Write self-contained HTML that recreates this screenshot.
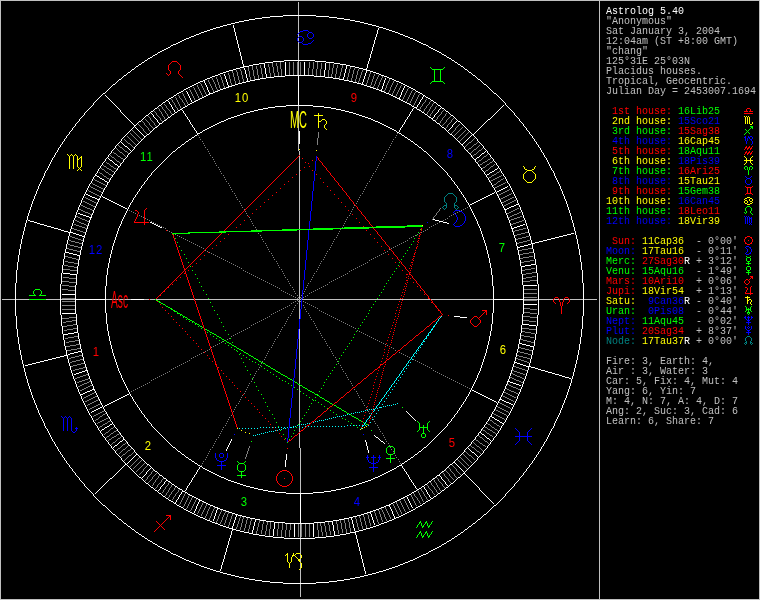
<!DOCTYPE html>
<html lang="en"><head><meta charset="utf-8"><title>Astrolog 5.40</title>
<style>
html,body{margin:0;padding:0;background:#000;}
body{width:760px;height:600px;overflow:hidden;position:relative;}
#chart{position:absolute;left:0;top:0;width:760px;height:600px;display:block;}
#chart path{fill:none;stroke-width:1;shape-rendering:crispEdges;}
#chart text{font-family:"Liberation Sans",sans-serif;}
#chart{will-change:transform;}
#side{position:absolute;left:606px;top:7px;margin:0;font-family:"Liberation Mono",monospace;font-size:10px;line-height:10px;letter-spacing:0;white-space:pre;color:#c0c0c0;}
#side div{height:10px;}
</style></head><body>
<svg id="chart" width="760" height="600" viewBox="0 0 760 600">
<path stroke="#008080" d="M448 193.5h5m-6 1h1m5 0h1m-8 1h1m7 0h1m-10 1h1m9 0h1m-12 1h1m11 0h1m-13 1h1m11 0h1m-13 1h1m11 0h1m-13 1h1m11 0h1m-13 1h1m11 0h1m-12 1h1m9 0h1m-10 1h1m7 0h1m-9 1h1m7 0h1m-11 1h3m7 0h3m-14 1h1m2 0h1m7 0h1m2 0h1m-16 1h1m3 0h1m7 0h1m3 0h1m-16 1h1m1 0h1m9 0h1m1 0h1m-14 1h1m11 0h1m290 127h3m-4 1h1m3 0h1m-6 1h1m5 0h1m-7 1h1m5 0h1m-7 1h1m5 0h1m-6 1h1m3 0h1m-6 1h2m3 0h2m-8 1h1m1 0h1m3 0h1m1 0h1m-8 1h1m5 0h1"/>
<path stroke="#c0c0c0" d="M0 0.5h760m-760 1h1m598 0h1m159 0h1m-760 1h1m297 0h1m300 0h1m159 0h1m-760 1h1m297 0h1m300 0h1m159 0h1m-760 1h1m297 0h1m300 0h1m159 0h1m-760 1h1m297 0h1m300 0h1m159 0h1m-760 1h1m297 0h1m300 0h1m159 0h1m-760 1h1m297 0h1m300 0h1m159 0h1m-760 1h1m297 0h1m300 0h1m159 0h1m-760 1h1m297 0h1m300 0h1m159 0h1m-760 1h1m297 0h1m300 0h1m159 0h1m-760 1h1m297 0h1m300 0h1m159 0h1m-760 1h1m297 0h1m300 0h1m159 0h1m-760 1h1m297 0h1m300 0h1m159 0h1m-760 1h1m297 0h1m300 0h1m159 0h1m-760 1h1m598 0h1m159 0h1m-760 1h1m297 0h1m300 0h1m159 0h1m-760 1h1m297 0h1m300 0h1m159 0h1m-760 1h1m297 0h1m300 0h1m159 0h1m-760 1h1m297 0h1m300 0h1m159 0h1m-760 1h1m297 0h1m300 0h1m159 0h1m-760 1h1m297 0h1m300 0h1m159 0h1m-760 1h1m297 0h1m300 0h1m159 0h1m-760 1h1m297 0h1m300 0h1m159 0h1m-760 1h1m297 0h1m300 0h1m159 0h1m-760 1h1m297 0h1m300 0h1m159 0h1m-760 1h1m297 0h1m300 0h1m159 0h1m-760 1h1m297 0h1m300 0h1m159 0h1m-760 1h1m297 0h1m300 0h1m159 0h1m-760 1h1m297 0h1m300 0h1m159 0h1m-760 1h1m297 0h1m300 0h1m159 0h1m-760 1h1m297 0h1m300 0h1m159 0h1m-760 1h1m297 0h1m300 0h1m159 0h1m-760 1h1m598 0h1m159 0h1m-760 1h1m297 0h1m300 0h1m159 0h1m-760 1h1m297 0h1m300 0h1m159 0h1m-760 1h1m297 0h1m300 0h1m159 0h1m-760 1h1m598 0h1m159 0h1m-760 1h1m297 0h1m300 0h1m159 0h1m-760 1h1m297 0h1m300 0h1m159 0h1m-760 1h1m297 0h1m300 0h1m159 0h1m-760 1h1m598 0h1m159 0h1m-760 1h1m297 0h1m300 0h1m159 0h1m-760 1h1m297 0h1m300 0h1m159 0h1m-760 1h1m297 0h1m300 0h1m159 0h1m-760 1h1m297 0h1m300 0h1m159 0h1m-760 1h1m297 0h1m300 0h1m159 0h1m-760 1h1m297 0h1m300 0h1m159 0h1m-760 1h1m297 0h1m300 0h1m159 0h1m-760 1h1m297 0h1m300 0h1m159 0h1m-760 1h1m297 0h1m300 0h1m159 0h1m-760 1h1m297 0h1m300 0h1m159 0h1m-760 1h1m297 0h1m300 0h1m159 0h1m-760 1h1m297 0h1m300 0h1m159 0h1m-760 1h1m297 0h1m300 0h1m159 0h1m-760 1h1m297 0h1m300 0h1m159 0h1m-760 1h1m297 0h1m300 0h1m159 0h1m-760 1h1m297 0h1m300 0h1m159 0h1m-760 1h1m297 0h1m300 0h1m159 0h1m-760 1h1m297 0h1m300 0h1m159 0h1m-760 1h1m598 0h1m159 0h1m-760 1h1m297 0h1m300 0h1m159 0h1m-760 1h1m297 0h1m300 0h1m159 0h1m-760 1h1m297 0h1m300 0h1m159 0h1m-760 1h1m297 0h1m300 0h1m159 0h1m-760 1h1m297 0h1m300 0h1m159 0h1m-760 1h1m297 0h1m300 0h1m159 0h1m-760 1h1m297 0h1m300 0h1m159 0h1m-760 1h1m297 0h1m300 0h1m159 0h1m-760 1h1m297 0h1m300 0h1m159 0h1m-760 1h1m297 0h1m300 0h1m159 0h1m-760 1h1m297 0h1m300 0h1m159 0h1m-760 1h1m297 0h1m300 0h1m159 0h1m-760 1h1m297 0h1m300 0h1m159 0h1m-760 1h1m297 0h1m300 0h1m159 0h1m-760 1h1m598 0h1m159 0h1m-760 1h1m598 0h1m159 0h1m-760 1h1m598 0h1m159 0h1m-760 1h1m598 0h1m159 0h1m-760 1h1m598 0h1m159 0h1m-760 1h1m598 0h1m159 0h1m-760 1h1m598 0h1m159 0h1m-760 1h1m598 0h1m159 0h1m-760 1h1m598 0h1m159 0h1m-760 1h1m598 0h1m159 0h1m-760 1h1m598 0h1m159 0h1m-760 1h1m598 0h1m159 0h1m-760 1h1m598 0h1m159 0h1m-760 1h1m598 0h1m159 0h1m-760 1h1m598 0h1m159 0h1m-760 1h1m598 0h1m159 0h1m-760 1h1m598 0h1m159 0h1m-760 1h1m598 0h1m159 0h1m-760 1h1m598 0h1m159 0h1m-760 1h1m598 0h1m159 0h1m-760 1h1m598 0h1m159 0h1m-760 1h1m598 0h1m159 0h1m-760 1h1m598 0h1m159 0h1m-760 1h1m598 0h1m159 0h1m-760 1h1m598 0h1m159 0h1m-760 1h1m598 0h1m159 0h1m-760 1h1m598 0h1m159 0h1m-760 1h1m598 0h1m159 0h1m-760 1h1m598 0h1m159 0h1m-760 1h1m598 0h1m159 0h1m-760 1h1m598 0h1m159 0h1m-760 1h1m297 0h1m300 0h1m159 0h1m-760 1h1m297 0h1m300 0h1m159 0h1m-760 1h1m297 0h1m300 0h1m159 0h1m-760 1h1m297 0h1m300 0h1m159 0h1m-760 1h1m297 0h1m300 0h1m159 0h1m-760 1h1m297 0h1m300 0h1m159 0h1m-760 1h1m297 0h1m300 0h1m159 0h1m-760 1h1m297 0h1m300 0h1m159 0h1m-760 1h1m297 0h1m300 0h1m159 0h1m-760 1h1m297 0h1m300 0h1m159 0h1m-760 1h1m297 0h1m300 0h1m159 0h1m-760 1h1m297 0h1m300 0h1m159 0h1m-760 1h1m297 0h1m300 0h1m159 0h1m-760 1h1m297 0h1m300 0h1m159 0h1m-760 1h1m297 0h1m300 0h1m159 0h1m-760 1h1m297 0h1m300 0h1m159 0h1m-760 1h1m297 0h1m300 0h1m159 0h1m-760 1h1m297 0h1m300 0h1m159 0h1m-760 1h1m297 0h1m300 0h1m159 0h1m-760 1h1m297 0h1m300 0h1m159 0h1m-760 1h1m297 0h1m300 0h1m159 0h1m-760 1h1m297 0h1m300 0h1m159 0h1m-760 1h1m297 0h1m300 0h1m159 0h1m-760 1h1m297 0h1m300 0h1m159 0h1m-760 1h1m297 0h1m300 0h1m159 0h1m-760 1h1m297 0h1m300 0h1m159 0h1m-760 1h1m297 0h1m300 0h1m159 0h1m-760 1h1m297 0h1m300 0h1m159 0h1m-760 1h1m297 0h1m300 0h1m159 0h1m-760 1h1m297 0h1m300 0h1m159 0h1m-760 1h1m297 0h1m300 0h1m159 0h1m-760 1h1m297 0h1m300 0h1m159 0h1m-760 1h1m297 0h1m300 0h1m159 0h1m-760 1h1m297 0h1m300 0h1m159 0h1m-760 1h1m297 0h1m300 0h1m159 0h1m-760 1h1m297 0h1m300 0h1m159 0h1m-760 1h1m297 0h1m300 0h1m159 0h1m-760 1h1m297 0h1m300 0h1m159 0h1m-760 1h1m297 0h1m300 0h1m159 0h1m-760 1h1m297 0h1m300 0h1m159 0h1m-760 1h1m297 0h1m300 0h1m159 0h1m-760 1h1m297 0h1m300 0h1m159 0h1m-760 1h1m297 0h1m300 0h1m159 0h1m-760 1h1m297 0h1m300 0h1m159 0h1m-760 1h1m297 0h1m300 0h1m159 0h1m-760 1h1m298 0h1m299 0h1m159 0h1m-760 1h1m298 0h1m299 0h1m159 0h1m-760 1h1m298 0h1m299 0h1m159 0h1m-760 1h1m298 0h1m299 0h1m159 0h1m-760 1h1m598 0h1m159 0h1m-760 1h1m298 0h1m299 0h1m159 0h1m-760 1h1m298 0h1m299 0h1m159 0h1m-760 1h1m298 0h1m299 0h1m159 0h1m-760 1h1m298 0h1m299 0h1m159 0h1m-760 1h1m298 0h1m299 0h1m159 0h1m-760 1h1m298 0h1m299 0h1m159 0h1m-760 1h1m298 0h1m299 0h1m159 0h1m-760 1h1m298 0h1m299 0h1m159 0h1m-760 1h1m298 0h1m299 0h1m159 0h1m-760 1h1m298 0h1m299 0h1m159 0h1m-760 1h1m298 0h1m299 0h1m159 0h1m-760 1h1m298 0h1m299 0h1m159 0h1m-760 1h1m298 0h1m299 0h1m159 0h1m-760 1h1m298 0h1m299 0h1m159 0h1m-760 1h1m298 0h1m299 0h1m159 0h1m-760 1h1m298 0h1m299 0h1m159 0h1m-760 1h1m298 0h1m299 0h1m159 0h1m-760 1h1m298 0h1m299 0h1m159 0h1m-760 1h1m298 0h1m299 0h1m159 0h1m-760 1h1m298 0h1m299 0h1m159 0h1m-760 1h1m298 0h1m299 0h1m159 0h1m-760 1h1m298 0h1m299 0h1m159 0h1m-760 1h1m298 0h1m299 0h1m159 0h1m-760 1h1m298 0h1m299 0h1m159 0h1m-760 1h1m298 0h1m299 0h1m159 0h1m-760 1h1m298 0h1m299 0h1m159 0h1m-760 1h1m298 0h1m299 0h1m159 0h1m-760 1h1m298 0h1m299 0h1m159 0h1m-760 1h1m298 0h1m299 0h1m159 0h1m-760 1h1m298 0h1m299 0h1m159 0h1m-760 1h1m298 0h1m299 0h1m159 0h1m-760 1h1m298 0h1m299 0h1m159 0h1m-760 1h1m298 0h1m299 0h1m159 0h1m-760 1h1m298 0h1m299 0h1m159 0h1m-760 1h1m298 0h1m299 0h1m159 0h1m-760 1h1m298 0h1m299 0h1m159 0h1m-760 1h1m298 0h1m299 0h1m159 0h1m-760 1h1m298 0h1m299 0h1m159 0h1m-760 1h1m298 0h1m299 0h1m159 0h1m-760 1h1m298 0h1m299 0h1m159 0h1m-760 1h1m298 0h1m299 0h1m159 0h1m-760 1h1m298 0h1m299 0h1m159 0h1m-760 1h1m298 0h1m299 0h1m159 0h1m-760 1h1m298 0h1m299 0h1m159 0h1m-760 1h1m298 0h1m299 0h1m159 0h1m-760 1h1m298 0h1m299 0h1m159 0h1m-760 1h1m298 0h1m299 0h1m159 0h1m-760 1h1m298 0h1m299 0h1m159 0h1m-760 1h1m298 0h1m299 0h1m159 0h1m-760 1h1m298 0h1m299 0h1m159 0h1m-760 1h1m298 0h1m299 0h1m159 0h1m-760 1h1m298 0h1m299 0h1m159 0h1m-760 1h1m298 0h1m299 0h1m159 0h1m-760 1h1m298 0h1m299 0h1m159 0h1m-760 1h1m298 0h1m299 0h1m159 0h1m-760 1h1m298 0h1m299 0h1m159 0h1m-760 1h1m298 0h1m299 0h1m159 0h1m-760 1h1m298 0h1m299 0h1m159 0h1m-760 1h1m298 0h1m299 0h1m159 0h1m-760 1h1m298 0h1m299 0h1m159 0h1m-760 1h1m298 0h1m299 0h1m159 0h1m-760 1h1m298 0h1m299 0h1m159 0h1m-760 1h1m298 0h1m299 0h1m159 0h1m-760 1h1m298 0h1m299 0h1m159 0h1m-760 1h1m298 0h1m299 0h1m159 0h1m-760 1h1m298 0h1m299 0h1m159 0h1m-760 1h1m298 0h1m299 0h1m159 0h1m-760 1h1m298 0h1m299 0h1m159 0h1m-760 1h1m298 0h1m299 0h1m159 0h1m-760 1h1m298 0h1m299 0h1m159 0h1m-760 1h1m298 0h1m299 0h1m159 0h1m-760 1h1m298 0h1m299 0h1m159 0h1m-760 1h1m298 0h1m299 0h1m159 0h1m-760 1h1m598 0h1m159 0h1m-760 1h1m298 0h1m299 0h1m159 0h1m-760 1h1m298 0h1m299 0h1m159 0h1m-760 1h1m298 0h1m299 0h1m159 0h1m-760 1h1m298 0h1m299 0h1m159 0h1m-760 1h1m298 0h1m299 0h1m159 0h1m-760 1h1m298 0h1m299 0h1m159 0h1m-760 1h1m298 0h1m299 0h1m159 0h1m-760 1h1m298 0h1m299 0h1m159 0h1m-760 1h1m298 0h1m299 0h1m159 0h1m-760 1h1m298 0h1m299 0h1m159 0h1m-760 1h1m298 0h1m299 0h1m159 0h1m-760 1h1m298 0h1m299 0h1m159 0h1m-760 1h1m298 0h1m299 0h1m159 0h1m-760 1h1m298 0h1m299 0h1m159 0h1m-760 1h1m298 0h1m299 0h1m159 0h1m-760 1h1m298 0h1m299 0h1m159 0h1m-760 1h1m298 0h1m299 0h1m159 0h1m-760 1h1m298 0h1m299 0h1m159 0h1m-760 1h1m298 0h1m299 0h1m159 0h1m-760 1h1m298 0h1m299 0h1m159 0h1m-760 1h1m298 0h1m299 0h1m159 0h1m-760 1h1m298 0h1m299 0h1m159 0h1m-760 1h1m298 0h1m299 0h1m159 0h1m-760 1h1m298 0h1m299 0h1m159 0h1m-760 1h1m298 0h1m299 0h1m159 0h1m-760 1h1m298 0h1m299 0h1m159 0h1m-760 1h1m298 0h1m299 0h1m159 0h1m-760 1h1m298 0h1m299 0h1m159 0h1m-760 1h1m298 0h1m299 0h1m159 0h1m-760 1h1m298 0h1m299 0h1m159 0h1m-760 1h1m298 0h1m299 0h1m159 0h1m-760 1h1m298 0h1m299 0h1m159 0h1m-760 1h1m298 0h1m299 0h1m159 0h1m-760 1h1m298 0h1m299 0h1m159 0h1m-760 1h1m298 0h1m299 0h1m159 0h1m-760 1h1m298 0h1m299 0h1m159 0h1m-760 1h1m298 0h1m299 0h1m159 0h1m-760 1h1m298 0h1m299 0h1m159 0h1m-760 1h1m298 0h1m299 0h1m159 0h1m-760 1h1m298 0h1m299 0h1m159 0h1m-760 1h1m298 0h1m299 0h1m159 0h1m-760 1h1m298 0h1m299 0h1m159 0h1m-760 1h1m298 0h1m299 0h1m159 0h1m-760 1h1m298 0h1m299 0h1m159 0h1m-760 1h1m298 0h1m299 0h1m159 0h1m-760 1h1m298 0h1m299 0h1m159 0h1m-760 1h1m298 0h1m299 0h1m159 0h1m-760 1h1m298 0h1m299 0h1m159 0h1m-760 1h1m298 0h1m299 0h1m159 0h1m-760 1h1m298 0h1m299 0h1m159 0h1m-760 1h1m298 0h1m299 0h1m159 0h1m-760 1h1m298 0h1m299 0h1m159 0h1m-760 1h1m298 0h1m299 0h1m159 0h1m-760 1h1m298 0h1m299 0h1m159 0h1m-760 1h1m298 0h1m299 0h1m159 0h1m-760 1h1m298 0h1m299 0h1m159 0h1m-760 1h1m298 0h1m299 0h1m159 0h1m-760 1h1m298 0h1m299 0h1m159 0h1m-760 1h1m298 0h1m299 0h1m159 0h1m-760 1h1m298 0h1m299 0h1m159 0h1m-760 1h1m298 0h1m299 0h1m159 0h1m-760 1h1m298 0h1m299 0h1m159 0h1m-760 1h1m298 0h1m299 0h1m159 0h1m-760 1h1m298 0h1m299 0h1m159 0h1m-760 1h1m298 0h1m299 0h1m159 0h1m-760 1h1m298 0h1m299 0h1m159 0h1m-760 1h1m298 0h1m299 0h1m159 0h1m-760 1h1m298 0h1m299 0h1m159 0h1m-760 1h1m298 0h1m299 0h1m159 0h1m-760 1h1m1 0h13m1 0h13m17 0h14m1 0h14m31 0h25m13 0h5m1 0h5m1 0h38m1 0h104m1 0h1m1 0h128m1 0h62m31 0h14m1 0h14m1 0h5m1 0h3m1 0h5m1 0h13m1 0h13m2 0h1m159 0h1m-760 1h1m298 0h1m299 0h1m159 0h1m-760 1h1m298 0h1m299 0h1m159 0h1m-760 1h1m298 0h1m299 0h1m159 0h1m-760 1h1m298 0h1m299 0h1m159 0h1m-760 1h1m298 0h1m299 0h1m159 0h1m-760 1h1m298 0h1m299 0h1m159 0h1m-760 1h1m298 0h1m299 0h1m159 0h1m-760 1h1m298 0h1m299 0h1m159 0h1m-760 1h1m298 0h1m299 0h1m159 0h1m-760 1h1m298 0h1m299 0h1m159 0h1m-760 1h1m298 0h1m299 0h1m159 0h1m-760 1h1m298 0h1m299 0h1m159 0h1m-760 1h1m298 0h1m299 0h1m159 0h1m-760 1h1m298 0h1m299 0h1m159 0h1m-760 1h1m298 0h1m299 0h1m159 0h1m-760 1h1m298 0h1m299 0h1m159 0h1m-760 1h1m298 0h1m299 0h1m159 0h1m-760 1h1m298 0h1m299 0h1m159 0h1m-760 1h1m298 0h1m299 0h1m159 0h1m-760 1h1m598 0h1m159 0h1m-760 1h1m598 0h1m159 0h1m-760 1h1m598 0h1m159 0h1m-760 1h1m598 0h1m159 0h1m-760 1h1m598 0h1m159 0h1m-760 1h1m598 0h1m159 0h1m-760 1h1m598 0h1m159 0h1m-760 1h1m598 0h1m159 0h1m-760 1h1m598 0h1m159 0h1m-760 1h1m598 0h1m159 0h1m-760 1h1m298 0h1m299 0h1m159 0h1m-760 1h1m298 0h1m299 0h1m159 0h1m-760 1h1m298 0h1m299 0h1m159 0h1m-760 1h1m298 0h1m299 0h1m159 0h1m-760 1h1m298 0h1m299 0h1m159 0h1m-760 1h1m298 0h1m299 0h1m159 0h1m-760 1h1m298 0h1m299 0h1m159 0h1m-760 1h1m298 0h1m299 0h1m159 0h1m-760 1h1m298 0h1m299 0h1m159 0h1m-760 1h1m298 0h1m299 0h1m159 0h1m-760 1h1m298 0h1m299 0h1m159 0h1m-760 1h1m298 0h1m299 0h1m159 0h1m-760 1h1m298 0h1m299 0h1m159 0h1m-760 1h1m298 0h1m299 0h1m159 0h1m-760 1h1m298 0h1m299 0h1m159 0h1m-760 1h1m298 0h1m299 0h1m159 0h1m-760 1h1m298 0h1m299 0h1m159 0h1m-760 1h1m298 0h1m299 0h1m159 0h1m-760 1h1m298 0h1m299 0h1m159 0h1m-760 1h1m298 0h1m299 0h1m159 0h1m-760 1h1m298 0h1m299 0h1m159 0h1m-760 1h1m298 0h1m299 0h1m159 0h1m-760 1h1m298 0h1m299 0h1m159 0h1m-760 1h1m298 0h1m299 0h1m159 0h1m-760 1h1m298 0h1m299 0h1m159 0h1m-760 1h1m298 0h1m299 0h1m159 0h1m-760 1h1m298 0h1m299 0h1m159 0h1m-760 1h1m298 0h1m299 0h1m159 0h1m-760 1h1m298 0h1m299 0h1m159 0h1m-760 1h1m298 0h1m299 0h1m159 0h1m-760 1h1m298 0h1m299 0h1m159 0h1m-760 1h1m298 0h1m299 0h1m159 0h1m-760 1h1m298 0h1m299 0h1m159 0h1m-760 1h1m298 0h1m299 0h1m159 0h1m-760 1h1m298 0h1m299 0h1m159 0h1m-760 1h1m298 0h1m299 0h1m159 0h1m-760 1h1m298 0h1m299 0h1m159 0h1m-760 1h1m298 0h1m299 0h1m159 0h1m-760 1h1m298 0h1m299 0h1m159 0h1m-760 1h1m298 0h1m299 0h1m159 0h1m-760 1h1m298 0h1m299 0h1m159 0h1m-760 1h1m298 0h1m299 0h1m159 0h1m-760 1h1m298 0h1m299 0h1m159 0h1m-760 1h1m298 0h1m299 0h1m159 0h1m-760 1h1m298 0h1m299 0h1m159 0h1m-760 1h1m298 0h1m299 0h1m159 0h1m-760 1h1m298 0h1m299 0h1m159 0h1m-760 1h1m298 0h1m299 0h1m159 0h1m-760 1h1m298 0h1m299 0h1m159 0h1m-760 1h1m298 0h1m299 0h1m159 0h1m-760 1h1m298 0h1m299 0h1m159 0h1m-760 1h1m298 0h1m299 0h1m159 0h1m-760 1h1m298 0h1m299 0h1m159 0h1m-760 1h1m298 0h1m299 0h1m159 0h1m-760 1h1m298 0h1m299 0h1m159 0h1m-760 1h1m598 0h1m159 0h1m-760 1h1m298 0h1m299 0h1m159 0h1m-760 1h1m298 0h1m299 0h1m159 0h1m-760 1h1m298 0h1m299 0h1m159 0h1m-760 1h1m298 0h1m299 0h1m159 0h1m-760 1h1m298 0h1m299 0h1m159 0h1m-760 1h1m298 0h1m299 0h1m159 0h1m-760 1h1m298 0h1m299 0h1m159 0h1m-760 1h1m298 0h1m299 0h1m159 0h1m-760 1h1m298 0h1m299 0h1m159 0h1m-760 1h1m298 0h1m299 0h1m159 0h1m-760 1h1m298 0h1m299 0h1m159 0h1m-760 1h1m298 0h1m299 0h1m159 0h1m-760 1h1m298 0h1m299 0h1m159 0h1m-760 1h1m298 0h1m299 0h1m159 0h1m-760 1h1m298 0h1m299 0h1m159 0h1m-760 1h1m298 0h1m299 0h1m159 0h1m-760 1h1m298 0h1m299 0h1m159 0h1m-760 1h1m298 0h1m299 0h1m159 0h1m-760 1h1m298 0h1m299 0h1m159 0h1m-760 1h1m298 0h1m299 0h1m159 0h1m-760 1h1m298 0h1m299 0h1m159 0h1m-760 1h1m298 0h1m299 0h1m159 0h1m-760 1h1m298 0h1m299 0h1m159 0h1m-760 1h1m298 0h1m299 0h1m159 0h1m-760 1h1m298 0h1m299 0h1m159 0h1m-760 1h1m298 0h1m299 0h1m159 0h1m-760 1h1m298 0h1m299 0h1m159 0h1m-760 1h1m298 0h1m299 0h1m159 0h1m-760 1h1m298 0h1m299 0h1m159 0h1m-760 1h1m298 0h1m299 0h1m159 0h1m-760 1h1m298 0h1m299 0h1m159 0h1m-760 1h1m298 0h1m299 0h1m159 0h1m-760 1h1m298 0h1m299 0h1m159 0h1m-760 1h1m298 0h1m299 0h1m159 0h1m-760 1h1m298 0h1m299 0h1m159 0h1m-760 1h1m298 0h1m299 0h1m159 0h1m-760 1h1m298 0h1m299 0h1m159 0h1m-760 1h1m298 0h1m299 0h1m159 0h1m-760 1h1m298 0h1m299 0h1m159 0h1m-760 1h1m298 0h1m299 0h1m159 0h1m-760 1h1m598 0h1m159 0h1m-760 1h1m298 0h1m299 0h1m159 0h1m-760 1h1m598 0h1m159 0h1m-760 1h1m298 0h1m299 0h1m159 0h1m-760 1h1m298 0h1m299 0h1m159 0h1m-760 1h1m298 0h1m299 0h1m159 0h1m-760 1h1m298 0h1m299 0h1m159 0h1m-760 1h1m598 0h1m159 0h1m-760 1h1m298 0h1m299 0h1m159 0h1m-760 1h1m298 0h1m299 0h1m159 0h1m-760 1h1m298 0h1m299 0h1m159 0h1m-760 1h1m298 0h1m299 0h1m159 0h1m-760 1h1m298 0h1m299 0h1m159 0h1m-760 1h1m298 0h1m299 0h1m159 0h1m-760 1h1m298 0h1m299 0h1m159 0h1m-760 1h1m298 0h1m299 0h1m159 0h1m-760 1h1m298 0h1m299 0h1m159 0h1m-760 1h1m298 0h1m299 0h1m159 0h1m-760 1h1m298 0h1m299 0h1m159 0h1m-760 1h1m298 0h1m299 0h1m159 0h1m-760 1h1m298 0h1m299 0h1m159 0h1m-760 1h1m298 0h1m299 0h1m159 0h1m-760 1h1m298 0h1m299 0h1m159 0h1m-760 1h1m299 0h1m298 0h1m159 0h1m-760 1h1m299 0h1m298 0h1m159 0h1m-760 1h1m299 0h1m298 0h1m159 0h1m-760 1h1m299 0h1m298 0h1m159 0h1m-760 1h1m299 0h1m298 0h1m159 0h1m-760 1h1m299 0h1m298 0h1m159 0h1m-760 1h1m299 0h1m298 0h1m159 0h1m-760 1h1m299 0h1m298 0h1m159 0h1m-760 1h1m299 0h1m298 0h1m159 0h1m-760 1h1m299 0h1m298 0h1m159 0h1m-760 1h1m299 0h1m298 0h1m159 0h1m-760 1h1m299 0h1m298 0h1m159 0h1m-760 1h1m299 0h1m298 0h1m159 0h1m-760 1h1m299 0h1m298 0h1m159 0h1m-760 1h1m299 0h1m298 0h1m159 0h1m-760 1h1m299 0h1m298 0h1m159 0h1m-760 1h1m299 0h1m298 0h1m159 0h1m-760 1h1m299 0h1m298 0h1m159 0h1m-760 1h1m299 0h1m298 0h1m159 0h1m-760 1h1m299 0h1m298 0h1m159 0h1m-760 1h1m299 0h1m298 0h1m159 0h1m-760 1h1m299 0h1m298 0h1m159 0h1m-760 1h1m299 0h1m298 0h1m159 0h1m-760 1h1m299 0h1m298 0h1m159 0h1m-760 1h1m299 0h1m298 0h1m159 0h1m-760 1h1m299 0h1m298 0h1m159 0h1m-760 1h1m299 0h1m298 0h1m159 0h1m-760 1h1m299 0h1m298 0h1m159 0h1m-760 1h1m299 0h1m298 0h1m159 0h1m-760 1h1m299 0h1m298 0h1m159 0h1m-760 1h1m299 0h1m298 0h1m159 0h1m-760 1h1m299 0h1m298 0h1m159 0h1m-760 1h1m299 0h1m298 0h1m159 0h1m-760 1h1m299 0h1m298 0h1m159 0h1m-760 1h1m299 0h1m298 0h1m159 0h1m-760 1h1m299 0h1m298 0h1m159 0h1m-760 1h1m299 0h1m298 0h1m159 0h1m-760 1h1m299 0h1m298 0h1m159 0h1m-760 1h1m299 0h1m298 0h1m159 0h1m-760 1h1m299 0h1m298 0h1m159 0h1m-760 1h1m299 0h1m298 0h1m159 0h1m-760 1h1m299 0h1m298 0h1m159 0h1m-760 1h1m299 0h1m298 0h1m159 0h1m-760 1h1m299 0h1m298 0h1m159 0h1m-760 1h1m299 0h1m298 0h1m159 0h1m-760 1h1m598 0h1m159 0h1m-760 1h1m598 0h1m159 0h1m-760 1h1m598 0h1m159 0h1m-760 1h1m598 0h1m159 0h1m-760 1h1m598 0h1m159 0h1m-760 1h1m598 0h1m159 0h1m-760 1h1m598 0h1m159 0h1m-760 1h1m598 0h1m159 0h1m-760 1h1m598 0h1m159 0h1m-760 1h1m598 0h1m159 0h1m-760 1h1m598 0h1m159 0h1m-760 1h1m598 0h1m159 0h1m-760 1h1m598 0h1m159 0h1m-760 1h1m598 0h1m159 0h1m-760 1h1m598 0h1m159 0h1m-760 1h1m598 0h1m159 0h1m-760 1h1m598 0h1m159 0h1m-760 1h1m598 0h1m159 0h1m-760 1h1m598 0h1m159 0h1m-760 1h1m598 0h1m159 0h1m-760 1h1m598 0h1m159 0h1m-760 1h1m598 0h1m159 0h1m-760 1h1m598 0h1m159 0h1m-760 1h1m598 0h1m159 0h1m-760 1h1m598 0h1m159 0h1m-760 1h1m598 0h1m159 0h1m-760 1h1m598 0h1m159 0h1m-760 1h1m598 0h1m159 0h1m-760 1h1m598 0h1m159 0h1m-760 1h1m598 0h1m159 0h1m-760 1h1m598 0h1m159 0h1m-760 1h1m299 0h1m298 0h1m159 0h1m-760 1h1m299 0h1m298 0h1m159 0h1m-760 1h1m299 0h1m298 0h1m159 0h1m-760 1h1m299 0h1m298 0h1m159 0h1m-760 1h1m299 0h1m298 0h1m159 0h1m-760 1h1m299 0h1m298 0h1m159 0h1m-760 1h1m299 0h1m298 0h1m159 0h1m-760 1h1m299 0h1m298 0h1m159 0h1m-760 1h1m299 0h1m298 0h1m159 0h1m-760 1h1m299 0h1m298 0h1m159 0h1m-760 1h1m299 0h1m298 0h1m159 0h1m-760 1h1m299 0h1m298 0h1m159 0h1m-760 1h1m299 0h1m298 0h1m159 0h1m-760 1h1m299 0h1m298 0h1m159 0h1m-760 1h1m598 0h1m159 0h1m-760 1h1m299 0h1m298 0h1m159 0h1m-760 1h1m299 0h1m298 0h1m159 0h1m-760 1h1m299 0h1m298 0h1m159 0h1m-760 1h1m299 0h1m298 0h1m159 0h1m-760 1h1m299 0h1m298 0h1m159 0h1m-760 1h1m299 0h1m298 0h1m159 0h1m-760 1h1m299 0h1m298 0h1m159 0h1m-760 1h1m299 0h1m298 0h1m159 0h1m-760 1h1m299 0h1m298 0h1m159 0h1m-760 1h1m299 0h1m298 0h1m159 0h1m-760 1h1m299 0h1m298 0h1m159 0h1m-760 1h1m299 0h1m298 0h1m159 0h1m-760 1h1m299 0h1m298 0h1m159 0h1m-760 1h1m299 0h1m298 0h1m159 0h1m-760 1h1m299 0h1m298 0h1m159 0h1m-760 1h1m598 0h1m159 0h1m-760 1h1m299 0h1m298 0h1m159 0h1m-760 1h1m299 0h1m298 0h1m159 0h1m-760 1h1m299 0h1m298 0h1m159 0h1m-760 1h1m598 0h1m159 0h1m-760 1h1m299 0h1m298 0h1m159 0h1m-760 1h1m299 0h1m298 0h1m159 0h1m-760 1h1m299 0h1m298 0h1m159 0h1m-760 1h1m598 0h1m159 0h1m-760 1h1m299 0h1m298 0h1m159 0h1m-760 1h1m299 0h1m298 0h1m159 0h1m-760 1h1m299 0h1m298 0h1m159 0h1m-760 1h1m299 0h1m298 0h1m159 0h1m-760 1h1m299 0h1m298 0h1m159 0h1m-760 1h1m598 0h1m159 0h1m-760 1h1m299 0h1m298 0h1m159 0h1m-760 1h1m299 0h1m298 0h1m159 0h1m-760 1h1m299 0h1m298 0h1m159 0h1m-760 1h1m299 0h1m298 0h1m159 0h1m-760 1h1m299 0h1m298 0h1m159 0h1m-760 1h1m299 0h1m298 0h1m159 0h1m-760 1h1m299 0h1m298 0h1m159 0h1m-760 1h1m299 0h1m298 0h1m159 0h1m-760 1h1m299 0h1m298 0h1m159 0h1m-760 1h1m299 0h1m298 0h1m159 0h1m-760 1h1m299 0h1m298 0h1m159 0h1m-760 1h1m299 0h1m298 0h1m159 0h1m-760 1h1m299 0h1m298 0h1m159 0h1m-760 1h1m299 0h1m298 0h1m159 0h1m-760 1h1m598 0h1m159 0h1m-760 1h1m299 0h1m298 0h1m159 0h1m-760 1h1m299 0h1m298 0h1m159 0h1m-760 1h1m299 0h1m298 0h1m159 0h1m-760 1h1m299 0h1m298 0h1m159 0h1m-760 1h1m299 0h1m298 0h1m159 0h1m-760 1h1m299 0h1m298 0h1m159 0h1m-760 1h1m299 0h1m298 0h1m159 0h1m-760 1h1m299 0h1m298 0h1m159 0h1m-760 1h1m299 0h1m298 0h1m159 0h1m-760 1h1m299 0h1m298 0h1m159 0h1m-760 1h1m299 0h1m298 0h1m159 0h1m-760 1h1m299 0h1m298 0h1m159 0h1m-760 1h1m299 0h1m298 0h1m159 0h1m-760 1h1m598 0h1m159 0h1m-760 1h1m598 0h1m159 0h1m-760 1h760"/>
<path stroke="#808080" d="M280 62.5h1m8 0h1m3 0h1m3 0h1m2 0h1m8 0h1m3 0h1m3 0h1m-46 1h1m3 0h1m3 0h1m8 0h1m3 0h1m3 0h1m2 0h1m8 0h1m3 0h1m3 0h1m3 0h1m7 0h1m-62 1h1m3 0h1m3 0h1m3 0h1m8 0h1m3 0h1m3 0h1m2 0h1m8 0h1m3 0h1m3 0h1m3 0h1m7 0h1m3 0h1m-74 1h1m7 0h1m3 0h1m3 0h1m3 0h1m8 0h1m3 0h1m3 0h1m2 0h1m8 0h1m3 0h1m3 0h1m3 0h1m7 0h1m3 0h1m3 0h1m4 0h1m-91 1h1m3 0h1m3 0h1m7 0h1m3 0h1m4 0h1m2 0h1m8 0h1m3 0h1m3 0h1m2 0h1m8 0h1m3 0h1m3 0h1m3 0h1m7 0h1m3 0h1m3 0h1m4 0h1m-95 1h1m3 0h1m3 0h1m3 0h1m8 0h1m3 0h1m3 0h1m2 0h1m8 0h1m3 0h1m3 0h1m2 0h1m8 0h1m3 0h1m3 0h1m3 0h1m7 0h1m3 0h1m3 0h1m4 0h1m7 0h1m-103 1h1m3 0h1m3 0h1m4 0h1m7 0h1m3 0h1m3 0h1m2 0h1m8 0h1m3 0h1m3 0h1m2 0h1m7 0h1m4 0h1m3 0h1m3 0h1m7 0h1m2 0h1m3 0h1m4 0h1m8 0h1m3 0h1m-115 1h1m7 0h1m3 0h1m4 0h1m3 0h1m7 0h1m3 0h1m3 0h1m3 0h1m7 0h1m3 0h1m3 0h1m2 0h1m7 0h1m3 0h1m3 0h1m3 0h1m8 0h1m2 0h1m3 0h1m4 0h1m7 0h1m4 0h1m3 0h1m-123 1h1m3 0h1m7 0h1m4 0h1m3 0h1m3 0h1m7 0h1m3 0h1m3 0h1m3 0h1m7 0h1m3 0h1m3 0h1m2 0h1m7 0h1m3 0h1m3 0h1m3 0h1m7 0h1m3 0h1m3 0h1m4 0h1m7 0h1m3 0h1m4 0h1m3 0h1m-131 1h1m3 0h1m4 0h1m7 0h1m3 0h1m3 0h1m3 0h1m7 0h1m3 0h1m3 0h1m3 0h1m7 0h1m3 0h1m3 0h1m2 0h1m7 0h1m3 0h1m3 0h1m3 0h1m7 0h1m3 0h1m3 0h1m4 0h1m7 0h1m3 0h1m3 0h1m4 0h1m-131 1h1m4 0h1m3 0h1m7 0h1m3 0h1m3 0h1m3 0h1m7 0h1m3 0h1m4 0h1m2 0h1m7 0h1m3 0h1m3 0h1m2 0h1m7 0h1m3 0h1m3 0h1m3 0h1m7 0h1m3 0h1m3 0h1m3 0h1m8 0h1m3 0h1m3 0h1m3 0h1m8 0h1m-143 1h1m4 0h1m3 0h1m3 0h1m7 0h1m3 0h1m3 0h1m3 0h1m8 0h1m3 0h1m3 0h1m2 0h1m7 0h1m3 0h1m3 0h1m2 0h1m7 0h1m3 0h1m3 0h1m3 0h1m7 0h1m3 0h1m3 0h1m3 0h1m7 0h1m4 0h1m3 0h1m3 0h1m8 0h1m-143 1h1m4 0h1m3 0h1m3 0h1m7 0h1m3 0h1m3 0h1m4 0h1m7 0h1m3 0h1m3 0h1m2 0h1m7 0h1m3 0h1m3 0h1m2 0h1m7 0h1m3 0h1m3 0h1m3 0h1m7 0h1m2 0h1m3 0h1m4 0h1m7 0h1m3 0h1m4 0h1m3 0h1m7 0h1m4 0h1m-155 1h1m8 0h1m3 0h1m3 0h1m4 0h1m6 0h1m3 0h1m4 0h1m3 0h1m7 0h1m3 0h1m3 0h1m2 0h1m34 0h1m3 0h1m7 0h1m2 0h1m3 0h1m4 0h1m7 0h1m3 0h1m3 0h1m3 0h1m8 0h1m4 0h1m3 0h1m-159 1h1m8 0h1m3 0h1m4 0h1m3 0h1m6 0h1m4 0h1m3 0h1m3 0h1m7 0h1m57 0h1m2 0h1m3 0h1m3 0h1m8 0h1m3 0h1m3 0h1m3 0h1m8 0h1m3 0h1m4 0h1m3 0h1m-167 1h1m4 0h1m7 0h1m4 0h1m3 0h1m3 0h1m7 0h1m3 0h1m3 0h1m3 0h1m72 0h1m3 0h1m7 0h1m4 0h1m3 0h1m3 0h1m7 0h1m4 0h1m3 0h1m4 0h1m-171 1h1m3 0h1m4 0h1m7 0h1m4 0h1m3 0h1m3 0h1m7 0h1m3 0h1m3 0h1m80 0h1m7 0h1m3 0h1m4 0h1m2 0h1m8 0h1m4 0h1m3 0h1m3 0h1m-170 1h1m4 0h1m3 0h1m8 0h1m3 0h1m3 0h1m4 0h1m6 0h1m3 0h1m92 0h1m3 0h1m3 0h1m3 0h1m8 0h1m3 0h1m3 0h1m4 0h1m7 0h1m-182 1h1m4 0h1m3 0h1m4 0h1m7 0h1m3 0h1m4 0h1m3 0h1m107 0h1m3 0h1m3 0h1m7 0h1m4 0h1m3 0h1m3 0h1m8 0h1m-182 1h1m4 0h1m3 0h1m4 0h1m7 0h1m4 0h1m3 0h1m3 0h1m111 0h1m2 0h1m8 0h1m4 0h1m2 0h1m4 0h1m7 0h1m4 0h1m-185 1h1m4 0h1m3 0h1m3 0h1m7 0h1m4 0h1m3 0h1m118 0h1m8 0h1m3 0h1m3 0h1m3 0h1m8 0h1m4 0h1m-194 1h1m8 0h1m4 0h1m3 0h1m4 0h1m7 0h1m3 0h1m130 0h1m4 0h1m3 0h1m3 0h1m7 0h1m4 0h1m4 0h1m-197 1h1m8 0h1m4 0h1m2 0h1m4 0h1m7 0h1m134 0h1m4 0h1m2 0h1m4 0h1m7 0h1m4 0h1m4 0h1m-201 1h1m3 0h1m8 0h1m4 0h1m3 0h1m3 0h1m7 0h1m138 0h1m3 0h1m3 0h1m7 0h1m4 0h1m4 0h1m4 0h1m-205 1h1m4 0h1m8 0h1m3 0h1m3 0h1m4 0h1m145 0h1m2 0h1m4 0h1m7 0h1m4 0h1m4 0h1m3 0h1m-208 1h1m4 0h1m3 0h1m8 0h1m4 0h1m2 0h1m4 0h1m148 0h1m3 0h1m8 0h1m3 0h1m4 0h1m4 0h1m-207 1h1m3 0h1m4 0h1m8 0h1m3 0h1m3 0h1m156 0h1m7 0h1m4 0h1m4 0h1m3 0h1m8 0h1m-220 1h1m4 0h1m4 0h1m3 0h1m8 0h1m4 0h1m167 0h1m4 0h1m3 0h1m4 0h1m7 0h1m-218 1h1m4 0h1m3 0h1m4 0h1m8 0h1m3 0h1m166 0h1m4 0h1m4 0h1m3 0h1m8 0h1m4 0h1m-223 1h1m4 0h1m4 0h1m3 0h1m8 0h1m170 0h1m4 0h1m3 0h1m4 0h1m7 0h1m4 0h1m-221 1h1m4 0h1m3 0h1m4 0h1m182 0h1m4 0h1m3 0h1m8 0h1m4 0h1m3 0h1m-234 1h1m8 0h1m4 0h1m4 0h1m3 0h1m186 0h1m4 0h1m7 0h1m4 0h1m3 0h1m-232 1h1m8 0h1m4 0h1m3 0h1m4 0h1m185 0h1m3 0h1m8 0h1m4 0h1m3 0h1m4 0h1m-242 1h1m4 0h1m8 0h1m4 0h1m4 0h1m193 0h1m7 0h1m4 0h1m3 0h1m4 0h1m-240 1h1m4 0h1m8 0h1m4 0h1m3 0h1m192 0h1m8 0h1m4 0h1m3 0h1m4 0h1m-244 1h1m3 0h1m4 0h1m8 0h1m4 0h1m204 0h1m4 0h1m3 0h1m4 0h1m-242 1h1m3 0h1m4 0h1m8 0h1m4 0h1m203 0h1m4 0h1m3 0h1m4 0h1m-247 1h1m4 0h1m4 0h1m3 0h1m8 0h1m207 0h1m4 0h1m3 0h1m4 0h1m9 0h1m-255 1h1m4 0h1m4 0h1m3 0h1m8 0h1m211 0h1m3 0h1m4 0h1m8 0h1m-254 1h1m4 0h1m4 0h1m3 0h1m219 0h1m3 0h1m4 0h1m9 0h1m4 0h1m-258 1h1m4 0h1m4 0h1m3 0h1m222 0h1m4 0h1m8 0h1m4 0h1m-256 1h1m3 0h1m5 0h1m2 0h1m221 0h1m4 0h1m8 0h1m5 0h1m3 0h1m-270 1h1m9 0h1m4 0h1m4 0h1m229 0h1m7 0h1m5 0h1m3 0h1m-268 1h1m9 0h1m3 0h1m5 0h1m227 0h1m8 0h1m4 0h1m4 0h1m-272 1h1m4 0h1m8 0h1m4 0h1m240 0h1m4 0h1m4 0h1m4 0h1m-275 1h1m3 0h1m9 0h1m3 0h1m239 0h1m5 0h1m3 0h1m4 0h1m-278 1h1m3 0h1m4 0h1m9 0h1m3 0h1m238 0h1m4 0h1m4 0h1m4 0h1m-277 1h1m3 0h1m4 0h1m8 0h1m241 0h1m4 0h1m4 0h1m4 0h1m-276 1h1m4 0h1m4 0h1m254 0h1m4 0h1m3 0h1m9 0h1m-290 1h1m5 0h1m4 0h1m4 0h1m252 0h1m4 0h1m3 0h1m9 0h1m-288 1h1m5 0h1m3 0h1m4 0h1m256 0h1m4 0h1m8 0h1m-286 1h1m4 0h1m4 0h1m4 0h1m255 0h1m3 0h1m9 0h1m4 0h1m-291 1h1m5 0h1m4 0h1m262 0h1m9 0h1m4 0h1m-289 1h1m4 0h1m4 0h1m262 0h1m8 0h1m5 0h1m-298 1h1m9 0h1m4 0h1m4 0h1m260 0h1m8 0h1m5 0h1m5 0h1m-302 1h1m9 0h1m4 0h1m272 0h1m5 0h1m5 0h1m-300 1h1m9 0h1m3 0h1m272 0h1m4 0h1m5 0h1m4 0h1m-309 1h1m4 0h1m9 0h1m4 0h1m270 0h1m5 0h1m4 0h1m4 0h1m-307 1h1m4 0h1m9 0h1m273 0h1m5 0h1m4 0h1m4 0h1m-310 1h1m4 0h1m4 0h1m9 0h1m277 0h1m5 0h1m4 0h1m-309 1h1m4 0h1m4 0h1m286 0h1m4 0h1m4 0h1m-307 1h1m4 0h1m4 0h1m284 0h1m4 0h1m4 0h1m-312 1h1m5 0h1m4 0h1m4 0h1m288 0h1m4 0h1m10 0h1m-321 1h1m5 0h1m4 0h1m4 0h1m286 0h1m4 0h1m10 0h1m-319 1h1m5 0h1m4 0h1m4 0h1m290 0h1m9 0h1m-317 1h1m5 0h1m4 0h1m293 0h1m9 0h1m5 0h1m-321 1h1m5 0h1m4 0h1m291 0h1m9 0h1m5 0h1m-319 1h1m4 0h1m306 0h1m4 0h1m-329 1h1m10 0h1m5 0h1m304 0h1m4 0h1m5 0h1m-333 1h1m10 0h1m5 0h1m302 0h1m4 0h1m5 0h1m-331 1h1m10 0h1m172 0h1m133 0h1m4 0h1m5 0h1m4 0h1m-339 1h1m4 0h1m10 0h1m171 0h1m78 0h1m53 0h1m4 0h1m5 0h1m4 0h1m-337 1h1m4 0h1m181 0h1m136 0h1m5 0h1m4 0h1m-335 1h1m4 0h1m60 0h1m119 0h1m77 0h1m57 0h1m5 0h1m4 0h1m-339 1h1m5 0h1m4 0h1m179 0h1m140 0h1m4 0h1m-337 1h1m5 0h1m4 0h1m59 0h1m118 0h1m76 0h1m62 0h1m4 0h1m-335 1h1m5 0h1m4 0h1m176 0h1m139 0h1m4 0h1m11 0h1m-351 1h1m5 0h1m5 0h1m4 0h1m58 0h1m116 0h1m75 0h1m67 0h1m11 0h1m-349 1h1m5 0h1m5 0h1m179 0h1m142 0h1m11 0h1m-347 1h1m5 0h1m5 0h1m63 0h1m114 0h1m74 0h1m66 0h1m11 0h1m-345 1h1m5 0h1m183 0h1m151 0h2m6 0h1m-350 1h2m4 0h1m68 0h1m113 0h1m73 0h1m76 0h1m7 0h1m-347 1h1m4 0h1m181 0h1m149 0h1m6 0h2m-358 1h1m12 0h1m72 0h1m185 0h1m75 0h1m6 0h1m5 0h1m-361 1h1m12 0h1m332 0h1m6 0h1m5 0h1m-359 1h2m11 0h1m71 0h1m183 0h1m81 0h1m5 0h1m-362 1h1m5 0h1m346 0h2m5 0h1m5 0h1m-366 1h1m5 0h1m83 0h1m180 0h1m79 0h1m5 0h2m5 0h1m-364 1h1m5 0h1m342 0h1m5 0h1m5 0h2m-362 1h1m5 0h2m81 0h1m177 0h1m85 0h1m5 0h1m-366 1h1m6 0h2m5 0h1m343 0h1m5 0h1m-364 1h2m6 0h1m5 0h1m80 0h1m175 0h1m84 0h1m5 0h1m-361 1h1m6 0h1m350 0h2m11 0h1m-378 1h1m6 0h1m6 0h1m85 0h1m173 0h1m88 0h1m12 0h1m-376 1h1m6 0h2m5 0h1m346 0h1m11 0h2m-374 1h2m6 0h1m91 0h1m170 0h1m99 0h1m-370 1h1m6 0h2m359 0h1m7 0h1m-376 1h1m7 0h1m89 0h1m168 0h1m98 0h1m6 0h2m-374 1h1m362 0h2m6 0h1m-371 1h2m95 0h1m165 0h1m97 0h1m6 0h2m5 0h1m-387 1h1m12 0h1m357 0h1m5 0h2m5 0h2m-385 1h2m11 0h1m94 0h1m163 0h1m102 0h1m6 0h1m-381 1h1m370 0h2m5 0h2m5 0h1m-392 1h1m6 0h1m105 0h1m161 0h1m100 0h1m6 0h1m6 0h1m-390 1h2m5 0h2m372 0h1m5 0h2m-387 1h1m6 0h1m104 0h1m158 0h1m105 0h2m5 0h1m-390 1h1m5 0h2m5 0h2m366 0h1m6 0h1m-388 1h2m5 0h2m5 0h1m102 0h1m156 0h1m111 0h1m-385 1h1m6 0h1m374 0h2m-383 1h1m6 0h2m106 0h1m154 0h1m109 0h1m13 0h1m-401 1h1m6 0h2m389 0h2m-399 1h2m6 0h1m112 0h1m151 0h1m122 0h1m-395 1h1m6 0h2m383 0h2m-393 1h1m7 0h1m111 0h1m148 0h1m119 0h2m7 0h1m-398 1h2m385 0h1m7 0h2m-395 1h1m117 0h1m146 0h1m117 0h2m6 0h2m-392 1h2m386 0h2m6 0h1m-410 1h1m14 0h1m115 0h1m144 0h1m122 0h2m6 0h2m-408 1h2m394 0h2m7 0h1m-404 1h2m127 0h1m142 0h1m120 0h1m7 0h2m-401 1h2m396 0h1m7 0h1m-414 1h1m8 0h2m125 0h1m138 0h1m128 0h1m6 0h2m-412 1h2m8 0h2m389 0h2m5 0h2m-408 1h2m8 0h1m123 0h1m136 0h1m126 0h1m5 0h2m-411 1h1m6 0h2m398 0h2m-408 1h2m6 0h2m129 0h1m134 0h1m129 0h2m-404 1h2m6 0h2m-8 1h2m6 0h1m127 0h1m132 0h1m144 0h1m-422 1h1m8 0h2m408 0h2m-420 1h2m8 0h2m131 0h1m130 0h1m141 0h2m-416 1h2m8 0h1m401 0h2m-412 1h2m139 0h1m127 0h1m138 0h2m8 0h1m-417 1h2m402 0h2m8 0h2m-414 1h2m136 0h1m124 0h1m137 0h1m8 0h2m-410 1h1m405 0h2m-422 1h1m150 0h1m122 0h1m143 0h2m7 0h2m-428 1h2m413 0h2m7 0h2m-424 1h2m147 0h1m120 0h1m141 0h1m7 0h2m-420 1h2m414 0h2m6 0h2m-433 1h2m7 0h2m145 0h1m117 0h1m146 0h2m6 0h2m-429 1h2m7 0h2m406 0h2m6 0h2m-425 1h2m7 0h1m143 0h1m115 0h1m151 0h2m-421 1h2m415 0h2m-427 1h2m8 0h2m148 0h1m112 0h1m149 0h2m-423 1h2m8 0h2m-10 1h2m155 0h1m110 0h1m113 0h1m-381 1h3m350 0h1m24 0h1m51 0h2m-440 1h2m9 0h2m152 0h1m107 0h1m86 0h1m23 0h1m51 0h2m-436 1h2m9 0h1m36 0h1m309 0h1m21 0h1m51 0h2m-432 1h2m46 0h1m113 0h1m105 0h1m86 0h1m20 0h1m51 0h2m-428 1h3m45 0h1m303 0h1m19 0h1m51 0h2m8 0h2m-433 1h2m45 0h1m110 0h1m103 0h1m85 0h1m18 0h1m51 0h2m8 0h2m-429 1h2m344 0h1m16 0h1m60 0h3m-378 1h1m107 0h1m101 0h1m85 0h1m15 0h1m60 0h2m-438 1h2m63 0h1m292 0h1m14 0h1m60 0h2m8 0h2m-444 1h2m63 0h1m105 0h1m97 0h1m85 0h1m74 0h2m7 0h3m-440 1h2m63 0h1m287 0h1m13 0h1m66 0h3m-435 1h3m62 0h1m102 0h1m95 0h1m85 0h1m12 0h1m65 0h3m-439 1h2m8 0h2m62 0h1m293 0h1m66 0h1m11 0h2m-447 1h2m8 0h2m62 0h1m99 0h1m93 0h1m173 0h3m-443 1h2m72 0h1m285 0h1m76 0h3m-438 1h3m71 0h1m96 0h1m91 0h1m92 0h1m75 0h3m-442 1h2m8 0h2m71 0h1m277 0h1m75 0h2m-437 1h3m7 0h2m71 0h1m93 0h1m89 0h1m89 0h1m-355 1h3m79 0h1m269 0h1m-350 1h3m78 0h1m91 0h1m86 0h1m86 0h1m-358 1h2m11 0h2m78 0h1m357 0h3m-452 1h3m179 0h1m83 0h1m86 0h1m91 0h4m-446 1h3m87 0h1m257 0h1m89 0h4m-439 1h3m86 0h1m169 0h1m83 0h1m89 0h2m-432 1h2m86 0h1m249 0h1m103 0h3m-270 1h1m79 0h1m80 0h1m101 0h4m-350 1h1m241 0h1m99 0h4m-344 1h1m82 0h1m76 0h1m77 0h1m99 0h2m-447 1h2m107 0h1m233 0h1m112 0h3m-457 1h3m106 0h1m79 0h1m74 0h1m74 0h1m110 0h4m-451 1h3m105 0h1m225 0h1m108 0h4m-444 1h3m104 0h1m76 0h1m71 0h1m181 0h2m-449 1h2m10 0h2m104 0h1m219 0h1m119 0h3m-459 1h4m114 0h1m73 0h1m69 0h1m71 0h1m117 0h4m-452 1h4m112 0h1m211 0h1m115 0h4m-444 1h3m111 0h1m71 0h1m66 0h1m68 0h1m115 0h2m-451 1h2m125 0h1m203 0h1m-330 1h4m123 0h1m68 0h1m64 0h1m65 0h1m-324 1h4m121 0h1m195 0h1m-318 1h3m120 0h1m65 0h1m62 0h1m62 0h1m-327 1h2m134 0h1m187 0h1m136 0h4m-463 1h4m195 0h1m60 0h1m59 0h1m132 0h6m-455 1h4m128 0h1m313 0h3m-445 1h3m127 0h1m61 0h1m57 0h1m59 0h1m-179 1h1m175 0h1m143 0h4m-322 1h1m59 0h1m54 0h1m56 0h1m139 0h6m-316 1h1m167 0h1m137 0h4m-308 1h1m56 0h1m52 0h1m53 0h1m-315 1h3m149 0h1m159 0h1m151 0h4m-465 1h4m147 0h1m53 0h1m50 0h1m50 0h1m147 0h6m-457 1h4m145 0h1m151 0h1m146 0h3m-447 1h3m144 0h1m50 0h1m48 0h1m47 0h1m-147 1h1m143 0h1m160 0h4m-469 1h3m159 0h1m48 0h1m44 0h1m202 0h6m-462 1h6m155 0h1m137 0h1m153 0h3m-450 1h4m153 0h1m45 0h1m42 0h1m44 0h1m-133 1h1m129 0h1m-300 1h4m167 0h1m42 0h1m40 0h1m41 0h1m-294 1h6m163 0h1m121 0h1m-286 1h3m162 0h1m39 0h1m38 0h1m38 0h1m-117 1h1m113 0h1m175 0h4m-472 1h7m211 0h1m35 0h1m35 0h1m171 0h6m-461 1h7m166 0h1m107 0h1m170 0h3m-280 1h1m36 0h1m33 0h1m32 0h1m-103 1h1m284 0h4m-287 1h1m33 0h1m30 0h1m32 0h1m178 0h6m-281 1h1m93 0h1m177 0h3m-273 1h1m30 0h1m28 0h1m29 0h1m-89 1h1m85 0h1m190 0h4m-473 1h6m188 0h1m27 0h1m26 0h1m26 0h1m186 0h6m-463 1h7m183 0h1m77 0h1m185 0h3m-265 1h1m25 0h1m23 0h1m23 0h1m-73 1h1m69 0h1m196 0h7m-475 1h7m196 0h1m22 0h1m21 0h1m20 0h1m191 0h7m-461 1h7m191 0h1m61 0h1m-61 1h1m19 0h1m18 0h1m-38 1h1m55 0h1m-266 1h7m204 0h1m16 0h1m16 0h1m17 0h1m-257 1h6m200 0h1m47 0h1m-47 1h1m14 0h1m13 0h1m14 0h1m-43 1h1m39 0h1m-258 1h6m225 0h1m11 0h1m11 0h1m206 0h13m-469 1h7m206 0h1m33 0h1m-33 1h1m10 0h1m9 0h1m8 0h1m-29 1h1m25 0h1m-25 1h1m7 0h1m7 0h1m5 0h1m214 0h13m-248 1h1m1 1h1m5 0h1m3 0h1m5 0h1m-15 1h1m11 0h1m-11 1h1m2 0h1m1 0h1m2 0h1m220 0h13m-475 1h13m222 0h1m3 0h1m-3 1h1m-3 1h1m226 0h13m-475 1h13m220 0h1m2 0h1m1 0h1m2 0h1m-11 1h1m11 0h1m-15 1h1m5 0h1m9 0h1m1 1h1m-248 1h13m214 0h1m5 0h1m7 0h1m7 0h1m-25 1h1m25 0h1m-29 1h1m8 0h1m9 0h1m10 0h1m-33 1h1m33 0h1m206 0h6m-468 1h13m206 0h1m11 0h1m11 0h1m224 0h7m-258 1h1m39 0h1m-43 1h1m14 0h1m13 0h1m14 0h1m-47 1h1m47 0h1m200 0h6m-257 1h1m17 0h1m16 0h1m16 0h1m204 0h7m-266 1h1m55 0h1m-38 1h1m18 0h1m19 0h1m-61 1h1m61 0h1m191 0h7m-461 1h7m191 0h1m20 0h1m21 0h1m22 0h1m196 0h7m-475 1h7m196 0h1m69 0h1m-73 1h1m23 0h1m23 0h1m25 0h1m-266 1h4m185 0h1m77 0h1m183 0h6m-463 1h6m187 0h1m26 0h1m26 0h1m27 0h1m187 0h7m-473 1h3m191 0h1m85 0h1m-89 1h1m29 0h1m28 0h1m30 0h1m-273 1h3m177 0h1m93 0h1m-281 1h6m178 0h1m32 0h1m30 0h1m33 0h1m-287 1h4m284 0h1m-103 1h1m32 0h1m33 0h1m36 0h1m-281 1h4m170 0h1m107 0h1m166 0h7m-462 1h6m172 0h1m35 0h1m35 0h1m211 0h7m-472 1h3m176 0h1m113 0h1m-117 1h1m38 0h1m38 0h1m39 0h1m162 0h3m-286 1h1m121 0h1m163 0h6m-294 1h1m41 0h1m40 0h1m42 0h1m167 0h4m-300 1h1m129 0h1m-133 1h1m44 0h1m42 0h1m45 0h1m153 0h3m-450 1h4m153 0h1m137 0h1m154 0h6m-462 1h6m203 0h1m44 0h1m48 0h1m158 0h4m-469 1h3m161 0h1m143 0h1m-147 1h1m47 0h1m48 0h1m50 0h1m144 0h3m-448 1h4m298 0h1m145 0h4m-458 1h6m148 0h1m50 0h1m50 0h1m53 0h1m147 0h4m-465 1h3m152 0h1m159 0h1m149 0h3m-315 1h1m53 0h1m52 0h1m56 0h1m-308 1h4m137 0h1m167 0h1m-316 1h6m139 0h1m56 0h1m54 0h1m59 0h1m-322 1h4m143 0h1m-3 1h1m59 0h1m57 0h1m61 0h1m127 0h2m-444 1h3m313 0h1m127 0h4m-454 1h6m132 0h1m59 0h1m60 0h1m194 0h4m-462 1h4m136 0h1m187 0h1m133 0h3m-327 1h1m62 0h1m62 0h1m186 0h2m-317 1h1m195 0h1m120 0h4m-323 1h1m65 0h1m64 0h1m68 0h1m122 0h4m-329 1h1m203 0h1m124 0h3m-452 1h3m115 0h1m68 0h1m66 0h1m71 0h1m111 0h2m-444 1h4m116 0h1m211 0h1m111 0h4m-452 1h4m118 0h1m71 0h1m69 0h1m73 0h1m113 0h4m-458 1h2m120 0h1m324 0h2m9 0h3m-450 1h3m181 0h1m71 0h1m76 0h1m104 0h3m-445 1h4m109 0h1m225 0h1m105 0h3m-452 1h4m111 0h1m74 0h1m74 0h1m79 0h1m106 0h3m-457 1h2m113 0h1m233 0h1m107 0h2m-448 1h3m99 0h1m77 0h1m76 0h1m82 0h1m-345 1h4m100 0h1m241 0h1m-351 1h4m102 0h1m80 0h1m79 0h1m84 0h1m-355 1h2m104 0h1m249 0h1m86 0h2m-433 1h3m89 0h1m83 0h1m81 0h1m87 0h1m86 0h3m-440 1h4m90 0h1m257 0h1m87 0h3m-447 1h4m92 0h1m86 0h1m83 0h1m179 0h3m-452 1h2m358 0h1m78 0h2m11 0h2m-358 1h1m86 0h1m86 0h1m91 0h1m78 0h3m-350 1h1m269 0h1m79 0h3m-355 1h1m89 0h1m89 0h1m93 0h1m71 0h2m7 0h3m-437 1h2m75 0h1m277 0h1m71 0h2m8 0h2m-442 1h3m75 0h1m92 0h1m91 0h1m96 0h1m71 0h2m-437 1h3m76 0h1m285 0h1m71 0h3m-443 1h3m77 0h1m95 0h1m93 0h1m99 0h1m62 0h2m8 0h2m-447 1h2m11 0h1m66 0h1m293 0h1m62 0h2m8 0h2m-439 1h3m65 0h1m98 0h1m95 0h1m102 0h1m62 0h2m-434 1h3m66 0h1m301 0h1m62 0h3m-440 1h3m7 0h2m160 0h1m98 0h1m104 0h1m63 0h2m-444 1h2m8 0h2m60 0h1m307 0h1m63 0h2m-439 1h3m60 0h1m101 0h1m101 0h1m107 0h1m-378 1h2m61 0h1m315 0h1m45 0h2m-429 1h2m8 0h2m51 0h1m104 0h1m103 0h1m110 0h1m45 0h2m-433 1h2m8 0h2m51 0h1m323 0h1m45 0h2m-427 1h2m51 0h1m107 0h1m219 0h1m45 0h3m-432 1h2m51 0h1m331 0h1m36 0h1m9 0h2m-436 1h2m51 0h1m110 0h1m107 0h1m152 0h2m9 0h2m-440 1h2m51 0h1m375 0h2m-380 1h1m113 0h1m110 0h1m154 0h3m-420 1h1m409 0h2m8 0h2m-424 1h2m150 0h1m112 0h1m148 0h2m8 0h2m-428 1h2m416 0h2m-422 1h2m152 0h1m115 0h1m143 0h1m7 0h2m-426 1h2m7 0h2m406 0h2m7 0h2m-430 1h2m7 0h2m146 0h1m117 0h1m145 0h2m7 0h2m-433 1h1m7 0h2m414 0h2m-420 1h2m7 0h1m141 0h1m120 0h1m147 0h2m-424 1h2m7 0h2m413 0h2m-428 1h2m7 0h2m143 0h1m122 0h1m150 0h1m-422 1h2m405 0h1m-410 1h2m8 0h1m137 0h1m124 0h1m136 0h2m-414 1h2m8 0h2m402 0h2m-417 1h1m8 0h2m138 0h1m127 0h1m139 0h2m-412 1h2m401 0h1m8 0h2m-416 1h2m141 0h1m130 0h1m131 0h2m8 0h2m-420 1h2m408 0h2m8 0h1m-422 1h1m144 0h1m132 0h1m127 0h1m6 0h2m-8 1h2m6 0h2m-404 1h2m129 0h1m134 0h1m129 0h2m6 0h2m-408 1h2m398 0h2m6 0h1m-411 1h2m5 0h1m263 0h1m123 0h1m8 0h2m-408 1h2m5 0h2m389 0h2m8 0h2m-412 1h2m6 0h1m128 0h1m264 0h2m8 0h1m-414 1h1m6 0h2m396 0h2m-401 1h1m8 0h1m120 0h1m142 0h1m127 0h2m-404 1h1m7 0h2m394 0h2m-408 1h2m6 0h2m122 0h1m144 0h1m115 0h1m14 0h1m-410 1h1m6 0h2m386 0h2m-392 1h2m6 0h2m117 0h1m146 0h1m117 0h1m-395 1h2m7 0h1m385 0h1m-397 1h1m7 0h2m119 0h1m148 0h1m111 0h1m6 0h2m-393 1h2m383 0h2m6 0h1m-395 1h1m122 0h1m151 0h1m112 0h1m6 0h2m-399 1h2m389 0h1m7 0h1m-401 1h1m13 0h1m109 0h1m154 0h1m106 0h2m5 0h2m-383 1h2m374 0h1m6 0h1m-385 1h1m111 0h1m156 0h1m102 0h1m5 0h2m5 0h2m-388 1h1m6 0h1m366 0h2m5 0h2m5 0h1m-390 1h1m5 0h2m105 0h1m158 0h1m104 0h1m6 0h1m-387 1h2m5 0h1m372 0h1m6 0h2m-390 1h1m5 0h2m6 0h1m100 0h1m161 0h1m104 0h2m6 0h1m-392 1h1m5 0h1m6 0h2m370 0h1m-381 1h1m6 0h1m102 0h1m163 0h1m94 0h1m11 0h2m-385 1h2m5 0h2m5 0h1m357 0h1m12 0h1m-387 1h1m5 0h2m6 0h1m97 0h1m165 0h1m95 0h2m-371 1h1m6 0h2m362 0h1m-374 1h2m6 0h1m98 0h1m168 0h1m89 0h1m7 0h1m-376 1h1m7 0h1m359 0h2m6 0h1m-370 1h1m99 0h1m170 0h1m91 0h1m6 0h2m-374 1h2m11 0h1m346 0h1m5 0h1m7 0h1m-376 1h1m12 0h1m88 0h1m173 0h1m85 0h1m5 0h2m6 0h1m-378 1h1m11 0h2m350 0h1m6 0h1m-361 1h1m5 0h1m84 0h1m175 0h1m80 0h1m5 0h1m6 0h2m-364 1h1m5 0h1m121 0h1m221 0h1m5 0h2m6 0h1m-366 1h1m5 0h1m85 0h1m36 0h1m140 0h1m81 0h2m5 0h1m-362 1h2m5 0h1m5 0h1m116 0h1m225 0h1m5 0h1m-364 1h1m5 0h2m5 0h1m79 0h1m37 0h1m142 0h1m83 0h1m5 0h1m-366 1h1m5 0h1m5 0h2m118 0h1m227 0h1m5 0h1m-362 1h1m5 0h1m81 0h1m37 0h1m145 0h1m71 0h1m11 0h2m-359 1h1m5 0h1m6 0h1m113 0h1m218 0h1m12 0h1m-361 1h1m5 0h1m6 0h1m75 0h1m38 0h1m146 0h1m72 0h1m12 0h1m-358 1h2m6 0h1m114 0h1m216 0h1m4 0h1m-347 1h1m6 0h2m76 0h1m38 0h1m148 0h1m68 0h1m4 0h2m-350 1h1m6 0h1m117 0h1m218 0h1m5 0h1m-345 1h1m11 0h1m66 0h1m38 0h1m150 0h1m63 0h1m5 0h1m5 0h1m-347 1h1m11 0h1m106 0h1m215 0h1m5 0h1m5 0h1m-349 1h1m11 0h1m67 0h1m192 0h1m58 0h1m4 0h1m5 0h1m5 0h1m-351 1h1m11 0h1m4 0h1m316 0h1m4 0h1m5 0h1m-335 1h1m4 0h1m62 0h1m195 0h1m59 0h1m4 0h1m5 0h1m-337 1h1m4 0h1m320 0h1m4 0h1m5 0h1m-339 1h1m4 0h1m5 0h1m57 0h1m197 0h1m60 0h1m4 0h1m-335 1h1m4 0h1m5 0h1m318 0h1m4 0h1m-337 1h1m4 0h1m5 0h1m4 0h1m53 0h1m250 0h1m10 0h1m4 0h1m-339 1h1m4 0h1m5 0h1m4 0h1m306 0h1m10 0h1m-331 1h1m5 0h1m4 0h1m302 0h1m5 0h1m10 0h1m-333 1h1m5 0h1m4 0h1m304 0h1m5 0h1m10 0h1m-329 1h1m4 0h1m306 0h1m5 0h1m-320 1h1m5 0h1m9 0h1m291 0h1m4 0h1m5 0h1m-321 1h1m5 0h1m9 0h1m293 0h1m4 0h1m5 0h1m-317 1h1m9 0h1m290 0h1m4 0h1m4 0h1m5 0h1m-319 1h1m10 0h1m4 0h1m286 0h1m4 0h1m4 0h1m5 0h1m-321 1h1m10 0h1m4 0h1m288 0h1m4 0h1m4 0h1m5 0h1m-312 1h1m4 0h1m4 0h1m284 0h1m4 0h1m4 0h1m-307 1h1m4 0h1m4 0h1m286 0h1m4 0h1m4 0h1m-309 1h1m4 0h1m5 0h1m277 0h1m9 0h1m4 0h1m4 0h1m-310 1h1m4 0h1m4 0h1m5 0h1m273 0h1m9 0h1m4 0h1m-307 1h1m4 0h1m4 0h1m5 0h1m270 0h1m4 0h1m9 0h1m4 0h1m-309 1h1m4 0h1m4 0h1m5 0h1m272 0h1m3 0h1m9 0h1m-300 1h1m5 0h1m5 0h1m272 0h1m4 0h1m9 0h1m-302 1h1m5 0h1m5 0h1m8 0h1m260 0h1m4 0h1m4 0h1m9 0h1m-298 1h1m5 0h1m8 0h1m262 0h1m4 0h1m4 0h1m-289 1h1m4 0h1m9 0h1m262 0h1m4 0h1m5 0h1m-291 1h1m4 0h1m9 0h1m3 0h1m255 0h1m4 0h1m4 0h1m4 0h1m-286 1h1m8 0h1m4 0h1m256 0h1m4 0h1m3 0h1m5 0h1m-288 1h1m8 0h1m4 0h1m4 0h1m252 0h1m5 0h1m3 0h1m5 0h1m-290 1h1m9 0h1m3 0h1m4 0h1m254 0h1m4 0h1m4 0h1m-276 1h1m4 0h1m4 0h1m4 0h1m241 0h1m8 0h1m4 0h1m3 0h1m-277 1h1m4 0h1m4 0h1m4 0h1m238 0h1m3 0h1m9 0h1m4 0h1m3 0h1m-278 1h1m4 0h1m3 0h1m5 0h1m239 0h1m3 0h1m9 0h1m3 0h1m-275 1h1m4 0h1m3 0h1m5 0h1m240 0h1m4 0h1m8 0h1m4 0h1m-272 1h1m4 0h1m4 0h1m8 0h1m227 0h1m5 0h1m3 0h1m9 0h1m-268 1h1m3 0h1m4 0h1m8 0h1m229 0h1m4 0h1m4 0h1m9 0h1m-270 1h1m3 0h1m5 0h1m8 0h1m4 0h1m221 0h1m2 0h1m5 0h1m3 0h1m-256 1h1m4 0h1m8 0h1m4 0h1m222 0h1m3 0h1m4 0h1m4 0h1m-258 1h1m4 0h1m9 0h1m4 0h1m3 0h1m219 0h1m3 0h1m4 0h1m4 0h1m-254 1h1m8 0h1m4 0h1m3 0h1m211 0h1m8 0h1m4 0h1m3 0h1m4 0h1m-255 1h1m9 0h1m4 0h1m3 0h1m4 0h1m207 0h1m8 0h1m3 0h1m4 0h1m4 0h1m-247 1h1m4 0h1m3 0h1m4 0h1m203 0h1m4 0h1m8 0h1m4 0h1m3 0h1m-242 1h1m4 0h1m3 0h1m4 0h1m204 0h1m4 0h1m8 0h1m4 0h1m3 0h1m-244 1h1m4 0h1m3 0h1m4 0h1m8 0h1m192 0h1m3 0h1m4 0h1m8 0h1m4 0h1m-240 1h1m4 0h1m3 0h1m4 0h1m7 0h1m193 0h1m4 0h1m4 0h1m8 0h1m4 0h1m-242 1h1m4 0h1m3 0h1m4 0h1m8 0h1m3 0h1m186 0h1m3 0h1m3 0h1m4 0h1m8 0h1m-232 1h1m3 0h1m4 0h1m7 0h1m4 0h1m186 0h1m3 0h1m4 0h1m4 0h1m8 0h1m-234 1h1m3 0h1m4 0h1m8 0h1m3 0h1m4 0h1m183 0h1m3 0h1m3 0h1m4 0h1m-221 1h1m4 0h1m7 0h1m4 0h1m3 0h1m4 0h1m170 0h1m8 0h1m3 0h1m4 0h1m4 0h1m-223 1h1m4 0h1m8 0h1m3 0h1m4 0h1m4 0h1m166 0h1m3 0h1m9 0h1m3 0h1m3 0h1m4 0h1m-218 1h1m7 0h1m4 0h1m3 0h1m4 0h1m167 0h1m4 0h1m8 0h1m3 0h1m4 0h1m4 0h1m-220 1h1m8 0h1m3 0h1m4 0h1m4 0h1m7 0h1m156 0h1m3 0h1m3 0h1m9 0h1m3 0h1m3 0h1m-207 1h1m4 0h1m3 0h1m4 0h1m8 0h1m3 0h1m148 0h1m4 0h1m2 0h1m4 0h1m8 0h1m3 0h1m4 0h1m-208 1h1m3 0h1m4 0h1m4 0h1m7 0h1m4 0h1m2 0h1m145 0h1m4 0h1m3 0h1m3 0h1m9 0h1m3 0h1m-205 1h1m4 0h1m4 0h1m3 0h1m8 0h1m3 0h1m3 0h1m138 0h1m7 0h1m3 0h1m3 0h1m4 0h1m8 0h1m3 0h1m-201 1h1m4 0h1m4 0h1m7 0h1m4 0h1m2 0h1m4 0h1m134 0h1m7 0h1m4 0h1m3 0h1m3 0h1m9 0h1m-198 1h1m4 0h1m4 0h1m7 0h1m3 0h1m3 0h1m4 0h1m130 0h1m4 0h1m6 0h1m4 0h1m3 0h1m4 0h1m8 0h1m-194 1h1m4 0h1m7 0h1m4 0h1m3 0h1m3 0h1m8 0h1m118 0h1m3 0h1m4 0h1m7 0h1m3 0h1m3 0h1m4 0h1m-185 1h1m4 0h1m7 0h1m3 0h1m3 0h1m4 0h1m8 0h1m2 0h1m111 0h1m3 0h1m4 0h1m3 0h1m7 0h1m4 0h1m3 0h1m4 0h1m-182 1h1m8 0h1m3 0h1m3 0h1m4 0h1m7 0h1m3 0h1m3 0h1m107 0h1m4 0h1m3 0h1m3 0h1m7 0h1m4 0h1m3 0h1m4 0h1m-182 1h1m7 0h1m4 0h1m3 0h1m3 0h1m8 0h1m2 0h1m4 0h1m3 0h1m92 0h1m3 0h1m7 0h1m3 0h1m3 0h1m4 0h1m7 0h1m3 0h1m4 0h1m-170 1h1m3 0h1m3 0h1m4 0h1m8 0h1m2 0h1m3 0h1m4 0h1m7 0h1m80 0h1m3 0h1m3 0h1m7 0h1m3 0h1m3 0h1m4 0h1m7 0h1m4 0h1m3 0h1m-171 1h1m4 0h1m3 0h1m4 0h1m7 0h1m3 0h1m3 0h1m3 0h1m8 0h1m3 0h1m72 0h1m3 0h1m3 0h1m3 0h1m7 0h1m3 0h1m4 0h1m3 0h1m7 0h1m4 0h1m-167 1h1m3 0h1m4 0h1m3 0h1m8 0h1m3 0h1m3 0h1m3 0h1m8 0h1m3 0h1m3 0h1m2 0h1m57 0h1m7 0h1m3 0h1m3 0h1m4 0h1m6 0h1m4 0h1m3 0h1m3 0h1m8 0h1m-159 1h1m3 0h1m4 0h1m8 0h1m2 0h1m4 0h1m3 0h1m7 0h1m4 0h1m3 0h1m2 0h1m7 0h1m3 0h1m34 0h1m2 0h1m3 0h1m3 0h1m7 0h1m4 0h1m3 0h1m3 0h1m7 0h1m3 0h1m3 0h1m4 0h1m7 0h1m-155 1h1m4 0h1m7 0h1m3 0h1m3 0h1m4 0h1m7 0h1m3 0h1m4 0h1m2 0h1m7 0h1m3 0h1m3 0h1m3 0h1m7 0h1m2 0h1m3 0h1m3 0h1m7 0h1m2 0h1m3 0h1m3 0h1m8 0h1m3 0h1m3 0h1m3 0h1m7 0h1m3 0h1m3 0h1m4 0h1m-143 1h1m8 0h1m3 0h1m3 0h1m3 0h1m8 0h1m3 0h1m3 0h1m3 0h1m7 0h1m3 0h1m3 0h1m3 0h1m7 0h1m2 0h1m3 0h1m3 0h1m7 0h1m2 0h1m3 0h1m4 0h1m7 0h1m3 0h1m3 0h1m3 0h1m7 0h1m3 0h1m4 0h1m3 0h1m-143 1h1m8 0h1m3 0h1m3 0h1m3 0h1m8 0h1m3 0h1m3 0h1m3 0h1m7 0h1m3 0h1m3 0h1m3 0h1m7 0h1m2 0h1m3 0h1m3 0h1m7 0h1m3 0h1m3 0h1m3 0h1m7 0h1m3 0h1m3 0h1m3 0h1m7 0h1m4 0h1m3 0h1m-131 1h1m3 0h1m4 0h1m3 0h1m7 0h1m4 0h1m3 0h1m3 0h1m7 0h1m3 0h1m3 0h1m3 0h1m7 0h1m2 0h1m3 0h1m3 0h1m7 0h1m3 0h1m3 0h1m3 0h1m7 0h1m3 0h1m3 0h1m3 0h1m8 0h1m3 0h1m3 0h1m-131 1h1m3 0h1m3 0h1m4 0h1m7 0h1m4 0h1m3 0h1m3 0h1m7 0h1m3 0h1m3 0h1m3 0h1m7 0h1m2 0h1m3 0h1m3 0h1m7 0h1m3 0h1m3 0h1m3 0h1m7 0h1m3 0h1m3 0h1m4 0h1m7 0h1m3 0h1m-123 1h1m3 0h1m3 0h1m8 0h1m4 0h1m3 0h1m2 0h1m7 0h1m4 0h1m3 0h1m3 0h1m7 0h1m2 0h1m3 0h1m3 0h1m7 0h1m3 0h1m3 0h1m3 0h1m7 0h1m4 0h1m3 0h1m3 0h1m7 0h1m-115 1h1m3 0h1m8 0h1m3 0h1m4 0h1m2 0h1m7 0h1m3 0h1m3 0h1m3 0h1m8 0h1m2 0h1m3 0h1m3 0h1m8 0h1m2 0h1m3 0h1m3 0h1m8 0h1m3 0h1m3 0h1m3 0h1m-103 1h1m7 0h1m4 0h1m3 0h1m3 0h1m7 0h1m3 0h1m3 0h1m3 0h1m8 0h1m2 0h1m3 0h1m3 0h1m8 0h1m2 0h1m3 0h1m4 0h1m7 0h1m3 0h1m3 0h1m3 0h1m-95 1h1m4 0h1m3 0h1m3 0h1m7 0h1m3 0h1m3 0h1m3 0h1m8 0h1m2 0h1m3 0h1m3 0h1m8 0h1m3 0h1m3 0h1m3 0h1m7 0h1m3 0h1m3 0h1m-91 1h1m4 0h1m3 0h1m3 0h1m7 0h1m3 0h1m3 0h1m3 0h1m8 0h1m2 0h1m3 0h1m3 0h1m8 0h1m3 0h1m3 0h1m3 0h1m7 0h1m-74 1h1m3 0h1m7 0h1m3 0h1m3 0h1m3 0h1m8 0h1m2 0h1m3 0h1m3 0h1m8 0h1m3 0h1m3 0h1m3 0h1m-62 1h1m7 0h1m3 0h1m3 0h1m3 0h1m8 0h1m2 0h1m3 0h1m3 0h1m8 0h1m3 0h1m3 0h1m-46 1h1m3 0h1m3 0h1m8 0h1m2 0h1m3 0h1m3 0h1m8 0h1"/>
<path stroke="#ff0000" d="M172 61.5h5m-6 1h1m5 0h1m-8 1h1m7 0h1m-10 1h1m9 0h1m-12 1h1m11 0h1m-13 1h1m11 0h1m-13 1h1m11 0h1m-13 1h1m11 0h1m-13 1h1m11 0h1m-12 1h1m9 0h1m-10 1h1m7 0h1m-9 1h1m7 0h1m-13 1h1m3 0h1m7 0h1m-12 1h1m1 0h1m9 0h1m-12 1h1m11 0h1m0 1h1m0 1h1m564 31h3m-4 1h1m3 0h1m-5 1h1m3 0h1m-7 1h4m1 0h4m-9 2h9m-7 33h1m2 0h1m2 0h1m-8 1h2m1 0h2m1 0h1m-7 1h1m1 0h2m1 0h2m-8 1h1m2 0h1m2 0h1m-5 2h1m2 0h1m2 0h1m-8 1h2m1 0h2m1 0h1m-7 1h1m1 0h2m1 0h2m-8 1h1m2 0h1m2 0h1m-452 1h1m-2 1h1m-2 1h1m19 0h1m-22 1h1m5 0h1m15 0h1m-24 1h1m22 0h1m-25 1h1m17 0h1m6 0h1m-27 1h1m26 0h1m-29 1h1m12 0h1m15 0h1m-31 1h1m16 0h1m13 0h1m-33 1h1m31 0h1m-34 1h1m33 0h1m-36 1h1m20 0h1m14 0h1m-38 1h1m16 0h1m20 0h1m-40 1h1m39 0h1m-42 1h1m40 0h1m-43 1h1m15 0h1m11 0h1m14 0h1m-45 1h1m44 0h1m-47 1h1m46 0h1m-49 1h1m48 0h1m-51 1h1m15 0h1m19 0h1m13 0h1m-52 1h1m51 0h1m-54 1h1m53 0h1m-56 1h1m14 0h1m40 0h1m-58 1h1m43 0h1m13 0h1m-60 1h1m58 0h1m-61 1h1m60 0h1m-63 1h1m14 0h1m47 0h1m-65 1h1m50 0h1m13 0h1m-67 1h1m66 0h1m-69 1h1m13 0h1m53 0h1m-70 1h1m69 0h1m-72 1h1m58 0h1m12 0h1m404 0h1m6 0h1m-486 1h1m73 0h1m404 0h6m-486 1h1m13 0h1m61 0h1m404 0h1m2 0h1m-486 1h1m76 0h1m404 0h1m2 0h1m-487 1h1m65 0h1m12 0h1m403 0h1m2 0h1m-488 1h1m80 0h1m402 0h1m2 0h1m-489 1h1m13 0h1m68 0h1m401 0h1m2 0h1m-490 1h1m84 0h1m399 0h6m-492 1h1m73 0h1m11 0h1m398 0h1m6 0h1m-494 1h1m12 0h1m74 0h1m-90 1h1m89 0h1m-92 1h1m91 0h1m-94 1h1m81 0h1m10 0h1m-95 1h1m12 0h1m81 0h1m-97 1h1m96 0h1m-99 1h1m98 0h1m-101 1h1m11 0h1m76 0h1m11 0h1m-103 1h1m101 0h1m-104 1h1m103 0h1m-106 1h1m105 0h1m-108 1h1m11 0h1m84 0h1m10 0h1m-110 1h1m109 0h1m-212 1h1m99 0h1m110 0h1m-213 1h1m99 0h1m10 0h1m101 0h1m-224 1h2m7 0h1m99 0h1m103 0h1m10 0h1m-223 1h1m6 0h1m98 0h1m116 0h1m-223 1h1m5 0h1m97 0h1m118 0h1m-224 1h1m5 0h1m96 0h1m10 0h1m108 0h1m-225 1h1m6 0h1m95 0h1m111 0h1m9 0h1m-226 1h1m6 0h1m94 0h1m123 0h1m-227 1h1m6 0h1m93 0h1m9 0h1m115 0h1m-229 1h1m7 0h1m92 0h1m127 0h1m-230 1h1m7 0h1m91 0h1m119 0h1m8 0h1m-231 1h1m8 0h1m90 0h1m130 0h1m-232 1h1m8 0h1m89 0h1m9 0h1m122 0h1m-234 1h1m9 0h1m88 0h1m134 0h1m-235 1h15m83 0h1m126 0h1m9 0h1m-226 1h1m86 0h1m137 0h1m-226 1h1m85 0h1m9 0h1m129 0h1m-142 1h1m141 0h1m-144 1h1m134 0h1m8 0h1m-146 1h1m8 0h1m-11 1h1m146 0h1m47 0h1m-197 1h1m148 0h1m46 0h1m-256 1h1m57 0h1m141 0h1m8 0h1m45 0h1m-46 1h1m0 1h1m42 0h1m-200 1h1m155 0h1m-206 1h1m47 0h1m7 0h1m141 0h1m7 0h1m41 0h1m-248 1h1m45 0h1m159 0h1m39 0h1m-247 1h1m44 0h1m161 0h1m38 0h1m327 0h3m-577 1h1m43 0h1m163 0h1m363 0h2m3 0h2m-578 1h1m41 0h1m7 0h1m149 0h1m6 0h1m36 0h2m325 0h1m5 0h1m-578 1h1m40 0h1m166 0h1m361 0h1m7 0h1m-579 1h1m39 0h1m168 0h1m34 0h1m325 0h1m3 0h1m3 0h1m-578 1h1m37 0h1m6 0h1m163 0h1m32 0h1m326 0h1m7 0h1m-578 1h1m36 0h1m164 0h1m7 0h1m32 0h1m326 0h1m5 0h1m-577 1h1m35 0h1m173 0h1m359 0h2m3 0h2m-576 1h1m33 0h1m175 0h1m30 0h1m329 0h3m-574 1h1m32 0h1m6 0h1m170 0h1m-212 1h1m31 0h1m172 0h1m6 0h1m28 0h1m-241 1h1m29 0h1m181 0h1m26 0h1m-240 1h1m28 0h1m5 0h1m176 0h1m26 0h1m-240 1h1m27 0h1m184 0h1m-213 1h1m25 0h1m179 0h1m6 0h1m23 0h1m-238 1h1m24 0h1m188 0h1m-215 1h1m23 0h1m5 0h1m184 0h1m21 0h1m-237 1h1m21 0h1m191 0h1m20 0h1m-236 1h1m20 0h1m187 0h1m5 0h1m19 0h1m-236 1h1m19 0h1m4 0h1m190 0h1m-216 1h1m17 0h1m197 0h1m16 0h2m-235 1h1m16 0h1m199 0h1m-218 1h1m15 0h1m195 0h1m4 0h1m15 0h1m-233 1h1m13 0h1m4 0h1m197 0h1m13 0h1m-232 1h1m12 0h1m204 0h1m13 0h1m-233 1h1m11 0h1m206 0h1m-219 1h1m9 0h1m202 0h1m5 0h1m9 0h2m-231 1h1m8 0h1m4 0h1m204 0h1m-220 1h1m7 0h1m211 0h1m9 0h1m-230 1h1m5 0h1m213 0h1m6 0h1m-228 1h1m4 0h1m3 0h1m206 0h1m4 0h1m6 0h1m-229 1h1m3 0h1m217 0h1m-222 1h1m1 0h1m218 0h1m3 0h1m1 0h1m-228 1h2m220 0h1m-223 1h1m3 0h1m213 0h1m4 0h1m2 0h1m-228 1h1m1 0h1m222 0h1m-227 1h1m2 0h1m223 0h2m-230 1h1m2 0h2m223 0h1m-230 1h1m5 0h1m219 0h2m1 0h2m-232 1h1m6 0h1m224 0h1m-234 1h1m7 0h1m221 0h1m3 0h1m337 0h3m-576 1h1m2 0h1m6 0h1m218 0h1m5 0h1m338 0h2m-577 1h1m10 0h1m220 0h1m1 0h1m2 0h1m336 0h1m1 0h1m-578 1h1m11 0h1m226 0h1m331 0h2m1 0h1m-576 1h1m1 0h1m11 0h1m217 0h2m7 0h1m329 0h1m2 0h1m-576 1h1m14 0h1m227 0h1m327 0h1m4 0h1m-578 1h1m15 0h1m218 0h1m5 0h1m2 0h1m327 0h1m4 0h1m-579 1h1m17 0h1m215 0h1m11 0h1m327 0h1m2 0h1m-579 1h1m1 0h1m16 0h1m216 0h1m11 0h1m327 0h2m-579 1h1m19 0h1m229 0h1m-252 1h1m21 0h1m213 0h1m1 0h1m10 0h1m2 0h1m330 0h1m-585 1h2m21 0h1m229 0h1m324 0h2m3 0h1m-585 1h1m23 0h1m214 0h1m15 0h1m325 0h1m2 0h1m-586 1h1m25 0h1m211 0h1m18 0h1m324 0h1m2 0h1m-587 1h1m26 0h1m213 0h1m14 0h1m2 0h1m322 0h1m3 0h1m-588 1h2m26 0h1m232 0h1m321 0h1m3 0h1m-589 1h1m29 0h1m209 0h1m1 0h1m19 0h1m320 0h1m4 0h1m-590 1h1m30 0h1m232 0h1m319 0h8m-593 1h1m31 0h1m211 0h1m19 0h1m1 0h1m323 0h1m-592 1h2m32 0h1m207 0h1m25 0h1m-270 1h1m34 0h1m209 0h1m24 0h1m-272 1h1m35 0h1m234 0h1m126 0h3m7 0h3m-412 1h1m37 0h1m205 0h1m1 0h1m25 0h2m124 0h1m3 0h1m5 0h1m3 0h1m-420 1h1m44 0h1m235 0h1m122 0h1m5 0h1m3 0h1m5 0h1m-376 1h1m207 0h1m28 0h1m121 0h1m5 0h1m3 0h1m5 0h1m-413 1h1m37 0h1m203 0h1m32 0h1m120 0h1m5 0h1m3 0h1m5 0h1m-375 1h1m205 0h1m29 0h2m121 0h1m5 0h1m1 0h1m5 0h1m-374 1h1m237 0h1m121 0h1m4 0h1m1 0h1m4 0h1m-408 1h1m35 0h1m201 0h1m2 0h1m32 0h1m125 0h1m1 0h1m-367 1h1m238 0h1m124 0h1m1 0h1m-367 1h1m203 0h1m34 0h2m124 0h1m-400 1h1m34 0h1m199 0h1m38 0h1m124 0h1m-365 1h1m202 0h1m36 0h1m123 0h1m-365 1h1m240 0h1m122 0h1m-397 1h1m32 0h1m197 0h1m2 0h1m38 0h2m42 0h5m74 0h1m-364 1h1m241 0h1m44 0h2m74 0h1m-364 1h1m200 0h1m40 0h1m43 0h1m1 0h1m74 0h1m-394 1h1m30 0h1m195 0h1m45 0h1m41 0h1m2 0h1m74 0h1m-363 1h1m198 0h1m43 0h1m39 0h1m3 0h1m-288 1h1m241 0h1m6 0h1m32 0h1m-311 1h1m28 0h1m194 0h1m2 0h1m40 0h2m33 0h3m3 0h1m-281 1h1m237 0h1m34 0h1m3 0h1m1 0h1m-280 1h1m196 0h1m39 0h1m34 0h1m5 0h1m-306 1h1m27 0h1m192 0h1m41 0h1m34 0h1m7 0h1m-279 1h1m194 0h1m38 0h1m34 0h1m9 0h1m-280 1h1m231 0h2m35 0h1m9 0h1m-305 1h1m25 0h1m190 0h1m2 0h1m35 0h1m37 0h1m9 0h1m-279 1h1m228 0h1m39 0h1m7 0h1m-278 1h1m192 0h1m34 0h1m41 0h1m5 0h1m-300 1h1m23 0h1m188 0h1m36 0h1m43 0h1m3 0h1m-275 1h1m191 0h1m31 0h2m45 0h3m-274 1h1m222 0h1m-245 1h1m21 0h1m186 0h1m2 0h1m30 0h1m-222 1h1m219 0h1m-221 1h1m189 0h1m28 0h1m-239 1h1m19 0h1m184 0h1m30 0h2m-218 1h1m187 0h1m26 0h1m-216 1h1m213 0h1m-233 1h1m18 0h1m182 0h1m3 0h1m24 0h1m-213 1h1m209 0h2m-212 1h1m185 0h1m22 0h1m-226 1h1m16 0h1m180 0h1m25 0h1m-208 1h1m184 0h1m20 0h1m-207 1h1m204 0h1m-220 1h1m14 0h1m178 0h1m3 0h1m18 0h2m-204 1h1m200 0h1m-202 1h1m182 0h1m16 0h1m-213 1h1m12 0h1m176 0h1m20 0h1m-199 1h1m180 0h1m15 0h1m-198 1h1m194 0h2m-208 1h1m11 0h1m174 0h1m3 0h1m13 0h1m-194 1h1m191 0h1m-193 1h1m178 0h1m11 0h1m-201 1h1m9 0h1m172 0h1m15 0h1m-190 1h1m176 0h1m9 0h2m-189 1h1m185 0h1m-194 1h1m7 0h1m171 0h1m3 0h1m7 0h1m-185 1h1m182 0h1m-184 1h1m174 0h1m5 0h2m-188 1h1m5 0h1m169 0h1m8 0h1m-180 1h1m173 0h1m3 0h1m-179 1h1m176 0h1m-182 1h1m4 0h1m167 0h1m3 0h1m2 0h1m-176 1h1m172 0h2m-175 1h1m171 0h1m-175 1h1m2 0h1m165 0h1m3 0h1m-171 1h1m168 0h2m-171 1h1m167 0h1m-169 1h2m163 0h3m2 0h1m-170 1h1m163 0h1m-165 1h1m162 0h1m4 0h1m-168 1h2m159 0h2m-163 1h1m159 0h1m5 0h1m-167 1h1m157 0h2m-159 1h1m2 0h1m152 0h1m3 0h1m4 0h1m-166 1h1m154 0h1m-156 1h1m153 0h1m9 0h1m-164 1h1m3 0h1m146 0h2m5 0h1m-159 1h1m149 0h1m12 0h1m-164 1h1m148 0h1m-149 1h1m5 0h1m140 0h1m8 0h1m4 0h1m-162 1h1m145 0h1m-147 1h1m143 0h2m15 0h1m-161 1h1m7 0h1m133 0h1m11 0h1m-155 1h1m140 0h1m17 0h1m-160 1h1m139 0h1m-140 1h1m9 0h1m127 0h1m13 0h1m5 0h1m-159 1h1m135 0h2m-138 1h1m134 0h1m21 0h1m-157 1h1m10 0h1m121 0h1m16 0h1m-151 1h1m131 0h1m23 0h1m-157 1h1m129 0h2m-131 1h1m12 0h1m114 0h1m20 0h1m4 0h1m-155 1h1m126 0h1m-128 1h1m125 0h1m26 0h1m-153 1h1m14 0h1m108 0h1m22 0h1m-148 1h1m121 0h2m28 0h1m-153 1h1m120 0h1m-121 1h1m16 0h1m101 0h1m25 0h1m4 0h1m-151 1h1m117 0h1m-119 1h1m116 0h1m32 0h1m-150 1h1m17 0h1m95 0h2m27 0h1m-144 1h1m112 0h1m34 0h1m-149 1h1m111 0h1m-112 1h1m19 0h1m89 0h1m30 0h1m5 0h1m-148 1h1m108 0h1m-110 1h1m106 0h2m37 0h1m-146 1h1m21 0h1m82 0h1m33 0h1m-140 1h1m103 0h1m40 0h1m-146 1h1m102 0h1m-103 1h1m23 0h1m75 0h2m35 0h1m5 0h1m-144 1h1m98 0h1m-100 1h1m97 0h1m44 0h1m-143 1h1m25 0h1m69 0h1m38 0h1m-136 1h1m94 0h1m45 0h1m-142 1h1m92 0h2m-94 1h1m26 0h1m63 0h1m41 0h1m6 0h1m-141 1h1m89 0h1m-91 1h1m88 0h1m49 0h1m-139 1h1m28 0h1m57 0h1m43 0h1m-132 1h1m84 0h2m50 0h1m-138 1h1m83 0h1m-84 1h1m30 0h1m50 0h1m46 0h1m6 0h1m-137 1h1m80 0h1m-82 1h1m79 0h1m54 0h1m-135 1h1m32 0h1m43 0h2m48 0h1m-128 1h1m75 0h1m57 0h1m-135 1h1m74 0h1m-75 1h1m33 0h1m38 0h1m52 0h1m5 0h1m-133 1h1m70 0h2m-73 1h1m69 0h1m-70 1h1m35 0h1m31 0h1m55 0h1m-58 1h1m-2 1h1m-28 1h1m24 0h2m-3 1h1m-2 1h1m-21 1h1m18 0h1m-2 1h1m-3 1h2m-16 1h1m12 0h1m-2 1h1m-2 1h1m-9 1h1m6 0h1m-3 1h2m-3 1h1m-2 7h1m-6 22h5m-7 1h2m5 0h2m-10 1h1m9 0h1m-12 1h1m11 0h1m-14 1h1m13 0h1m-15 1h1m13 0h1m-16 1h1m15 0h1m-17 1h1m15 0h1m-17 1h1m7 0h1m7 0h1m-17 1h1m15 0h1m-17 1h1m15 0h1m-16 1h1m13 0h1m-15 1h1m13 0h1m-14 1h1m11 0h1m-12 1h1m9 0h1m-10 1h2m5 0h2m-7 1h5m-121 29h5m-2 1h2m-3 1h1m1 0h1m-4 1h1m2 0h1m-5 1h1m3 0h1m-6 1h1m-10 1h1m7 0h1m-8 1h1m5 0h1m-6 1h1m3 0h1m-4 1h1m1 0h1m-2 1h1m-2 1h1m1 0h1m-4 1h1m3 0h1m-6 1h1m5 0h1m-8 1h1m7 0h1m-10 1h1m-2 1h1"/>
<path stroke="#00ff00" d="M430 67.5h1m13 0h1m-14 1h1m11 0h1m-12 1h11m-9 1h1m5 0h1m-7 1h1m5 0h1m-7 1h1m5 0h1m-7 1h1m5 0h1m-7 1h1m5 0h1m-7 1h1m5 0h1m-7 1h1m5 0h1m-7 1h1m5 0h1m-7 1h1m5 0h1m-7 1h1m5 0h1m-7 1h1m5 0h1m-9 1h11m-12 1h1m11 0h1m-14 1h1m13 0h1m305 43h3m-2 1h2m-3 1h1m1 0h1m-8 1h1m3 0h1m-4 1h1m1 0h1m-2 1h1m-2 1h1m1 0h1m-4 1h1m3 0h1m-6 1h1m0 32h2m3 0h2m-8 1h1m2 0h1m1 0h1m2 0h1m-9 1h1m2 0h1m1 0h1m2 0h1m-8 1h1m1 0h1m1 0h1m1 0h1m-4 1h1m-1 1h1m-1 1h1m-1 1h1m-1 1h1m-2 32h3m-4 1h1m3 0h1m-6 1h1m5 0h1m-7 1h1m5 0h1m-7 1h1m5 0h1m-6 1h1m3 0h1m-7 1h1m1 0h1m3 0h1m-6 1h1m5 0h1m0 1h1m-346 11h15m-46 1h47m-79 1h61m-92 1h56m-87 1h51m87 0h1m-170 1h46m-78 1h43m-74 1h38m192 0h1m-247 1h18m-17 1h1m242 1h1m-242 3h1m238 0h1m-2 3h1m-237 1h1m233 2h1m-233 2h1m229 1h1m-229 3h1m225 0h1m-3 3h1m-222 1h1m218 2h1m342 0h1m3 0h1m-4 1h3m-564 1h1m559 0h1m3 0h1m-350 1h1m344 0h1m3 0h1m-5 1h1m3 0h1m-4 1h3m-562 1h1m210 0h1m348 0h1m-3 1h5m-3 1h1m-351 1h1m-209 1h1m556 0h3m-4 1h1m3 0h1m-355 1h1m349 0h1m3 0h1m-5 1h1m3 0h1m-559 1h1m554 0h3m-356 1h1m353 0h1m-3 1h5m-3 1h1m-554 1h1m196 0h1m355 0h1m-359 3h1m-194 1h1m190 2h1m-190 2h1m186 1h1m-186 3h1m182 0h1m-350 3h5m343 0h1m-350 1h1m5 0h1m162 0h1m-171 1h1m7 0h1m-9 1h1m7 0h1m339 0h1m-349 1h1m7 0h1m-8 1h1m5 0h1m165 0h1m-178 1h7m3 0h7m333 0h1m-172 3h1m168 0h1m-349 1h17m109 0h1m0 1h2m0 1h2m215 0h1m-217 1h2m49 0h1m-50 1h2m0 1h2m208 0h1m-209 1h1m0 1h2m44 0h1m532 0h1m5 0h1m-584 1h2m201 0h1m374 0h1m3 0h1m-581 1h2m574 0h1m1 0h1m1 0h1m-580 1h2m573 0h5m-578 1h2m39 0h1m154 0h1m376 0h1m1 0h1m1 0h1m-577 1h3m568 0h1m2 0h1m2 0h1m-575 1h1m569 0h3m-573 1h3m188 0h1m378 0h1m1 0h1m-570 1h2m35 0h1m530 0h1m-569 1h1m1 0h1m0 1h2m181 0h1m-184 1h1m1 0h2m0 1h1m31 0h1m-34 1h1m1 0h2m174 0h1m-175 1h2m-3 1h1m2 0h2m-2 1h1m1 0h1m26 0h1m140 0h1m-168 1h2m-2 1h1m1 0h2m0 1h1m160 0h1m-163 1h1m1 0h2m21 0h1m-22 1h1m-2 1h1m156 0h1m-154 1h2m0 1h2m16 0h1m-17 1h1m146 0h1m-150 1h1m2 0h2m0 1h2m-4 1h1m3 0h2m12 0h1m125 0h1m-139 1h1m-4 1h1m3 0h2m0 1h2m132 0h1m-138 1h1m4 0h1m8 0h1m-9 1h2m-5 1h1m4 0h2m125 0h1m-130 1h1m3 0h1m0 1h2m3 0h1m-8 1h1m3 0h2m118 0h1m-119 1h1m-4 1h1m3 0h2m0 1h2m111 0h1m-117 1h1m4 0h1m0 1h2m-5 1h1m4 0h2m104 0h1m-110 1h1m4 0h2m-6 1h1m5 0h1m0 1h2m97 0h1m-104 1h1m5 0h2m-9 1h1m8 0h1m-6 1h1m5 0h2m90 0h1m-91 1h2m-7 1h1m6 0h1m-13 1h1m12 0h2m83 0h1m-91 1h1m6 0h2m0 1h1m-7 1h1m6 0h2m77 0h1m-96 1h1m11 0h1m5 0h2m0 1h2m-7 1h1m6 0h1m70 0h1m-71 1h2m-23 1h1m15 0h1m6 0h2m0 1h1m63 0h1m-71 1h1m6 0h2m0 1h2m-28 1h1m19 0h1m7 0h1m56 0h1m-57 1h2m-8 1h1m7 0h2m0 1h1m49 0h1m-81 1h1m22 0h1m7 0h2m0 1h2m-9 1h1m8 0h2m41 0h1m-42 1h1m-36 1h1m26 0h1m8 0h2m0 1h2m34 0h1m-45 1h1m9 0h1m-8 1h1m8 0h1m-41 1h1m40 0h2m27 0h1m-37 1h1m8 0h1m0 1h2m-9 1h1m8 0h2m21 0h1m-68 1h1m45 0h1m-9 1h1m8 0h2m0 1h2m14 0h1m-25 1h1m9 0h1m-50 1h1m49 0h2m-10 1h1m9 0h2m7 0h1m-8 1h2m-11 1h1m10 0h1m-54 1h1m53 0h3m-12 1h1m10 0h2m0 1h1m-11 1h1m5 0h1m4 0h2m-59 1h1m58 0h2m-12 1h1m11 0h1m-12 1h1m1 0h1m9 0h2m0 1h2m-64 1h1m52 0h1m10 0h1m-19 1h1m18 0h2m-11 1h1m10 0h1m1 1h2m-69 1h1m41 0h1m14 0h1m11 0h1m0 1h2m63 0h1m-76 1h1m11 0h2m-33 1h1m32 0h1m-73 1h1m60 0h1m11 0h2m0 1h2m-40 1h1m26 0h1m12 0h1m0 1h2m-77 1h1m63 0h1m13 0h1m-47 1h1m46 0h1m0 1h2m0 1h2m-82 1h1m27 0h1m39 0h1m13 0h2m-13 1h1m12 0h1m0 1h2m-61 1h1m47 0h1m12 0h1m55 0h1m11 0h1m-154 1h1m86 0h1m54 0h1m9 0h1m-78 1h1m13 0h1m53 0h1m7 0h1m-130 1h1m67 0h2m51 0h1m7 0h1m-74 1h1m64 0h1m3 0h1m3 0h1m-150 1h1m140 0h1m3 0h1m3 0h1m-132 1h1m60 0h1m61 0h9m-9 1h1m3 0h1m3 0h1m-9 1h1m3 0h1m3 0h1m-148 1h1m13 0h1m76 0h1m46 0h1m4 0h1m4 0h1m-12 1h1m5 0h1m5 0h1m-7 1h1m-131 1h1m128 0h3m-142 1h1m137 0h1m3 0h1m-5 1h1m3 0h1m-135 1h1m129 0h1m3 0h1m-4 1h3m-140 1h1m3 1h1m-39 2h1m35 1h1m100 4h5m-6 1h1m5 0h1m-8 1h1m7 0h1m-9 1h1m7 0h1m-9 1h1m7 0h1m-9 1h1m7 0h1m-9 1h1m7 0h1m-8 1h1m5 0h1m-6 1h5m-3 1h1m-1 1h1m-1 1h1m-5 1h9m-5 1h1m-1 1h1m-154 1h1m7 0h1m144 0h1m-153 1h1m5 0h1m145 0h1m-152 1h5m-6 1h1m5 0h1m-8 1h1m7 0h1m-9 1h1m7 0h1m-9 1h1m7 0h1m-9 1h1m7 0h1m-9 1h1m7 0h1m-8 1h1m5 0h1m-6 1h5m-3 1h1m-1 1h1m-1 1h1m-5 1h9m-5 1h1m-1 1h1m178 44h1m5 0h1m5 0h1m-14 1h2m4 0h2m4 0h1m-13 1h1m1 0h1m3 0h1m1 0h1m3 0h1m-14 1h1m2 0h1m2 0h1m2 0h1m2 0h1m-14 1h1m3 0h1m1 0h1m3 0h1m1 0h1m-13 1h1m4 0h2m4 0h2m-14 1h1m5 0h1m5 0h1m-9 4h1m5 0h1m5 0h1m-14 1h2m4 0h2m4 0h1m-13 1h1m1 0h1m3 0h1m1 0h1m3 0h1m-14 1h1m2 0h1m2 0h1m2 0h1m2 0h1m-14 1h1m3 0h1m1 0h1m3 0h1m1 0h1m-13 1h1m4 0h2m4 0h2m-14 1h1m5 0h1m5 0h1"/>
<path stroke="#ffff00" d="M318 113.5h1m-1 1h1m-5 1h9m-5 1h1m425 0h1m1 0h1m1 0h1m-431 1h1m426 0h1m1 0h1m1 0h1m-432 1h1m426 0h1m1 0h1m1 0h1m-432 1h1m3 0h3m420 0h1m1 0h1m1 0h1m-432 1h1m2 0h1m3 0h1m419 0h1m1 0h1m1 0h1m-432 1h3m5 0h1m418 0h1m1 0h1m1 0h1m-432 1h1m7 0h1m418 0h1m1 0h1m1 0h1m2 0h1m-435 1h1m7 0h1m418 0h1m1 0h1m1 0h1m2 0h1m-435 1h1m6 0h1m424 0h2m-434 1h1m5 0h1m-7 1h1m5 0h1m-7 1h1m5 0h1m0 1h1m0 1h1m-28 20h1m16 1h1m-250 4h1m3 0h1m3 0h1m-8 1h1m1 0h1m1 0h1m1 0h1m1 0h1m-8 1h1m3 0h1m3 0h1m3 0h1m662 0h1m7 0h1m-684 1h1m3 0h1m3 0h1m2 0h2m663 0h1m5 0h1m-683 1h1m3 0h1m3 0h1m1 0h1m1 0h1m664 0h1m3 0h1m-682 1h1m3 0h1m3 0h2m2 0h1m664 0h1m3 0h1m-682 1h1m3 0h1m3 0h1m3 0h1m662 0h9m-684 1h1m3 0h1m3 0h1m3 0h1m664 0h1m3 0h1m-682 1h1m3 0h1m3 0h1m3 0h1m664 0h1m3 0h1m-682 1h1m3 0h1m3 0h1m3 0h1m663 0h1m5 0h1m-683 1h1m3 0h1m3 0h1m3 0h1m662 0h1m7 0h1m-684 1h1m3 0h1m3 0h1m3 0h1m-13 1h1m3 0h1m3 0h1m3 0h1m441 0h1m11 0h1m-467 1h1m3 0h1m4 0h1m1 0h1m443 0h1m9 0h1m-466 1h1m3 0h1m5 0h1m444 0h1m9 0h1m-457 1h1m1 0h1m444 0h2m5 0h2m-457 1h1m3 0h1m445 0h5m-6 1h1m5 0h1m-8 1h1m7 0h1m-10 1h1m9 0h1m-12 1h1m11 0h1m-13 1h1m11 0h1m-13 1h1m11 0h1m-13 1h1m11 0h1m-13 1h1m11 0h1m-12 1h1m9 0h1m-10 1h1m7 0h1m-8 1h1m5 0h1m-6 1h5m215 15h3m-5 1h2m3 0h2m-8 1h1m4 0h1m2 0h1m-8 1h2m2 0h1m2 0h1m-9 1h1m2 0h1m2 0h2m-8 1h1m2 0h1m4 0h1m-8 1h2m3 0h2m-5 1h3m-328 21h1m324 71h1m-3 1h5m-3 1h1m-1 1h1m1 0h2m-4 1h2m2 0h1m-5 1h1m3 0h1m-5 1h1m2 0h1m-4 1h1m2 0h1m0 1h1m-386 122h1m-3 1h1m-128 1h1m124 0h1m-3 1h1m-120 1h1m3 2h1m3 1h1m37 120h1m5 0h1m2 0h4m-14 1h2m5 0h1m1 0h1m4 0h1m-16 1h1m1 0h1m4 0h3m6 0h1m-15 1h1m4 0h1m2 0h1m5 0h1m-15 1h1m3 0h1m4 0h1m4 0h1m-15 1h1m3 0h1m5 0h1m2 0h1m-14 1h1m3 0h1m6 0h2m-13 1h1m3 0h1m6 0h2m-13 1h1m3 0h1m7 0h1m-12 1h1m1 0h1m9 0h1m-12 1h1m11 0h1m-13 1h1m11 0h1m-13 1h1m11 0h1m-13 1h1m11 0h1m-13 1h1m11 0h1m-2 1h1m-2 1h1"/>
<path stroke="#0000ff" d="M303 30.5h5m-8 1h3m5 0h1m-10 1h1m9 0h3m-14 1h1m9 0h1m3 0h1m-16 1h1m9 0h1m5 0h1m-7 1h1m5 0h1m-15 1h3m5 0h1m5 0h1m-16 1h1m3 0h1m5 0h1m3 0h1m-16 1h1m5 0h1m5 0h3m-15 1h1m5 0h1m-7 1h1m5 0h1m9 0h1m-16 1h1m3 0h1m9 0h1m-14 1h3m9 0h1m-10 1h1m5 0h3m-8 1h5m437 92h1m2 0h1m1 0h2m-8 1h2m2 0h2m2 0h1m-8 1h1m1 0h1m1 0h1m2 0h1m-8 1h1m1 0h1m2 0h2m-7 1h1m1 0h1m3 0h1m-6 1h1m5 0h1m-7 1h1m5 0h1m-7 1h1m5 0h1m-2 1h1m-436 12h1m-1 1h1m-1 1h1m-1 1h1m-1 1h1m-2 1h1m-1 1h1m-1 1h1m-1 1h1m-1 1h1m-1 1h1m-1 1h1m-1 1h1m-1 1h1m-1 1h1m-2 1h1m-1 1h1m-1 1h1m-1 1h1m-1 1h1m-1 1h1m430 0h1m5 0h1m-438 1h1m431 0h1m3 0h1m-437 1h1m432 0h3m-436 1h1m431 0h1m3 0h1m-437 1h1m430 0h1m5 0h1m-439 1h1m431 0h1m5 0h1m-439 1h1m431 0h1m5 0h1m-439 1h1m432 0h1m3 0h1m-438 1h1m433 0h3m-437 1h1m-1 1h1m-1 1h1m-1 1h1m-1 1h1m-1 1h1m-2 1h1m-1 1h1m-1 1h1m-1 1h1m-1 1h1m-1 1h1m-1 1h1m-1 1h1m-1 1h1m-1 1h1m-2 1h1m-1 1h1m-1 1h1m-1 1h1m-1 1h1m-1 1h1m-1 1h1m-1 1h1m-1 1h1m-1 1h1m143 0h5m-150 1h1m143 0h1m5 0h2m-152 1h1m142 0h1m8 0h1m-153 1h1m143 0h1m8 0h1m-154 1h1m144 0h1m8 0h1m-155 1h1m145 0h1m7 0h1m-155 1h1m145 0h1m8 0h1m278 0h1m1 0h1m1 0h1m-439 1h1m146 0h1m7 0h1m279 0h1m1 0h1m1 0h1m1 0h1m-442 1h1m146 0h1m7 0h1m279 0h1m1 0h1m1 0h3m-442 1h1m146 0h1m7 0h1m279 0h1m1 0h1m1 0h1m1 0h1m-442 1h1m145 0h1m8 0h1m279 0h1m1 0h1m1 0h1m1 0h1m-443 1h1m146 0h1m7 0h1m280 0h1m1 0h1m1 0h1m1 0h1m-443 1h1m117 0h1m27 0h1m8 0h1m280 0h1m1 0h1m1 0h1m1 0h1m-443 1h1m144 0h1m8 0h1m281 0h1m1 0h1m2 0h1m-442 1h1m143 0h1m8 0h1m286 0h1m1 0h1m-443 1h1m144 0h1m5 0h2m-153 1h1m145 0h5m-151 1h1m-1 1h1m-2 2h1m-1 1h1m-1 1h1m-1 1h1m-1 1h1m-1 1h1m-1 1h1m-1 1h1m-1 1h1m-1 1h1m-2 1h1m-1 1h1m-1 1h1m-1 1h1m-1 1h1m-1 1h1m-1 1h1m438 0h3m-442 1h1m437 0h1m3 0h2m-444 1h1m438 0h1m3 0h1m-444 1h1m439 0h1m3 0h1m-446 1h1m440 0h1m3 0h1m-446 1h1m440 0h1m3 0h1m-446 1h1m439 0h1m3 0h1m-445 1h1m438 0h1m3 0h2m-445 1h1m439 0h3m-443 1h1m-1 1h1m-1 1h1m-1 1h1m-1 1h1m-2 1h1m-1 1h1m-1 1h1m-1 1h1m-1 1h1m-1 1h1m-1 1h1m-1 1h1m-1 1h1m-1 1h1m-2 1h1m-1 1h1m-1 1h1m-1 1h1m-1 1h1m-1 1h1m-1 1h1m-1 1h1m-1 1h1m-1 1h1m-2 1h1m-1 1h1m-1 1h1m-1 1h1m-1 1h1m-1 1h1m-1 1h1m-1 1h1m-1 1h1m-1 1h1m-2 1h1m-1 1h1m-1 1h1m-1 1h1m-1 1h1m-1 1h1m-1 1h1m-1 1h1m-1 1h1m-2 1h1m-1 1h1m-1 1h1m-1 1h1m-1 1h1m-1 1h1m-1 1h1m-1 1h1m-1 1h1m-1 1h1m-2 1h1m-1 1h1m-1 1h1m-1 1h1m-1 1h1m-1 1h1m-1 1h1m-1 1h1m444 0h1m2 0h1m2 0h1m-452 1h1m443 0h2m1 0h3m1 0h2m-453 1h1m444 0h1m2 0h1m2 0h1m-453 1h1m446 0h1m1 0h1m1 0h1m-452 1h1m447 0h3m-451 1h1m448 0h1m-450 1h1m446 0h5m-452 1h1m448 0h1m-450 1h1m448 0h1m-450 1h1m-1 1h1m445 0h1m2 0h1m2 0h1m-453 1h1m445 0h1m1 0h1m1 0h1m1 0h1m-453 1h1m445 0h1m2 0h1m2 0h1m-454 1h1m447 0h1m3 0h1m-453 1h1m448 0h3m-452 1h1m449 0h1m-451 1h1m447 0h5m-453 1h1m449 0h1m-451 1h1m449 0h1m-451 1h1m-1 1h1m-1 1h1m-1 1h1m-2 1h1m-1 1h1m-1 1h1m-1 1h1m-1 1h1m-1 1h1m-1 1h1m-1 1h1m-1 1h1m-1 1h1m-2 1h1m-1 1h1m-1 1h1m-1 1h1m-1 1h1m-1 1h1m-1 1h1m-1 1h1m-1 1h1m-1 1h1m-2 1h1m-1 1h1m-1 1h1m-1 1h1m-1 1h1m-1 1h1m-1 1h1m-1 1h1m-1 1h1m-1 1h1m-2 1h1m-1 1h1m-1 1h1m-1 1h1m-1 1h1m-1 1h1m-1 1h1m-1 1h1m-1 1h1m-2 1h1m-1 1h1m-1 1h1m-1 1h1m-1 1h1m-1 1h1m-1 1h1m-1 1h1m-1 1h1m-1 1h1m-2 1h1m-1 1h1m-1 1h1m-1 1h1m-1 1h1m-1 1h1m-1 1h1m-1 1h1m-1 1h1m-1 1h1m-2 1h1m-1 1h1m-1 1h1m-1 1h1m-1 1h1m-1 1h1m-1 1h1m-1 1h1m-1 1h1m-1 1h1m-2 1h1m-1 1h1m-1 1h1m-1 1h1m-1 1h1m-1 1h1m-1 1h1m-1 1h1m-230 1h1m3 0h1m3 0h1m220 0h1m-229 1h1m1 0h1m1 0h1m1 0h1m1 0h1m219 0h1m-228 1h1m3 0h1m3 0h1m217 0h1m-227 1h1m3 0h1m3 0h1m217 0h1m-227 1h1m3 0h1m3 0h1m217 0h1m-227 1h1m3 0h1m3 0h1m217 0h1m-227 1h1m3 0h1m3 0h1m217 0h1m-227 1h1m3 0h1m3 0h1m217 0h1m-227 1h1m3 0h1m3 0h1m217 0h1m-227 1h1m3 0h1m3 0h1m217 0h1m-227 1h1m3 0h1m3 0h1m217 0h1m-227 1h1m3 0h1m3 0h1m4 0h1m212 0h1m-227 1h1m3 0h1m3 0h1m3 0h3m210 0h1m226 0h1m15 0h1m-469 1h1m3 0h1m3 0h1m4 0h1m211 0h1m227 0h1m13 0h1m-468 1h1m3 0h1m3 0h1m4 0h1m211 0h1m228 0h1m11 0h1m-458 1h1m2 0h1m212 0h1m229 0h1m9 0h1m-456 1h2m213 0h1m230 0h1m7 0h1m-240 1h1m230 0h1m7 0h1m-294 1h1m53 0h1m74 0h1m155 0h1m7 0h1m-240 1h1m230 0h1m7 0h1m-240 1h1m226 0h17m-244 1h1m230 0h1m7 0h1m-241 1h1m231 0h1m7 0h1m-241 1h1m231 0h1m7 0h1m-241 1h1m231 0h1m7 0h1m-241 1h1m230 0h1m9 0h1m-12 1h1m11 0h1m-14 1h1m13 0h1m-16 1h1m15 0h1m-317 9h1m4 0h3m4 0h1m-13 1h1m3 0h1m3 0h1m3 0h1m-13 1h1m3 0h1m3 0h1m3 0h1m139 0h1m5 0h1m5 0h1m-165 1h1m3 0h1m3 0h1m3 0h1m139 0h1m5 0h1m5 0h1m-165 1h1m4 0h3m4 0h1m138 0h3m2 0h5m2 0h3m-165 1h1m9 0h1m140 0h1m5 0h1m5 0h1m-164 1h1m9 0h1m140 0h1m5 0h1m5 0h1m-163 1h2m5 0h2m142 0h1m4 0h1m4 0h1m-160 1h5m144 0h1m4 0h1m4 0h1m-158 1h1m147 0h2m2 0h1m2 0h2m-157 1h1m149 0h5m-155 1h1m151 0h1m-157 1h9m147 0h1m-153 1h1m151 0h1m-153 1h1m147 0h9m-157 1h1m151 0h1m-153 1h1m151 0h1m-1 1h1m-1 1h1"/>
<path stroke="#00ffff" d="M441 316.5h1m-2 1h1m-2 1h1m-2 1h1m-1 1h1m-2 1h1m-2 1h1m-1 1h1m-2 1h1m-2 1h1m-2 1h2m-2 1h1m-2 1h1m-2 1h2m-2 1h1m-2 1h1m-2 1h2m-3 1h1m-1 1h1m-2 1h2m-3 1h1m-1 1h1m-2 1h2m-3 1h1m-2 1h1m-1 1h2m-3 1h1m-2 1h1m-1 1h2m-3 1h1m-2 1h1m-2 1h1m1 0h1m-3 1h1m-2 1h1m-2 1h1m1 0h1m-3 1h1m-2 1h1m-2 1h1m1 0h1m-4 1h1m-1 1h1m-2 1h1m1 0h1m-4 1h1m-1 1h1m-2 1h1m1 0h1m-4 1h1m-2 1h1m-1 1h1m1 0h1m-4 1h1m-2 1h1m-1 1h1m1 0h1m-4 1h1m-2 1h1m-2 1h1m2 0h1m-4 1h1m-2 1h1m-2 1h1m2 0h1m-4 1h1m-2 1h1m-2 1h1m2 0h1m-4 1h1m-2 1h1m-2 1h1m2 0h1m-5 1h1m-1 1h1m-2 1h1m2 0h1m-5 1h1m-1 1h1m-2 1h1m2 0h1m-5 1h1m-2 1h1m-1 1h1m2 0h1m-5 1h1m-2 1h1m-1 1h1m2 0h1m-5 1h1m-2 1h1m-2 1h1m3 0h1m-5 1h1m-2 1h1m-2 1h1m3 0h1m-5 1h1m-2 1h1m-2 1h1m3 0h1m-6 1h1m-1 1h1m-2 1h1m3 0h1m-6 1h1m-1 1h1m17 0h1m-20 1h1m3 0h1m10 0h1m1 0h1m-19 1h1m9 0h1m1 0h1m1 0h1m-16 1h1m6 0h1m1 0h1m-10 1h1m2 0h3m-7 1h1m1 0h1m-9 1h1m1 0h1m1 0h2m-10 1h1m1 0h1m6 0h1m3 0h1m-18 1h1m1 0h1m9 0h1m-19 1h1m1 0h1m1 0h1m-9 1h1m1 0h1m17 0h1m4 0h1m-30 1h1m1 0h1m-7 1h1m1 0h1m24 0h1m-34 1h1m1 0h1m1 0h1m27 0h1m4 0h1m-42 1h1m1 0h1m33 0h1m-41 1h1m1 0h1m36 0h1m-44 1h1m1 0h1m39 0h1m4 0h1m-54 1h1m1 0h1m1 0h1m42 0h1m-52 1h1m1 0h1m48 0h1m-54 1h1m51 0h1m4 0h1m-64 1h1m1 0h1m54 0h1m-64 1h1m1 0h1m1 0h1m58 0h1m-68 1h1m1 0h1m47 0h1m2 0h1m2 0h1m2 0h1m2 0h1m2 0h2m1 0h1m2 0h1m-76 1h1m1 0h1m9 0h1m2 0h1m2 0h1m2 0h1m2 0h1m2 0h1m2 0h1m2 0h1m2 0h1m2 0h1m2 0h1m2 0h1m2 0h1m2 0h1m17 0h1m-103 1h1m2 0h1m2 0h1m2 0h1m2 0h1m2 0h1m2 0h1m2 0h1m2 0h1m2 0h1m2 0h2m1 0h1m5 0h1m2 0h1m-64 1h1m2 0h1m2 0h1m2 0h1m2 0h1m2 0h1m2 0h1m25 0h1m1 0h1m75 0h1m-83 1h1m1 0h1m-7 1h1m1 0h1m-9 1h1m1 0h1m1 0h1m-9 1h1m1 0h1m-7 1h1m1 0h1m-7 1h1m1 0h1m-7 1h1m1 0h1"/>
<path stroke="#ffffff" d="M283 15.5h33m-46 1h13m33 0h13m-67 1h8m59 0h8m-82 1h7m75 0h7m-95 1h6m89 0h6m-106 1h5m101 0h5m-116 1h5m111 0h5m-125 1h4m121 0h4m-133 1h4m129 0h4m-141 1h4m137 0h4m-149 1h4m6 0h1m138 0h4m-156 1h3m10 0h1m142 0h3m-163 1h4m13 0h1m145 0h4m-170 1h3m18 0h1m143 0h1m4 0h3m-176 1h3m21 0h1m143 0h1m7 0h3m-182 1h3m24 0h1m142 0h1m11 0h3m-188 1h3m27 0h1m142 0h1m14 0h3m-194 1h3m31 0h1m141 0h1m17 0h3m-199 1h2m34 0h1m141 0h1m20 0h2m-204 1h3m36 0h1m140 0h1m23 0h3m-209 1h2m39 0h1m140 0h1m26 0h2m-214 1h3m42 0h1m139 0h1m28 0h3m-219 1h2m45 0h1m138 0h1m32 0h2m-224 1h3m47 0h1m138 0h1m34 0h3m-229 1h2m50 0h1m138 0h1m37 0h2m-233 1h2m53 0h1m136 0h1m40 0h2m-237 1h2m55 0h1m136 0h1m42 0h2m-241 1h2m57 0h1m136 0h1m44 0h2m-245 1h2m59 0h1m136 0h1m46 0h2m-250 1h3m62 0h1m134 0h1m49 0h3m-255 1h2m65 0h1m134 0h1m52 0h2m-258 1h1m67 0h1m134 0h1m54 0h1m-261 1h2m68 0h1m133 0h1m56 0h2m-265 1h2m71 0h1m132 0h1m58 0h2m-269 1h2m73 0h1m132 0h1m60 0h2m-273 1h2m75 0h1m132 0h1m62 0h2m-277 1h2m77 0h1m131 0h1m65 0h2m-281 1h2m80 0h1m130 0h1m67 0h2m-284 1h1m82 0h1m130 0h1m69 0h1m-287 1h2m83 0h1m129 0h1m71 0h2m-291 1h2m85 0h1m129 0h1m73 0h2m-294 1h1m88 0h1m128 0h1m75 0h1m-297 1h2m89 0h1m128 0h1m76 0h2m-301 1h2m91 0h1m127 0h1m79 0h2m-304 1h1m93 0h1m127 0h1m81 0h1m-307 1h2m95 0h1m41 0h31m54 0h1m82 0h2m-310 1h1m97 0h1m30 0h11m31 0h11m42 0h1m85 0h1m-313 1h2m98 0h1m22 0h8m12 0h1m18 0h1m21 0h8m34 0h1m86 0h2m-316 1h1m100 0h1m16 0h6m20 0h1m18 0h1m20 0h1m8 0h6m28 0h1m88 0h1m-319 1h2m102 0h1m9 0h6m5 0h1m20 0h1m18 0h1m20 0h1m14 0h6m21 0h1m90 0h2m-322 1h1m104 0h1m5 0h4m11 0h1m20 0h1m18 0h1m20 0h1m20 0h4m17 0h1m92 0h1m-325 1h2m105 0h6m15 0h1m20 0h1m18 0h1m20 0h1m20 0h1m3 0h5m12 0h1m93 0h2m-328 1h1m104 0h4m20 0h1m20 0h1m18 0h1m20 0h1m20 0h1m8 0h4m8 0h1m95 0h1m-330 1h1m101 0h4m4 0h1m20 0h1m19 0h1m18 0h1m20 0h1m20 0h1m12 0h4m3 0h1m97 0h1m-333 1h2m99 0h3m8 0h1m20 0h1m19 0h1m18 0h1m20 0h1m19 0h1m17 0h4m98 0h2m-336 1h1m97 0h4m12 0h1m19 0h1m19 0h1m18 0h1m19 0h1m20 0h1m20 0h4m97 0h1m-338 1h1m95 0h3m16 0h1m19 0h1m19 0h1m18 0h1m19 0h1m20 0h1m20 0h1m3 0h3m95 0h1m-341 1h2m93 0h3m19 0h1m19 0h1m19 0h1m18 0h1m19 0h1m20 0h1m20 0h1m6 0h3m93 0h2m-344 1h1m92 0h3m22 0h1m19 0h1m19 0h1m18 0h1m19 0h1m19 0h1m20 0h1m10 0h3m92 0h1m-346 1h1m91 0h2m4 0h1m21 0h1m19 0h1m18 0h1m18 0h1m19 0h1m19 0h1m20 0h1m13 0h2m91 0h1m-349 1h2m89 0h3m6 0h1m21 0h1m19 0h1m18 0h29m10 0h1m19 0h1m20 0h1m15 0h3m89 0h2m-352 1h1m88 0h3m10 0h1m20 0h1m19 0h1m7 0h11m13 0h1m15 0h11m19 0h1m19 0h1m19 0h3m88 0h1m-354 1h1m87 0h2m13 0h1m20 0h1m19 0h8m24 0h1m26 0h8m10 0h1m20 0h1m22 0h2m87 0h1m-356 1h1m85 0h3m15 0h1m21 0h1m12 0h6m32 0h1m34 0h6m4 0h1m20 0h1m20 0h1m3 0h3m85 0h1m-359 1h2m84 0h2m19 0h1m20 0h1m7 0h5m38 0h1m40 0h5m19 0h1m21 0h1m6 0h2m84 0h2m-362 1h1m84 0h2m21 0h1m20 0h1m2 0h5m43 0h1m45 0h5m14 0h1m20 0h1m9 0h2m84 0h1m-364 1h1m82 0h3m1 0h1m21 0h1m19 0h4m48 0h1m50 0h4m10 0h1m20 0h1m11 0h3m82 0h1m-366 1h1m81 0h2m4 0h1m22 0h1m14 0h4m52 0h1m54 0h4m5 0h1m21 0h1m14 0h2m81 0h1m-368 1h1m80 0h2m7 0h1m21 0h1m10 0h4m56 0h1m58 0h4m1 0h1m20 0h1m17 0h2m80 0h1m-371 1h2m79 0h2m9 0h1m21 0h1m7 0h3m60 0h1m62 0h3m19 0h1m19 0h2m79 0h2m-374 1h1m79 0h2m12 0h1m21 0h1m3 0h3m63 0h1m65 0h3m16 0h1m21 0h2m79 0h1m-376 1h1m78 0h2m14 0h1m21 0h4m66 0h1m68 0h3m12 0h1m21 0h1m2 0h2m78 0h1m-378 1h1m77 0h2m17 0h1m18 0h3m69 0h1m71 0h3m9 0h1m21 0h1m4 0h2m77 0h1m-380 1h1m76 0h2m19 0h1m15 0h3m72 0h1m74 0h3m6 0h1m20 0h1m7 0h2m76 0h1m-382 1h1m75 0h2m21 0h1m12 0h3m75 0h1m77 0h3m2 0h1m21 0h1m9 0h2m75 0h1m-384 1h1m75 0h1m24 0h1m9 0h2m78 0h1m80 0h3m20 0h1m12 0h1m75 0h1m-386 1h1m74 0h2m3 0h1m21 0h1m6 0h3m80 0h1m82 0h3m18 0h1m13 0h2m74 0h1m-388 1h1m73 0h2m6 0h1m21 0h1m3 0h2m83 0h1m85 0h2m15 0h1m16 0h2m73 0h1m-391 1h2m72 0h2m8 0h1m21 0h4m85 0h1m87 0h3m12 0h1m18 0h2m72 0h2m-394 1h1m73 0h1m11 0h1m19 0h2m88 0h1m90 0h2m10 0h1m20 0h1m73 0h1m-396 1h1m3 0h1m68 0h2m12 0h1m17 0h2m90 0h1m92 0h2m7 0h1m22 0h2m72 0h1m-398 1h1m5 0h1m66 0h1m15 0h1m14 0h2m92 0h1m94 0h2m5 0h1m22 0h1m1 0h1m72 0h1m-400 1h1m7 0h1m63 0h2m16 0h1m12 0h2m94 0h1m96 0h2m2 0h1m22 0h1m3 0h2m71 0h1m-402 1h1m9 0h1m60 0h2m19 0h1m9 0h2m96 0h1m98 0h3m22 0h1m5 0h2m70 0h1m-404 1h1m11 0h1m58 0h1m21 0h1m7 0h2m98 0h1m100 0h2m20 0h1m8 0h1m70 0h1m-406 1h1m13 0h1m55 0h2m23 0h1m4 0h2m100 0h1m102 0h2m17 0h1m10 0h2m69 0h1m-408 1h1m15 0h1m53 0h1m2 0h1m22 0h1m2 0h2m102 0h1m104 0h2m15 0h1m12 0h1m69 0h1m-410 1h1m17 0h1m50 0h2m4 0h1m22 0h2m104 0h1m106 0h2m12 0h1m14 0h2m68 0h1m-412 1h1m19 0h1m48 0h1m6 0h1m20 0h2m106 0h1m108 0h2m10 0h1m16 0h1m68 0h1m-413 1h1m20 0h1m46 0h1m8 0h1m17 0h2m108 0h1m110 0h2m7 0h1m18 0h1m67 0h1m-414 1h1m22 0h1m43 0h2m10 0h1m15 0h1m98 0h27m98 0h1m5 0h1m20 0h2m63 0h1m2 0h1m-416 1h1m24 0h1m41 0h1m12 0h1m13 0h2m88 0h11m27 0h11m88 0h2m3 0h1m22 0h1m61 0h1m4 0h1m-418 1h1m26 0h1m39 0h1m14 0h1m10 0h2m83 0h7m49 0h7m83 0h3m24 0h1m59 0h1m6 0h1m-420 1h1m28 0h1m36 0h2m15 0h1m9 0h1m80 0h5m63 0h5m77 0h1m2 0h1m23 0h1m1 0h2m56 0h1m8 0h1m-422 1h1m30 0h1m34 0h1m18 0h1m6 0h2m76 0h5m73 0h5m71 0h1m4 0h2m20 0h1m4 0h1m54 0h1m10 0h1m-424 1h1m32 0h1m32 0h1m20 0h1m3 0h2m2 0h1m71 0h4m83 0h4m67 0h1m6 0h2m17 0h1m6 0h1m52 0h1m12 0h1m-426 1h1m33 0h1m30 0h2m21 0h1m2 0h1m5 0h1m66 0h4m91 0h4m62 0h1m9 0h1m16 0h1m7 0h2m49 0h1m14 0h1m-428 1h1m35 0h1m28 0h1m24 0h2m6 0h1m62 0h4m99 0h4m57 0h1m11 0h2m13 0h1m10 0h1m47 0h1m16 0h1m-430 1h1m37 0h1m26 0h1m1 0h1m22 0h1m9 0h1m58 0h3m107 0h3m54 0h1m13 0h1m11 0h1m12 0h1m45 0h1m18 0h1m-431 1h1m38 0h1m24 0h1m3 0h1m19 0h2m11 0h1m54 0h3m113 0h3m50 0h1m15 0h2m8 0h1m14 0h1m43 0h1m19 0h1m-432 1h1m40 0h1m21 0h2m5 0h1m17 0h1m13 0h1m51 0h3m119 0h3m47 0h1m17 0h1m6 0h1m16 0h2m40 0h1m21 0h1m-434 1h1m42 0h1m19 0h1m7 0h1m16 0h1m15 0h1m47 0h3m125 0h3m43 0h1m19 0h1m5 0h1m18 0h1m38 0h1m23 0h1m-436 1h1m44 0h1m17 0h1m9 0h1m13 0h2m17 0h1m43 0h3m131 0h3m39 0h1m21 0h2m2 0h1m20 0h1m36 0h1m25 0h1m-438 1h1m46 0h1m15 0h1m11 0h1m11 0h1m19 0h1m40 0h3m137 0h3m36 0h1m23 0h2m22 0h1m34 0h1m27 0h1m-440 1h1m48 0h1m13 0h1m13 0h1m9 0h1m21 0h1m37 0h2m143 0h2m33 0h1m25 0h1m23 0h1m31 0h2m29 0h1m-441 1h1m49 0h1m11 0h1m15 0h1m6 0h2m23 0h1m34 0h2m147 0h2m30 0h1m27 0h2m22 0h1m29 0h1m31 0h1m-442 1h1m51 0h1m8 0h2m16 0h1m5 0h1m25 0h1m31 0h3m151 0h3m27 0h1m29 0h1m20 0h1m1 0h2m26 0h1m33 0h1m-444 1h1m53 0h1m6 0h1m19 0h1m3 0h1m27 0h1m28 0h2m157 0h2m24 0h1m31 0h1m18 0h1m4 0h1m24 0h1m35 0h1m-446 1h1m55 0h1m4 0h1m21 0h3m28 0h1m26 0h2m161 0h2m22 0h1m32 0h2m15 0h1m6 0h1m22 0h1m37 0h1m-448 1h1m57 0h1m2 0h1m22 0h1m31 0h1m23 0h2m165 0h2m19 0h1m35 0h1m13 0h1m8 0h1m20 0h1m39 0h1m-449 1h1m58 0h2m22 0h1m33 0h1m20 0h2m169 0h2m16 0h1m37 0h1m11 0h1m10 0h1m18 0h1m40 0h1m-450 1h1m59 0h1m22 0h1m34 0h1m18 0h2m173 0h2m14 0h1m38 0h1m10 0h1m11 0h1m16 0h1m42 0h1m-452 1h1m59 0h1m1 0h1m19 0h2m36 0h1m15 0h2m177 0h2m11 0h1m40 0h2m7 0h1m13 0h1m14 0h1m44 0h1m-454 1h1m59 0h1m3 0h1m17 0h1m39 0h1m12 0h2m181 0h2m8 0h1m43 0h1m5 0h1m15 0h1m12 0h1m46 0h1m-455 1h1m58 0h1m5 0h1m15 0h1m40 0h1m10 0h2m185 0h2m6 0h1m44 0h1m3 0h1m17 0h1m10 0h1m47 0h1m-456 1h1m58 0h1m7 0h1m13 0h1m42 0h1m7 0h2m189 0h2m3 0h1m46 0h1m1 0h1m19 0h1m8 0h1m49 0h1m-458 1h1m58 0h1m9 0h1m11 0h1m44 0h1m5 0h1m96 0h1m96 0h1m2 0h1m47 0h1m21 0h1m6 0h1m51 0h1m-460 1h1m58 0h1m11 0h1m9 0h1m45 0h1m3 0h2m97 0h1m97 0h2m49 0h1m21 0h1m4 0h1m53 0h1m-461 1h1m57 0h1m13 0h1m7 0h1m47 0h3m99 0h1m99 0h2m48 0h1m21 0h1m2 0h1m54 0h1m-462 1h1m57 0h1m15 0h1m4 0h2m48 0h1m101 0h1m101 0h1m48 0h2m20 0h2m56 0h1m-464 1h1m57 0h1m17 0h1m2 0h1m48 0h2m102 0h1m102 0h2m48 0h1m18 0h1m1 0h1m57 0h1m-466 1h1m57 0h1m19 0h2m48 0h1m104 0h1m104 0h1m48 0h1m16 0h1m3 0h1m57 0h1m-467 1h1m56 0h1m20 0h1m47 0h2m105 0h1m105 0h2m47 0h1m14 0h1m5 0h1m56 0h1m-468 1h1m56 0h1m20 0h1m47 0h1m107 0h1m107 0h1m47 0h1m12 0h1m7 0h1m56 0h1m-470 1h1m56 0h1m20 0h1m46 0h2m108 0h1m108 0h2m46 0h1m10 0h1m9 0h1m56 0h1m-471 1h1m56 0h1m19 0h1m46 0h1m110 0h1m110 0h1m46 0h1m8 0h1m10 0h1m56 0h1m-472 1h1m56 0h1m19 0h1m45 0h2m111 0h1m111 0h2m45 0h1m6 0h1m12 0h1m56 0h1m-474 1h1m56 0h1m1 0h1m17 0h1m45 0h1m113 0h1m113 0h1m45 0h1m4 0h1m14 0h1m56 0h1m-475 1h1m55 0h1m3 0h1m15 0h1m45 0h1m114 0h1m114 0h1m45 0h1m2 0h1m16 0h1m55 0h1m-476 1h1m55 0h1m5 0h1m13 0h1m44 0h2m231 0h2m44 0h2m18 0h1m55 0h1m-478 1h1m55 0h1m7 0h1m11 0h1m44 0h1m235 0h1m44 0h1m19 0h1m55 0h1m-479 1h1m54 0h1m9 0h2m8 0h1m44 0h1m237 0h1m44 0h1m19 0h1m54 0h1m-480 1h1m55 0h1m11 0h1m6 0h1m43 0h2m239 0h2m43 0h1m18 0h1m55 0h1m-482 1h1m55 0h1m13 0h1m5 0h1m42 0h1m243 0h1m42 0h1m19 0h1m55 0h1m-483 1h1m54 0h1m15 0h1m3 0h1m42 0h1m245 0h1m42 0h1m19 0h1m54 0h1m-484 1h1m54 0h1m17 0h1m1 0h1m42 0h1m247 0h1m42 0h1m19 0h1m54 0h1m-485 1h1m53 0h1m19 0h1m41 0h2m249 0h2m41 0h1m17 0h1m1 0h1m53 0h1m-486 1h1m54 0h1m18 0h1m41 0h1m253 0h1m41 0h1m15 0h1m2 0h1m54 0h1m-488 1h1m54 0h1m18 0h1m41 0h1m255 0h1m41 0h1m12 0h2m4 0h1m54 0h1m-489 1h1m53 0h1m18 0h1m41 0h1m257 0h1m41 0h1m10 0h1m7 0h1m53 0h1m-490 1h1m53 0h1m18 0h1m41 0h1m259 0h1m41 0h1m8 0h1m9 0h1m53 0h1m-491 1h1m53 0h1m18 0h1m40 0h1m261 0h1m40 0h1m7 0h1m10 0h1m53 0h1m-492 1h1m53 0h1m18 0h1m40 0h1m263 0h1m40 0h1m4 0h2m12 0h1m53 0h1m-494 1h1m53 0h1m1 0h1m16 0h1m40 0h1m265 0h1m40 0h1m2 0h1m15 0h1m53 0h1m-495 1h1m52 0h1m3 0h1m14 0h1m40 0h1m267 0h1m40 0h2m17 0h1m52 0h1m-496 1h1m53 0h1m4 0h2m11 0h1m40 0h1m269 0h1m40 0h1m17 0h1m53 0h1m-497 1h1m52 0h1m7 0h1m10 0h1m39 0h1m271 0h1m39 0h1m18 0h1m52 0h1m-498 1h1m52 0h1m9 0h1m8 0h1m39 0h1m273 0h1m39 0h1m18 0h1m52 0h1m-499 1h1m51 0h1m11 0h1m6 0h1m39 0h1m275 0h1m39 0h1m18 0h1m51 0h1m-500 1h1m52 0h1m12 0h2m3 0h1m39 0h1m277 0h1m39 0h1m17 0h1m52 0h1m-501 1h1m51 0h1m15 0h1m2 0h1m38 0h1m279 0h1m38 0h1m18 0h1m51 0h1m-502 1h1m51 0h1m17 0h2m38 0h1m281 0h1m38 0h1m18 0h1m51 0h1m-503 1h1m51 0h1m17 0h1m38 0h1m283 0h1m38 0h1m17 0h1m51 0h1m-504 1h1m51 0h1m17 0h1m38 0h1m285 0h1m38 0h1m15 0h1m1 0h1m51 0h1m-505 1h1m50 0h1m18 0h1m37 0h1m287 0h1m37 0h1m13 0h2m3 0h1m50 0h1m-506 1h1m51 0h1m17 0h1m37 0h1m289 0h1m37 0h1m11 0h1m5 0h1m51 0h1m-508 1h1m51 0h1m17 0h1m37 0h1m291 0h1m37 0h1m8 0h2m7 0h1m51 0h1m-509 1h1m51 0h1m16 0h1m37 0h1m293 0h1m37 0h1m5 0h2m9 0h1m51 0h1m-510 1h1m51 0h1m17 0h1m36 0h1m295 0h1m36 0h1m4 0h1m12 0h1m51 0h1m-511 1h1m50 0h1m17 0h1m37 0h1m295 0h1m37 0h1m1 0h2m14 0h1m50 0h1m-511 1h1m50 0h2m15 0h1m37 0h1m297 0h1m37 0h1m16 0h1m50 0h1m-512 1h1m50 0h1m2 0h2m13 0h1m36 0h1m299 0h1m36 0h1m17 0h1m50 0h1m-513 1h1m49 0h1m5 0h1m11 0h1m36 0h1m301 0h1m36 0h1m17 0h1m49 0h1m-514 1h1m50 0h1m6 0h2m8 0h1m36 0h1m303 0h1m36 0h1m16 0h1m50 0h1m-515 1h1m49 0h1m9 0h2m6 0h1m36 0h1m303 0h1m36 0h1m17 0h1m49 0h1m-516 1h1m50 0h1m11 0h1m4 0h1m36 0h1m305 0h1m36 0h1m16 0h1m50 0h1m-517 1h1m49 0h1m13 0h2m2 0h1m35 0h1m307 0h1m35 0h1m17 0h1m49 0h1m-518 1h1m50 0h1m15 0h2m35 0h1m309 0h1m35 0h1m16 0h1m50 0h1m-519 1h1m49 0h1m16 0h1m36 0h1m309 0h1m36 0h1m16 0h1m49 0h1m-520 1h1m49 0h1m17 0h1m35 0h1m311 0h1m35 0h1m17 0h1m49 0h1m-521 1h1m49 0h1m16 0h1m35 0h1m313 0h1m35 0h1m16 0h1m49 0h1m-522 1h1m49 0h1m17 0h1m34 0h1m315 0h1m34 0h1m14 0h1m2 0h1m49 0h1m-523 1h1m49 0h1m16 0h1m35 0h1m315 0h1m35 0h1m11 0h2m3 0h1m49 0h1m-523 1h1m48 0h1m16 0h1m35 0h1m317 0h1m35 0h1m8 0h2m6 0h1m48 0h1m-524 1h1m49 0h1m16 0h1m34 0h1m319 0h1m34 0h1m6 0h2m8 0h1m49 0h1m-525 1h1m48 0h1m16 0h1m35 0h1m319 0h1m35 0h1m3 0h2m11 0h1m48 0h1m-526 1h1m49 0h1m16 0h1m34 0h1m321 0h1m34 0h1m1 0h2m13 0h1m49 0h1m-527 1h1m48 0h1m16 0h1m34 0h1m323 0h1m32 0h1m1 0h1m16 0h1m48 0h1m-527 1h1m48 0h1m16 0h1m34 0h1m323 0h1m30 0h2m2 0h1m16 0h1m48 0h1m-528 1h1m48 0h1m1 0h2m13 0h1m34 0h1m325 0h1m27 0h2m5 0h1m16 0h1m48 0h1m-529 1h1m48 0h1m3 0h2m11 0h1m33 0h1m327 0h1m24 0h2m7 0h1m16 0h1m48 0h1m-530 1h1m48 0h1m6 0h2m8 0h1m1 0h1m32 0h1m327 0h1m22 0h2m10 0h1m16 0h1m48 0h1m-531 1h1m48 0h1m8 0h3m5 0h1m2 0h2m29 0h1m329 0h1m19 0h2m12 0h1m16 0h1m48 0h1m-531 1h1m47 0h1m12 0h2m2 0h1m5 0h2m26 0h1m331 0h1m16 0h2m15 0h1m16 0h1m47 0h1m-532 1h1m48 0h1m14 0h3m7 0h2m24 0h1m331 0h1m14 0h2m17 0h1m16 0h1m48 0h1m-533 1h1m47 0h1m16 0h1m10 0h2m21 0h1m333 0h1m11 0h2m20 0h1m16 0h1m47 0h1m-534 1h1m48 0h1m16 0h1m12 0h2m19 0h1m333 0h1m9 0h2m22 0h1m16 0h1m48 0h1m-535 1h1m48 0h1m15 0h1m15 0h2m16 0h1m335 0h1m6 0h2m25 0h1m15 0h1m48 0h1m-535 1h1m47 0h1m16 0h1m17 0h2m13 0h1m337 0h1m3 0h2m27 0h1m16 0h1m47 0h1m-536 1h1m48 0h1m15 0h1m20 0h2m11 0h1m337 0h1m1 0h2m30 0h1m13 0h3m48 0h1m-537 1h1m47 0h1m16 0h1m22 0h2m8 0h1m339 0h1m32 0h1m11 0h2m3 0h1m47 0h1m-537 1h1m47 0h1m15 0h1m25 0h2m6 0h1m339 0h1m33 0h1m7 0h3m5 0h1m47 0h1m-538 1h1m47 0h1m16 0h1m27 0h2m3 0h1m341 0h1m32 0h1m5 0h2m9 0h1m47 0h1m-539 1h1m47 0h1m15 0h1m30 0h2m1 0h1m341 0h1m33 0h1m2 0h2m11 0h1m47 0h1m-539 1h1m47 0h1m15 0h1m32 0h1m343 0h1m32 0h3m13 0h1m47 0h1m-540 1h1m47 0h1m15 0h1m33 0h1m343 0h1m33 0h1m15 0h1m47 0h1m-541 1h1m47 0h1m15 0h1m32 0h1m345 0h1m32 0h1m15 0h1m47 0h1m-541 1h1m46 0h1m16 0h1m32 0h1m345 0h1m32 0h1m16 0h1m46 0h1m-542 1h1m47 0h1m1 0h2m12 0h1m32 0h1m347 0h1m32 0h1m15 0h1m47 0h1m-543 1h1m47 0h1m3 0h3m9 0h1m32 0h1m347 0h1m32 0h1m15 0h1m47 0h1m-543 1h1m46 0h1m7 0h3m5 0h1m32 0h1m349 0h1m32 0h1m15 0h1m46 0h1m-544 1h1m47 0h1m10 0h3m2 0h1m32 0h1m349 0h1m32 0h1m15 0h1m47 0h1m-545 1h1m47 0h1m13 0h3m31 0h1m351 0h1m31 0h1m15 0h1m47 0h1m-545 1h1m46 0h1m15 0h1m32 0h1m351 0h1m32 0h1m15 0h1m46 0h1m-545 1h1m46 0h1m15 0h1m31 0h1m310 0h2m41 0h1m31 0h1m15 0h1m46 0h1m-546 1h1m1 0h2m43 0h1m15 0h1m32 0h1m312 0h4m37 0h1m32 0h1m15 0h1m46 0h1m-547 1h1m3 0h4m39 0h1m15 0h1m31 0h1m317 0h4m34 0h1m31 0h1m15 0h1m46 0h1m-547 1h1m7 0h3m36 0h1m15 0h1m31 0h1m28 0h2m291 0h4m30 0h1m31 0h1m15 0h1m46 0h1m-548 1h1m11 0h3m32 0h1m15 0h1m32 0h1m30 0h2m293 0h2m28 0h1m32 0h1m15 0h1m46 0h1m-549 1h1m14 0h4m28 0h1m15 0h1m31 0h1m33 0h2m322 0h1m31 0h1m12 0h2m1 0h1m46 0h1m-549 1h1m18 0h3m25 0h1m15 0h1m31 0h1m35 0h2m320 0h1m31 0h1m9 0h3m3 0h1m46 0h1m-549 1h1m21 0h4m20 0h1m15 0h1m31 0h1m38 0h2m319 0h1m31 0h1m5 0h3m7 0h1m45 0h1m-550 1h1m26 0h3m17 0h1m15 0h1m31 0h1m40 0h2m317 0h1m31 0h1m2 0h3m10 0h1m46 0h1m-551 1h1m29 0h4m13 0h1m15 0h1m30 0h1m361 0h1m30 0h3m13 0h1m46 0h1m-551 1h1m33 0h3m9 0h1m15 0h1m31 0h1m361 0h1m31 0h1m15 0h1m45 0h1m-551 1h1m36 0h3m6 0h1m15 0h1m31 0h1m361 0h1m31 0h1m15 0h1m45 0h1m-552 1h1m40 0h4m2 0h1m15 0h1m30 0h1m363 0h1m30 0h1m15 0h1m46 0h1m-553 1h1m44 0h5m12 0h1m31 0h1m363 0h1m31 0h1m14 0h1m46 0h1m-553 1h1m45 0h1m3 0h3m9 0h1m31 0h1m363 0h1m31 0h1m15 0h1m41 0h3m1 0h1m-553 1h1m45 0h1m6 0h3m6 0h1m30 0h1m365 0h1m30 0h1m15 0h1m37 0h4m4 0h1m-554 1h1m46 0h1m9 0h3m2 0h1m31 0h1m365 0h1m31 0h1m14 0h1m33 0h4m9 0h1m-555 1h1m45 0h1m13 0h3m31 0h1m365 0h1m31 0h1m15 0h1m28 0h4m13 0h1m-555 1h1m45 0h1m15 0h1m30 0h1m367 0h1m30 0h1m15 0h1m24 0h4m17 0h1m-555 1h1m45 0h1m14 0h1m31 0h1m367 0h1m31 0h1m14 0h1m20 0h4m21 0h1m-556 1h1m46 0h1m14 0h1m31 0h1m367 0h1m31 0h1m14 0h1m16 0h4m26 0h1m-557 1h1m45 0h1m15 0h1m30 0h1m369 0h1m30 0h1m15 0h1m11 0h4m30 0h1m-557 1h1m45 0h1m15 0h1m30 0h1m369 0h1m30 0h1m15 0h1m7 0h4m34 0h1m-557 1h1m45 0h1m14 0h1m31 0h1m369 0h1m31 0h1m14 0h1m3 0h4m38 0h1m-557 1h1m45 0h1m14 0h1m30 0h1m371 0h1m30 0h1m14 0h4m42 0h1m-558 1h1m45 0h1m15 0h1m30 0h1m371 0h1m30 0h1m11 0h3m1 0h1m45 0h1m-559 1h1m45 0h1m15 0h1m30 0h1m371 0h1m30 0h1m7 0h4m4 0h1m45 0h1m-559 1h1m45 0h1m14 0h1m30 0h1m373 0h1m30 0h1m2 0h4m8 0h1m45 0h1m-559 1h1m45 0h1m14 0h1m30 0h1m373 0h1m30 0h3m12 0h1m45 0h1m-559 1h1m45 0h1m14 0h1m30 0h1m373 0h1m30 0h1m14 0h1m45 0h1m-560 1h1m45 0h1m15 0h1m30 0h1m373 0h1m30 0h1m15 0h1m45 0h1m-561 1h1m45 0h1m14 0h1m30 0h1m375 0h1m30 0h1m14 0h1m45 0h1m-561 1h1m45 0h1m14 0h1m30 0h1m375 0h1m30 0h1m14 0h1m45 0h1m-561 1h1m45 0h4m11 0h1m30 0h1m375 0h1m30 0h1m14 0h1m45 0h1m-561 1h1m44 0h1m4 0h4m7 0h1m30 0h1m375 0h1m30 0h1m15 0h1m44 0h1m-561 1h1m44 0h1m8 0h4m3 0h1m29 0h1m377 0h1m29 0h1m15 0h1m44 0h1m-562 1h1m45 0h1m12 0h3m30 0h1m377 0h1m30 0h1m14 0h1m45 0h1m-563 1h1m45 0h1m14 0h1m30 0h1m377 0h1m30 0h1m14 0h1m45 0h1m-563 1h1m45 0h1m14 0h1m30 0h1m377 0h1m30 0h1m14 0h1m45 0h1m-563 1h1m45 0h1m14 0h1m29 0h1m379 0h1m29 0h1m14 0h1m45 0h1m-563 1h1m44 0h1m15 0h1m29 0h1m379 0h1m29 0h1m15 0h1m44 0h1m-563 1h1m44 0h1m14 0h1m30 0h1m379 0h1m30 0h1m14 0h1m44 0h1m-563 1h1m44 0h1m14 0h1m30 0h1m379 0h1m30 0h1m14 0h1m44 0h1m-564 1h1m45 0h1m14 0h1m30 0h1m379 0h1m30 0h1m14 0h1m45 0h1m-565 1h1m45 0h1m14 0h1m29 0h1m381 0h1m29 0h1m14 0h1m45 0h1m-565 1h1m45 0h1m14 0h1m29 0h1m381 0h1m29 0h1m10 0h5m45 0h1m-565 1h1m44 0h1m15 0h1m29 0h1m381 0h1m29 0h1m4 0h6m5 0h1m44 0h1m-565 1h1m44 0h1m14 0h1m30 0h1m381 0h1m30 0h4m11 0h1m44 0h1m-565 1h1m44 0h1m14 0h1m30 0h1m381 0h1m30 0h1m14 0h1m44 0h1m-565 1h1m44 0h1m14 0h1m29 0h1m383 0h1m29 0h1m14 0h1m44 0h1m-565 1h1m44 0h1m14 0h1m29 0h1m383 0h1m29 0h1m14 0h1m44 0h1m-566 1h1m45 0h1m14 0h1m29 0h1m383 0h1m29 0h1m14 0h1m45 0h1m-567 1h1m45 0h1m14 0h1m29 0h1m383 0h1m29 0h1m14 0h1m45 0h1m-567 1h1m45 0h1m14 0h1m29 0h1m383 0h1m29 0h1m14 0h1m45 0h1m-567 1h1m44 0h1m1 0h7m7 0h1m29 0h1m383 0h1m29 0h1m15 0h1m44 0h1m-567 1h1m44 0h1m8 0h7m30 0h1m383 0h1m30 0h1m14 0h1m44 0h1m-567 1h1m44 0h1m14 0h1m29 0h1m385 0h1m29 0h1m14 0h1m44 0h1m-567 1h1m44 0h1m14 0h1m29 0h1m385 0h1m29 0h1m14 0h1m44 0h1m-567 1h1m44 0h1m14 0h1m29 0h1m385 0h1m29 0h1m14 0h1m44 0h1m-567 1h1m44 0h1m14 0h1m29 0h1m385 0h1m29 0h1m14 0h1m44 0h1m-567 1h1m44 0h1m14 0h1m29 0h1m385 0h1m29 0h1m14 0h1m44 0h1m-567 1h1m44 0h1m14 0h1m29 0h1m385 0h1m29 0h1m14 0h1m44 0h1m-567 1h1m44 0h1m14 0h1m29 0h1m385 0h1m29 0h1m14 0h1m44 0h1m-567 1h1m44 0h1m14 0h1m29 0h1m385 0h1m29 0h1m14 0h1m44 0h1m-568 1h1m45 0h1m14 0h1m29 0h1m385 0h1m29 0h1m14 0h1m45 0h1m-569 1h1m44 0h1m15 0h1m29 0h1m385 0h1m29 0h1m15 0h1m44 0h1m-569 1h1m44 0h1m14 0h1m30 0h1m385 0h1m30 0h14m1 0h1m44 0h1m-569 1h1m44 0h1m14 0h1m29 0h1m387 0h1m29 0h1m14 0h1m44 0h1m-569 1h1m44 0h1m14 0h1m29 0h1m387 0h1m29 0h1m14 0h1m44 0h1m-569 1h1m44 0h1m14 0h1m29 0h1m387 0h1m29 0h1m14 0h1m44 0h1m-569 1h1m44 0h1m14 0h1m29 0h1m387 0h1m29 0h1m14 0h1m44 0h1m-569 1h1m44 0h1m14 0h1m29 0h1m387 0h1m29 0h1m14 0h1m44 0h1m-569 1h1m44 0h1m14 0h1m29 0h1m387 0h1m29 0h1m14 0h1m44 0h1m-569 1h1m44 0h1m14 0h1m29 0h1m387 0h1m29 0h1m14 0h1m44 0h1m-569 1h1m44 0h1m14 0h1m29 0h1m387 0h1m29 0h1m14 0h1m44 0h1m-569 1h1m44 0h1m1 0h14m29 0h1m387 0h1m29 0h1m14 0h1m44 0h1m-569 1h1m44 0h1m14 0h1m29 0h1m387 0h1m29 0h1m14 0h1m44 0h1m-569 1h1m44 0h1m14 0h1m29 0h1m387 0h1m29 0h1m14 0h1m44 0h1m-569 1h1m44 0h1m14 0h1m29 0h1m387 0h1m29 0h1m14 0h1m44 0h1m-569 1h1m44 0h1m14 0h1m29 0h1m387 0h1m29 0h1m14 0h1m44 0h1m-569 1h1m44 0h1m14 0h31m25 0h13m349 0h31m14 0h1m44 0h1m-569 1h1m44 0h1m14 0h1m29 0h1m387 0h1m29 0h1m14 0h1m44 0h1m-569 1h1m44 0h1m14 0h1m29 0h1m387 0h1m29 0h1m14 0h1m44 0h1m-569 1h1m44 0h1m14 0h1m29 0h1m387 0h1m29 0h1m14 0h1m44 0h1m-569 1h1m44 0h1m14 0h1m29 0h1m387 0h1m29 0h1m14 0h1m44 0h1m-569 1h1m44 0h1m14 0h1m29 0h1m387 0h1m29 0h14m1 0h1m44 0h1m-569 1h1m44 0h1m14 0h1m29 0h1m387 0h1m29 0h1m14 0h1m44 0h1m-569 1h1m44 0h1m14 0h1m29 0h1m387 0h1m29 0h1m14 0h1m44 0h1m-569 1h1m44 0h1m14 0h1m29 0h1m387 0h1m29 0h1m14 0h1m44 0h1m-569 1h1m44 0h1m14 0h1m29 0h1m387 0h1m29 0h1m14 0h1m44 0h1m-569 1h1m44 0h1m14 0h1m29 0h1m387 0h1m29 0h1m14 0h1m44 0h1m-569 1h1m44 0h1m14 0h1m29 0h1m387 0h1m29 0h1m14 0h1m44 0h1m-569 1h1m44 0h1m14 0h1m29 0h1m387 0h1m29 0h1m14 0h1m44 0h1m-569 1h1m44 0h1m14 0h1m29 0h1m387 0h1m29 0h1m14 0h1m44 0h1m-569 1h1m44 0h1m1 0h14m30 0h1m385 0h1m30 0h1m14 0h1m44 0h1m-569 1h1m44 0h1m15 0h1m29 0h1m385 0h1m29 0h1m15 0h1m44 0h1m-569 1h1m45 0h1m14 0h1m29 0h1m385 0h1m29 0h1m14 0h1m45 0h1m-568 1h1m44 0h1m14 0h1m29 0h1m347 0h6m32 0h1m29 0h1m14 0h1m44 0h1m-567 1h1m44 0h1m14 0h1m29 0h1m353 0h7m25 0h1m29 0h1m14 0h1m44 0h1m-567 1h1m44 0h1m14 0h1m29 0h1m385 0h1m29 0h1m14 0h1m44 0h1m-567 1h1m44 0h1m14 0h1m29 0h1m385 0h1m29 0h1m14 0h1m44 0h1m-567 1h1m44 0h1m14 0h1m29 0h1m385 0h1m29 0h1m14 0h1m44 0h1m-567 1h1m44 0h1m14 0h1m29 0h1m385 0h1m29 0h1m14 0h1m44 0h1m-567 1h1m44 0h1m14 0h1m29 0h1m385 0h1m29 0h1m14 0h1m44 0h1m-567 1h1m44 0h1m14 0h1m29 0h1m385 0h1m29 0h1m14 0h1m44 0h1m-567 1h1m44 0h1m14 0h1m30 0h1m383 0h1m30 0h7m8 0h1m44 0h1m-567 1h1m44 0h1m15 0h1m29 0h1m383 0h1m29 0h1m7 0h7m1 0h1m44 0h1m-567 1h1m45 0h1m14 0h1m29 0h1m383 0h1m29 0h1m14 0h1m45 0h1m-567 1h1m45 0h1m14 0h1m29 0h1m383 0h1m29 0h1m14 0h1m45 0h1m-567 1h1m45 0h1m14 0h1m29 0h1m383 0h1m29 0h1m14 0h1m45 0h1m-566 1h1m44 0h1m14 0h1m29 0h1m383 0h1m29 0h1m14 0h1m44 0h1m-565 1h1m44 0h1m14 0h1m29 0h1m383 0h1m29 0h1m14 0h1m44 0h1m-565 1h1m44 0h1m14 0h1m30 0h1m381 0h1m30 0h1m14 0h1m44 0h1m-565 1h1m44 0h1m11 0h4m30 0h1m381 0h1m30 0h1m14 0h1m44 0h1m-565 1h1m44 0h1m5 0h6m4 0h1m29 0h1m381 0h1m29 0h1m15 0h1m44 0h1m-565 1h1m45 0h5m10 0h1m29 0h1m381 0h1m29 0h1m14 0h1m45 0h1m-565 1h1m45 0h1m14 0h1m29 0h1m381 0h1m29 0h1m14 0h1m45 0h1m-565 1h1m45 0h1m14 0h1m30 0h1m379 0h1m30 0h1m14 0h1m45 0h1m-564 1h1m44 0h1m14 0h1m30 0h1m379 0h1m30 0h1m14 0h1m44 0h1m-563 1h1m44 0h1m14 0h1m30 0h1m379 0h1m30 0h1m14 0h1m44 0h1m-563 1h1m44 0h1m15 0h1m29 0h1m379 0h1m29 0h1m15 0h1m44 0h1m-563 1h1m45 0h1m14 0h1m29 0h1m379 0h1m29 0h1m14 0h1m45 0h1m-563 1h1m45 0h1m14 0h1m30 0h1m377 0h1m30 0h1m14 0h1m45 0h1m-563 1h1m45 0h1m14 0h1m30 0h1m377 0h1m30 0h1m14 0h1m45 0h1m-563 1h1m45 0h1m14 0h1m30 0h1m377 0h1m30 0h3m12 0h1m45 0h1m-562 1h1m44 0h1m15 0h1m29 0h1m377 0h1m29 0h1m3 0h4m8 0h1m44 0h1m-561 1h1m44 0h1m15 0h1m30 0h1m375 0h1m30 0h1m7 0h4m4 0h1m44 0h1m-561 1h1m45 0h1m14 0h1m30 0h1m375 0h1m30 0h1m11 0h4m45 0h1m-561 1h1m45 0h1m14 0h1m30 0h1m375 0h1m30 0h1m14 0h1m45 0h1m-561 1h1m45 0h1m14 0h1m30 0h1m375 0h1m30 0h1m14 0h1m45 0h1m-561 1h1m45 0h1m15 0h1m30 0h1m373 0h1m30 0h1m15 0h1m45 0h1m-560 1h1m45 0h1m14 0h1m30 0h1m373 0h1m30 0h1m14 0h1m45 0h1m-559 1h1m45 0h1m11 0h4m30 0h1m373 0h1m30 0h1m14 0h1m45 0h1m-559 1h1m45 0h1m7 0h4m3 0h1m30 0h1m373 0h1m30 0h1m14 0h1m45 0h1m-559 1h1m45 0h1m3 0h4m8 0h1m30 0h1m371 0h1m30 0h1m15 0h1m45 0h1m-559 1h1m45 0h1m1 0h2m12 0h1m30 0h1m371 0h1m30 0h1m15 0h1m45 0h1m-558 1h1m42 0h4m14 0h1m30 0h1m371 0h1m30 0h1m14 0h1m45 0h1m-557 1h1m38 0h4m3 0h1m14 0h1m31 0h1m369 0h1m31 0h1m14 0h1m45 0h1m-557 1h1m34 0h4m7 0h1m15 0h1m30 0h1m369 0h1m30 0h1m15 0h1m45 0h1m-557 1h1m30 0h4m11 0h1m15 0h1m30 0h1m369 0h1m30 0h1m15 0h1m45 0h1m-557 1h1m26 0h4m16 0h1m14 0h1m31 0h1m367 0h1m31 0h1m14 0h1m46 0h1m-556 1h1m21 0h4m20 0h1m14 0h1m31 0h1m367 0h1m31 0h1m14 0h1m45 0h1m-555 1h1m17 0h4m24 0h1m15 0h1m30 0h1m367 0h1m30 0h1m15 0h1m45 0h1m-555 1h1m13 0h4m28 0h1m15 0h1m31 0h1m365 0h1m31 0h3m13 0h1m45 0h1m-555 1h1m9 0h4m33 0h1m14 0h1m31 0h1m365 0h1m31 0h1m2 0h3m9 0h1m46 0h1m-554 1h1m4 0h4m37 0h1m15 0h1m30 0h1m365 0h1m30 0h1m6 0h3m6 0h1m45 0h1m-553 1h1m1 0h3m41 0h1m15 0h1m31 0h1m363 0h1m31 0h1m9 0h3m3 0h1m45 0h1m-553 1h1m46 0h1m14 0h1m31 0h1m363 0h1m31 0h1m12 0h5m44 0h1m-553 1h1m46 0h1m15 0h1m30 0h1m363 0h1m30 0h1m15 0h1m2 0h4m40 0h1m-552 1h1m45 0h1m15 0h1m31 0h1m361 0h1m31 0h1m15 0h1m6 0h3m36 0h1m-551 1h1m45 0h1m15 0h1m31 0h1m361 0h1m31 0h1m15 0h1m9 0h3m33 0h1m-551 1h1m46 0h1m13 0h3m30 0h1m361 0h1m30 0h1m15 0h1m13 0h4m29 0h1m-551 1h1m46 0h1m10 0h3m2 0h1m31 0h1m359 0h1m31 0h1m15 0h1m17 0h3m26 0h1m-550 1h1m45 0h1m7 0h3m5 0h1m31 0h1m359 0h1m31 0h1m15 0h1m20 0h4m21 0h1m-549 1h1m46 0h1m3 0h3m9 0h1m31 0h1m357 0h1m31 0h1m15 0h1m25 0h3m18 0h1m-549 1h1m46 0h1m1 0h2m12 0h1m31 0h1m357 0h1m31 0h1m15 0h1m28 0h4m14 0h1m-549 1h1m46 0h1m15 0h1m32 0h1m355 0h1m32 0h1m15 0h1m32 0h3m11 0h1m-548 1h1m46 0h1m15 0h1m31 0h1m355 0h1m31 0h1m15 0h1m36 0h3m7 0h1m-547 1h1m46 0h1m15 0h1m31 0h1m355 0h1m31 0h1m15 0h1m39 0h4m3 0h1m-547 1h1m46 0h1m15 0h1m32 0h1m353 0h1m32 0h1m15 0h1m43 0h2m1 0h1m-546 1h1m46 0h1m15 0h1m31 0h1m353 0h1m31 0h1m15 0h1m46 0h1m-545 1h1m46 0h1m15 0h1m32 0h1m351 0h1m32 0h1m15 0h1m46 0h1m-545 1h1m47 0h1m15 0h1m31 0h1m351 0h1m31 0h3m13 0h1m47 0h1m-545 1h1m47 0h1m15 0h1m32 0h1m349 0h1m32 0h1m2 0h3m10 0h1m47 0h1m-544 1h1m46 0h1m15 0h1m32 0h1m349 0h1m32 0h1m5 0h3m7 0h1m46 0h1m-543 1h1m47 0h1m15 0h1m32 0h1m347 0h1m32 0h1m9 0h3m3 0h1m47 0h1m-543 1h1m47 0h1m15 0h1m32 0h1m347 0h1m32 0h1m12 0h2m1 0h1m47 0h1m-542 1h1m46 0h1m16 0h1m32 0h1m345 0h1m32 0h1m16 0h1m46 0h1m-541 1h1m47 0h1m15 0h1m32 0h1m345 0h1m32 0h1m15 0h1m47 0h1m-541 1h1m47 0h1m15 0h1m33 0h1m343 0h1m33 0h1m15 0h1m47 0h1m-540 1h1m47 0h1m13 0h3m32 0h1m343 0h1m32 0h1m15 0h1m47 0h1m-539 1h1m47 0h1m11 0h2m2 0h1m33 0h1m341 0h1m1 0h2m30 0h1m15 0h1m47 0h1m-539 1h1m47 0h1m8 0h3m5 0h1m32 0h1m341 0h1m3 0h2m27 0h1m16 0h1m47 0h1m-538 1h1m47 0h1m5 0h2m8 0h1m33 0h1m339 0h1m6 0h2m25 0h1m15 0h1m47 0h1m-537 1h1m47 0h1m3 0h2m11 0h1m32 0h1m339 0h1m8 0h2m22 0h1m16 0h1m47 0h1m-537 1h1m48 0h3m13 0h1m30 0h2m1 0h1m337 0h1m11 0h2m20 0h1m15 0h1m48 0h1m-536 1h1m47 0h1m16 0h1m27 0h2m3 0h1m337 0h1m13 0h2m17 0h1m16 0h1m47 0h1m-535 1h1m48 0h1m15 0h1m25 0h2m6 0h1m335 0h1m16 0h2m15 0h1m15 0h1m48 0h1m-535 1h1m48 0h1m16 0h1m22 0h2m9 0h1m333 0h1m19 0h2m12 0h1m16 0h1m48 0h1m-534 1h1m47 0h1m16 0h1m20 0h2m11 0h1m333 0h1m21 0h2m10 0h1m16 0h1m47 0h1m-533 1h1m48 0h1m16 0h1m17 0h2m14 0h1m331 0h1m24 0h2m7 0h3m14 0h1m48 0h1m-532 1h1m47 0h1m16 0h1m15 0h2m16 0h1m331 0h1m26 0h2m5 0h1m2 0h2m12 0h1m47 0h1m-531 1h1m48 0h1m16 0h1m12 0h2m19 0h1m329 0h1m29 0h2m2 0h1m5 0h2m9 0h1m48 0h1m-531 1h1m48 0h1m16 0h1m10 0h2m22 0h1m327 0h1m32 0h1m1 0h1m7 0h3m6 0h1m48 0h1m-530 1h1m48 0h1m16 0h1m7 0h2m24 0h1m327 0h1m33 0h1m11 0h2m3 0h1m48 0h1m-529 1h1m48 0h1m16 0h1m5 0h2m27 0h1m325 0h1m34 0h1m13 0h2m1 0h1m48 0h1m-528 1h1m48 0h1m16 0h1m2 0h2m30 0h1m323 0h1m34 0h1m16 0h1m48 0h1m-527 1h1m48 0h1m16 0h1m1 0h1m32 0h1m323 0h1m34 0h1m16 0h1m48 0h1m-527 1h1m49 0h1m13 0h2m1 0h1m34 0h1m321 0h1m34 0h1m16 0h1m49 0h1m-526 1h1m48 0h1m11 0h2m3 0h1m35 0h1m319 0h1m35 0h1m16 0h1m48 0h1m-525 1h1m49 0h1m8 0h2m6 0h1m34 0h1m319 0h1m34 0h1m16 0h1m49 0h1m-524 1h1m48 0h1m6 0h2m8 0h1m35 0h1m317 0h1m35 0h1m16 0h1m48 0h1m-523 1h1m49 0h1m3 0h2m11 0h1m35 0h1m264 0h1m50 0h1m35 0h1m16 0h1m49 0h1m-523 1h1m49 0h1m2 0h1m14 0h1m34 0h1m265 0h1m49 0h1m34 0h1m17 0h1m49 0h1m-522 1h1m49 0h1m16 0h1m35 0h1m265 0h1m47 0h1m35 0h1m16 0h1m49 0h1m-521 1h1m49 0h1m17 0h1m35 0h1m265 0h1m45 0h1m35 0h1m17 0h1m49 0h1m-520 1h1m49 0h1m16 0h1m36 0h1m265 0h1m43 0h1m36 0h1m16 0h1m49 0h1m-519 1h1m50 0h1m16 0h1m35 0h1m266 0h1m42 0h1m35 0h2m15 0h1m50 0h1m-518 1h1m49 0h1m17 0h1m35 0h1m266 0h1m40 0h1m35 0h1m2 0h2m13 0h1m49 0h1m-517 1h1m50 0h1m16 0h1m36 0h1m266 0h1m38 0h1m36 0h1m4 0h1m11 0h1m50 0h1m-516 1h1m49 0h1m17 0h1m36 0h1m266 0h1m36 0h1m36 0h1m6 0h2m9 0h1m49 0h1m-515 1h1m50 0h1m16 0h1m36 0h1m267 0h1m35 0h1m36 0h1m8 0h2m6 0h1m50 0h1m-514 1h1m49 0h1m17 0h1m36 0h1m301 0h1m36 0h1m11 0h1m5 0h1m49 0h1m-513 1h1m50 0h1m17 0h1m36 0h1m299 0h1m36 0h1m13 0h2m2 0h1m50 0h1m-512 1h1m50 0h1m16 0h1m37 0h1m297 0h1m37 0h1m15 0h2m50 0h1m-511 1h1m50 0h1m14 0h2m1 0h1m37 0h1m295 0h1m37 0h1m17 0h1m50 0h1m-511 1h1m51 0h1m12 0h1m4 0h1m36 0h1m295 0h1m36 0h1m17 0h1m51 0h1m-510 1h1m51 0h1m9 0h2m5 0h1m37 0h1m293 0h1m37 0h1m16 0h1m51 0h1m-509 1h1m51 0h1m7 0h2m8 0h1m37 0h1m291 0h1m37 0h1m17 0h1m51 0h1m-508 1h1m51 0h1m5 0h1m11 0h1m37 0h1m289 0h1m37 0h1m17 0h1m51 0h1m-506 1h1m50 0h1m3 0h2m13 0h1m37 0h1m287 0h1m37 0h1m18 0h1m50 0h1m-505 1h1m51 0h1m1 0h1m15 0h1m38 0h1m285 0h1m38 0h1m17 0h1m51 0h1m-504 1h1m51 0h1m17 0h1m38 0h1m283 0h1m38 0h1m17 0h1m51 0h1m-503 1h1m51 0h1m18 0h1m38 0h1m281 0h1m38 0h2m17 0h1m51 0h1m-502 1h1m51 0h1m18 0h1m38 0h1m279 0h1m38 0h1m2 0h1m15 0h1m51 0h1m-501 1h1m52 0h1m17 0h1m39 0h1m277 0h1m39 0h1m3 0h2m12 0h1m52 0h1m-500 1h1m51 0h1m18 0h1m39 0h1m212 0h1m62 0h1m39 0h1m6 0h1m11 0h1m51 0h1m-499 1h1m52 0h1m18 0h1m39 0h1m212 0h1m60 0h1m39 0h1m8 0h1m9 0h1m52 0h1m-498 1h1m52 0h1m18 0h1m39 0h1m212 0h2m57 0h1m39 0h1m10 0h1m7 0h1m52 0h1m-497 1h1m53 0h1m17 0h1m40 0h1m213 0h1m55 0h1m40 0h1m11 0h2m4 0h1m53 0h1m-496 1h1m52 0h1m17 0h2m40 0h1m65 0h1m147 0h1m53 0h1m40 0h1m14 0h1m3 0h1m52 0h1m-495 1h1m53 0h1m15 0h1m2 0h1m40 0h1m64 0h1m133 0h1m14 0h1m51 0h1m40 0h1m16 0h1m1 0h1m53 0h1m-494 1h1m53 0h1m12 0h2m4 0h1m40 0h1m62 0h1m134 0h1m15 0h2m48 0h1m40 0h1m18 0h1m53 0h1m-492 1h1m53 0h1m10 0h1m7 0h1m40 0h1m61 0h1m135 0h1m16 0h1m46 0h1m40 0h1m18 0h1m53 0h1m-491 1h1m53 0h1m9 0h1m8 0h1m41 0h1m59 0h1m136 0h1m17 0h1m44 0h1m41 0h1m18 0h1m53 0h1m-490 1h1m53 0h1m7 0h1m10 0h1m41 0h1m58 0h1m136 0h1m61 0h1m41 0h1m18 0h1m53 0h1m-489 1h1m54 0h1m4 0h2m12 0h1m41 0h1m56 0h1m137 0h1m60 0h1m41 0h1m18 0h1m54 0h1m-488 1h1m54 0h1m2 0h1m15 0h1m41 0h1m55 0h1m138 0h1m58 0h1m41 0h1m18 0h1m54 0h1m-486 1h1m53 0h1m1 0h1m17 0h1m41 0h2m52 0h1m139 0h1m56 0h2m41 0h1m19 0h1m53 0h1m-485 1h1m54 0h1m19 0h1m42 0h1m51 0h1m139 0h1m55 0h1m42 0h1m1 0h1m17 0h1m54 0h1m-484 1h1m54 0h1m19 0h1m42 0h1m49 0h1m140 0h1m54 0h1m42 0h1m3 0h1m15 0h1m54 0h1m-483 1h1m55 0h1m19 0h1m42 0h1m48 0h1m141 0h1m52 0h1m42 0h1m5 0h1m13 0h1m55 0h1m-482 1h1m55 0h1m18 0h1m43 0h2m188 0h1m50 0h2m43 0h1m6 0h1m11 0h1m55 0h1m-480 1h1m54 0h1m19 0h1m44 0h1m187 0h1m49 0h1m44 0h1m8 0h2m9 0h1m54 0h1m-479 1h1m55 0h1m19 0h1m44 0h1m235 0h1m44 0h1m11 0h1m7 0h1m55 0h1m-478 1h1m55 0h1m18 0h2m44 0h2m102 0h1m128 0h2m44 0h1m13 0h1m5 0h1m55 0h1m-476 1h1m55 0h1m16 0h1m2 0h1m45 0h1m101 0h1m127 0h1m45 0h1m15 0h1m3 0h1m55 0h1m-475 1h1m56 0h1m14 0h1m4 0h1m45 0h1m100 0h1m126 0h1m45 0h1m17 0h1m1 0h1m56 0h1m-474 1h1m56 0h1m12 0h1m6 0h1m45 0h2m98 0h1m124 0h2m45 0h1m19 0h1m56 0h1m-472 1h1m56 0h1m10 0h1m8 0h1m46 0h1m97 0h1m123 0h1m46 0h1m19 0h1m56 0h1m-471 1h1m56 0h1m9 0h1m10 0h1m46 0h2m95 0h1m121 0h2m46 0h1m20 0h1m56 0h1m-470 1h1m56 0h1m7 0h1m12 0h1m47 0h1m93 0h1m121 0h1m47 0h1m20 0h1m56 0h1m-468 1h1m56 0h1m5 0h1m14 0h1m47 0h2m91 0h1m119 0h2m47 0h1m20 0h1m56 0h1m-467 1h1m57 0h1m3 0h1m16 0h1m48 0h1m90 0h1m118 0h1m48 0h2m19 0h1m57 0h1m-466 1h1m57 0h1m1 0h1m18 0h1m48 0h2m88 0h1m116 0h2m48 0h1m2 0h1m17 0h1m57 0h1m-464 1h1m56 0h2m20 0h2m48 0h1m87 0h1m115 0h1m48 0h2m4 0h1m15 0h1m57 0h1m-462 1h1m54 0h1m2 0h1m21 0h1m48 0h2m85 0h1m113 0h3m47 0h1m7 0h1m13 0h1m57 0h1m-461 1h1m53 0h1m4 0h1m21 0h1m49 0h2m83 0h1m111 0h2m3 0h1m45 0h1m9 0h1m11 0h1m58 0h1m-460 1h1m51 0h1m6 0h1m21 0h1m47 0h1m2 0h1m193 0h1m5 0h1m44 0h1m11 0h1m9 0h1m58 0h1m-458 1h1m49 0h1m8 0h1m19 0h1m1 0h1m46 0h1m3 0h2m189 0h2m7 0h1m42 0h1m13 0h1m7 0h1m58 0h1m-456 1h1m47 0h1m10 0h1m17 0h1m3 0h1m44 0h1m6 0h2m185 0h2m10 0h1m40 0h1m15 0h1m5 0h1m58 0h1m-455 1h1m46 0h1m12 0h1m15 0h1m5 0h1m42 0h1m9 0h2m181 0h2m12 0h1m39 0h1m17 0h1m3 0h1m59 0h1m-454 1h1m44 0h1m14 0h1m13 0h1m7 0h2m40 0h1m11 0h2m177 0h2m15 0h1m36 0h2m19 0h1m1 0h1m59 0h1m-452 1h1m42 0h1m16 0h1m11 0h1m10 0h1m38 0h1m14 0h2m173 0h2m18 0h1m34 0h1m22 0h1m59 0h1m-450 1h1m40 0h1m18 0h1m10 0h1m11 0h1m37 0h1m16 0h2m169 0h2m20 0h1m33 0h1m22 0h2m58 0h1m-449 1h1m39 0h1m20 0h1m8 0h1m13 0h1m35 0h1m19 0h2m165 0h2m23 0h1m31 0h1m22 0h1m2 0h1m57 0h1m-448 1h1m37 0h1m22 0h1m6 0h1m15 0h2m32 0h1m22 0h2m161 0h2m26 0h1m28 0h3m21 0h1m4 0h1m55 0h1m-446 1h1m35 0h1m24 0h1m4 0h1m18 0h1m31 0h1m24 0h2m157 0h2m28 0h1m27 0h1m3 0h1m19 0h1m6 0h1m53 0h1m-444 1h1m33 0h1m26 0h2m1 0h1m20 0h1m29 0h1m27 0h3m151 0h3m31 0h1m25 0h1m5 0h1m16 0h2m8 0h1m51 0h1m-442 1h1m30 0h2m29 0h1m22 0h2m26 0h1m31 0h2m147 0h2m34 0h1m23 0h2m6 0h1m15 0h1m11 0h1m49 0h1m-441 1h1m29 0h1m32 0h1m23 0h1m25 0h1m33 0h2m143 0h2m37 0h1m21 0h1m9 0h1m13 0h1m13 0h1m48 0h1m-440 1h1m27 0h1m34 0h1m22 0h2m23 0h1m36 0h3m137 0h3m40 0h1m19 0h1m11 0h1m11 0h1m15 0h1m46 0h1m-438 1h1m25 0h1m36 0h1m20 0h1m2 0h2m21 0h1m39 0h3m131 0h3m43 0h1m17 0h2m13 0h1m9 0h1m17 0h1m44 0h1m-436 1h1m23 0h1m38 0h1m18 0h1m5 0h1m19 0h1m43 0h3m125 0h3m47 0h1m15 0h1m16 0h1m7 0h1m19 0h1m42 0h1m-434 1h1m21 0h1m40 0h2m16 0h1m6 0h1m17 0h1m47 0h3m119 0h3m51 0h1m13 0h1m17 0h1m5 0h2m21 0h1m40 0h1m-432 1h1m19 0h1m43 0h1m14 0h1m8 0h2m15 0h1m50 0h3m113 0h3m54 0h1m11 0h2m19 0h1m3 0h1m24 0h1m38 0h1m-431 1h1m18 0h1m45 0h1m12 0h1m11 0h1m13 0h1m54 0h3m107 0h3m58 0h1m9 0h1m22 0h1m1 0h1m26 0h1m37 0h1m-430 1h1m16 0h1m47 0h1m10 0h1m13 0h2m10 0h1m58 0h4m99 0h4m62 0h1m6 0h2m24 0h1m28 0h1m35 0h1m-428 1h1m14 0h1m49 0h2m7 0h1m16 0h1m9 0h1m62 0h4m91 0h4m66 0h1m5 0h1m2 0h1m21 0h2m30 0h1m33 0h1m-426 1h1m12 0h1m52 0h1m6 0h1m17 0h2m6 0h1m67 0h4m83 0h4m71 0h1m2 0h2m3 0h1m20 0h1m33 0h1m31 0h1m-424 1h1m10 0h1m54 0h1m4 0h1m20 0h2m4 0h1m71 0h5m73 0h5m76 0h2m6 0h1m18 0h1m34 0h1m30 0h1m-422 1h1m8 0h1m56 0h2m1 0h1m23 0h1m2 0h1m77 0h5m63 0h5m80 0h1m9 0h1m15 0h2m36 0h1m28 0h1m-420 1h1m6 0h1m59 0h1m24 0h3m83 0h7m49 0h7m83 0h2m10 0h1m14 0h1m39 0h1m26 0h1m-418 1h1m4 0h1m61 0h1m22 0h1m3 0h2m88 0h11m27 0h11m88 0h2m13 0h1m12 0h1m41 0h1m24 0h1m-416 1h1m2 0h1m63 0h2m20 0h1m5 0h1m98 0h27m98 0h1m15 0h1m10 0h2m43 0h1m22 0h1m-414 1h1m67 0h1m18 0h1m7 0h2m110 0h1m108 0h2m17 0h1m8 0h1m46 0h1m20 0h1m-413 1h1m68 0h1m16 0h1m10 0h2m108 0h1m106 0h2m20 0h1m6 0h1m48 0h1m19 0h1m-412 1h1m68 0h2m14 0h1m12 0h2m106 0h1m104 0h2m22 0h1m4 0h2m50 0h1m17 0h1m-410 1h1m69 0h1m12 0h1m15 0h2m104 0h1m102 0h2m2 0h1m22 0h1m2 0h1m53 0h1m15 0h1m-408 1h1m69 0h2m10 0h1m17 0h2m102 0h1m100 0h2m4 0h1m23 0h2m55 0h1m13 0h1m-406 1h1m70 0h1m8 0h1m20 0h2m100 0h1m98 0h2m7 0h1m21 0h1m58 0h1m11 0h1m-404 1h1m70 0h2m5 0h1m22 0h3m98 0h1m96 0h2m9 0h1m19 0h2m60 0h1m9 0h1m-402 1h1m71 0h2m3 0h1m22 0h1m2 0h2m96 0h1m94 0h2m12 0h1m16 0h2m63 0h1m7 0h1m-400 1h1m72 0h1m1 0h1m22 0h1m5 0h2m94 0h1m92 0h2m14 0h1m15 0h1m66 0h1m5 0h1m-398 1h1m72 0h2m22 0h1m7 0h2m92 0h1m90 0h2m17 0h1m12 0h2m68 0h1m3 0h1m-396 1h1m73 0h1m20 0h1m10 0h2m90 0h1m88 0h2m19 0h1m11 0h1m73 0h1m-394 1h2m72 0h2m18 0h1m12 0h3m87 0h1m85 0h4m21 0h1m8 0h2m72 0h2m-391 1h1m73 0h2m15 0h1m16 0h2m85 0h1m83 0h2m3 0h1m21 0h1m6 0h2m73 0h1m-388 1h1m74 0h2m13 0h1m18 0h3m82 0h1m80 0h3m6 0h1m21 0h1m3 0h2m74 0h1m-386 1h1m75 0h1m12 0h1m20 0h3m80 0h1m78 0h2m9 0h1m24 0h1m75 0h1m-384 1h1m75 0h2m9 0h1m21 0h1m2 0h3m77 0h1m75 0h3m12 0h1m21 0h2m75 0h1m-382 1h1m76 0h2m7 0h1m20 0h1m6 0h3m74 0h1m72 0h3m15 0h1m19 0h2m76 0h1m-380 1h1m77 0h2m4 0h1m21 0h1m9 0h3m71 0h1m69 0h3m19 0h1m16 0h2m77 0h1m-378 1h1m78 0h2m2 0h1m21 0h1m12 0h3m68 0h1m66 0h4m21 0h1m14 0h2m78 0h1m-376 1h1m79 0h2m21 0h1m16 0h3m65 0h1m63 0h3m3 0h1m21 0h1m12 0h2m79 0h1m-374 1h2m79 0h2m19 0h1m19 0h3m62 0h1m60 0h3m7 0h1m21 0h1m9 0h2m79 0h2m-371 1h1m80 0h2m17 0h1m20 0h1m1 0h4m58 0h1m56 0h4m10 0h1m21 0h1m7 0h2m80 0h1m-368 1h1m81 0h2m14 0h1m21 0h1m5 0h4m54 0h1m52 0h4m14 0h1m22 0h1m4 0h2m81 0h1m-366 1h1m82 0h3m11 0h1m20 0h1m10 0h4m50 0h1m48 0h4m19 0h1m21 0h1m1 0h3m82 0h1m-364 1h1m84 0h2m9 0h1m20 0h1m14 0h5m45 0h1m43 0h5m2 0h1m20 0h1m21 0h2m84 0h1m-362 1h2m84 0h2m6 0h1m21 0h1m19 0h5m40 0h1m38 0h5m7 0h1m20 0h1m19 0h2m84 0h2m-359 1h1m85 0h3m3 0h1m20 0h1m20 0h1m4 0h6m34 0h1m32 0h6m13 0h1m20 0h1m15 0h3m85 0h1m-356 1h1m87 0h2m22 0h1m20 0h1m10 0h8m26 0h1m24 0h8m19 0h1m20 0h1m13 0h2m87 0h1m-354 1h1m88 0h3m19 0h1m19 0h1m19 0h11m15 0h1m13 0h11m7 0h1m19 0h1m20 0h1m10 0h3m88 0h1m-352 1h2m89 0h3m15 0h1m20 0h1m19 0h1m10 0h29m18 0h1m19 0h1m21 0h1m6 0h3m89 0h2m-349 1h1m91 0h2m13 0h1m20 0h1m19 0h1m19 0h1m18 0h1m18 0h1m20 0h1m20 0h1m4 0h2m91 0h1m-346 1h1m92 0h3m10 0h1m20 0h1m19 0h1m19 0h1m18 0h1m19 0h1m19 0h1m22 0h3m92 0h1m-344 1h2m93 0h3m6 0h1m20 0h1m20 0h1m19 0h1m18 0h1m19 0h1m19 0h1m19 0h3m93 0h2m-341 1h1m95 0h3m3 0h1m20 0h1m20 0h1m19 0h1m18 0h1m19 0h1m19 0h1m16 0h3m95 0h1m-338 1h1m97 0h4m20 0h1m20 0h1m19 0h1m18 0h1m19 0h1m20 0h1m11 0h4m97 0h1m-336 1h2m98 0h4m17 0h1m19 0h1m20 0h1m18 0h1m19 0h1m20 0h1m8 0h3m99 0h2m-333 1h1m97 0h1m3 0h4m12 0h1m20 0h1m20 0h1m18 0h1m19 0h1m20 0h1m4 0h4m101 0h1m-330 1h1m95 0h1m8 0h4m8 0h1m20 0h1m20 0h1m18 0h1m20 0h1m20 0h4m104 0h1m-328 1h2m93 0h1m12 0h5m3 0h1m20 0h1m20 0h1m18 0h1m20 0h1m15 0h6m105 0h2m-325 1h1m92 0h1m17 0h4m20 0h1m20 0h1m18 0h1m20 0h1m11 0h4m5 0h1m104 0h1m-322 1h2m90 0h1m21 0h6m14 0h1m20 0h1m18 0h1m20 0h1m5 0h6m9 0h1m102 0h2m-319 1h1m88 0h1m28 0h6m8 0h1m20 0h1m18 0h1m20 0h6m16 0h1m100 0h1m-316 1h2m86 0h1m34 0h8m21 0h1m18 0h1m12 0h8m22 0h1m98 0h2m-313 1h1m85 0h1m42 0h11m31 0h11m30 0h1m97 0h1m-310 1h2m82 0h1m54 0h31m41 0h1m95 0h2m-307 1h1m81 0h1m127 0h1m93 0h1m-304 1h2m79 0h1m127 0h1m91 0h2m-301 1h2m76 0h1m128 0h1m89 0h2m-297 1h1m75 0h1m128 0h1m88 0h1m-294 1h2m73 0h1m129 0h1m85 0h2m-291 1h2m71 0h1m129 0h1m83 0h2m-287 1h1m69 0h1m130 0h1m82 0h1m-284 1h2m67 0h1m130 0h1m80 0h2m-281 1h2m65 0h1m131 0h1m77 0h2m-277 1h2m62 0h1m132 0h1m75 0h2m-273 1h2m60 0h1m132 0h1m73 0h2m-269 1h2m58 0h1m132 0h1m71 0h2m-265 1h2m56 0h1m133 0h1m68 0h2m-261 1h1m54 0h1m134 0h1m67 0h1m-258 1h2m52 0h1m134 0h1m65 0h2m-255 1h3m49 0h1m134 0h1m62 0h3m-250 1h2m46 0h1m136 0h1m59 0h2m-245 1h2m44 0h1m136 0h1m57 0h2m-241 1h2m42 0h1m136 0h1m55 0h2m-237 1h2m40 0h1m136 0h1m53 0h2m-233 1h2m37 0h1m138 0h1m50 0h2m-229 1h3m34 0h1m138 0h1m47 0h3m-224 1h2m32 0h1m138 0h1m45 0h2m-219 1h3m28 0h1m139 0h1m42 0h3m-214 1h2m26 0h1m140 0h1m39 0h2m-209 1h3m23 0h1m140 0h1m36 0h3m-204 1h2m20 0h1m141 0h1m34 0h2m-199 1h3m17 0h1m141 0h1m31 0h3m-194 1h3m14 0h1m142 0h1m27 0h3m-188 1h3m11 0h1m142 0h1m24 0h3m-182 1h3m7 0h1m143 0h1m21 0h3m-176 1h3m4 0h1m143 0h1m18 0h3m-170 1h4m145 0h1m13 0h4m-163 1h3m142 0h1m10 0h3m-156 1h4m138 0h1m6 0h4m-149 1h4m137 0h4m-141 1h4m129 0h4m-133 1h4m121 0h4m-125 1h5m111 0h5m-116 1h5m101 0h5m-106 1h6m89 0h6m-95 1h7m75 0h7m-82 1h8m59 0h8m-67 1h13m33 0h13m-46 1h33"/>
<text transform="translate(96.5 356) scale(0.87 1)" fill="#ff0000" font-size="13" text-anchor="middle" letter-spacing="1.2" font-family="Liberation Mono,monospace">1</text>
<text transform="translate(148.5 450) scale(0.87 1)" fill="#ffff00" font-size="13" text-anchor="middle" letter-spacing="1.2" font-family="Liberation Mono,monospace">2</text>
<text transform="translate(244.5 506) scale(0.87 1)" fill="#00ff00" font-size="13" text-anchor="middle" letter-spacing="1.2" font-family="Liberation Mono,monospace">3</text>
<text transform="translate(357.5 506) scale(0.87 1)" fill="#0000ff" font-size="13" text-anchor="middle" letter-spacing="1.2" font-family="Liberation Mono,monospace">4</text>
<text transform="translate(452.5 447) scale(0.87 1)" fill="#ff0000" font-size="13" text-anchor="middle" letter-spacing="1.2" font-family="Liberation Mono,monospace">5</text>
<text transform="translate(503.5 354) scale(0.87 1)" fill="#ffff00" font-size="13" text-anchor="middle" letter-spacing="1.2" font-family="Liberation Mono,monospace">6</text>
<text transform="translate(502.5 252) scale(0.87 1)" fill="#00ff00" font-size="13" text-anchor="middle" letter-spacing="1.2" font-family="Liberation Mono,monospace">7</text>
<text transform="translate(450.5 158) scale(0.87 1)" fill="#0000ff" font-size="13" text-anchor="middle" letter-spacing="1.2" font-family="Liberation Mono,monospace">8</text>
<text transform="translate(354.5 102) scale(0.87 1)" fill="#ff0000" font-size="13" text-anchor="middle" letter-spacing="1.2" font-family="Liberation Mono,monospace">9</text>
<text transform="translate(242.0 102) scale(0.87 1)" fill="#ffff00" font-size="13" text-anchor="middle" letter-spacing="1.2" font-family="Liberation Mono,monospace">10</text>
<text transform="translate(147.0 161) scale(0.87 1)" fill="#00ff00" font-size="13" text-anchor="middle" letter-spacing="1.2" font-family="Liberation Mono,monospace">11</text>
<text transform="translate(96.0 254) scale(0.87 1)" fill="#0000ff" font-size="13" text-anchor="middle" letter-spacing="1.2" font-family="Liberation Mono,monospace">12</text>
<text x="111" y="308" fill="#ff0000" font-size="24" textLength="17" lengthAdjust="spacingAndGlyphs">Asc</text>
<text x="290" y="128" fill="#ffff00" font-size="24" textLength="17" lengthAdjust="spacingAndGlyphs">MC</text>
</svg>
<div id="side"><div><span style="color:#ffffff">Astrolog 5.40</span></div><div><span style="color:#c0c0c0">&quot;Anonymous&quot;</span></div><div><span style="color:#c0c0c0">Sat January 3, 2004</span></div><div><span style="color:#c0c0c0">12:04am (ST +8:00 GMT)</span></div><div><span style="color:#c0c0c0">&quot;chang&quot;</span></div><div><span style="color:#c0c0c0">125°31E 25°03N</span></div><div><span style="color:#c0c0c0">Placidus houses.</span></div><div><span style="color:#c0c0c0">Tropical, Geocentric.</span></div><div><span style="color:#c0c0c0">Julian Day = 2453007.1694</span></div><div></div><div><span style="color:#ff0000"> 1st house: </span><span style="color:#00ff00">16Lib25</span></div><div><span style="color:#ffff00"> 2nd house: </span><span style="color:#0000ff">15Sco21</span></div><div><span style="color:#00ff00"> 3rd house: </span><span style="color:#ff0000">15Sag38</span></div><div><span style="color:#0000ff"> 4th house: </span><span style="color:#ffff00">16Cap45</span></div><div><span style="color:#ff0000"> 5th house: </span><span style="color:#00ff00">18Aqu11</span></div><div><span style="color:#ffff00"> 6th house: </span><span style="color:#0000ff">18Pis39</span></div><div><span style="color:#00ff00"> 7th house: </span><span style="color:#ff0000">16Ari25</span></div><div><span style="color:#0000ff"> 8th house: </span><span style="color:#ffff00">15Tau21</span></div><div><span style="color:#ff0000"> 9th house: </span><span style="color:#00ff00">15Gem38</span></div><div><span style="color:#ffff00">10th house: </span><span style="color:#0000ff">16Can45</span></div><div><span style="color:#00ff00">11th house: </span><span style="color:#ff0000">18Leo11</span></div><div><span style="color:#0000ff">12th house: </span><span style="color:#ffff00">18Vir39</span></div><div></div><div><span style="color:#ff0000"> Sun: </span><span style="color:#ffff00">11Cap36</span> <span style="color:#c0c0c0"> - 0°00'</span></div><div><span style="color:#0000ff">Moon: </span><span style="color:#ffff00">17Tau16</span> <span style="color:#c0c0c0"> - 0°11'</span></div><div><span style="color:#00ff00">Merc: </span><span style="color:#ff0000">27Sag30</span><span style="color:#ffffff">R</span><span style="color:#c0c0c0"> + 3°12'</span></div><div><span style="color:#00ff00">Venu: </span><span style="color:#00ff00">15Aqu16</span> <span style="color:#c0c0c0"> - 1°49'</span></div><div><span style="color:#ff0000">Mars: </span><span style="color:#ff0000">10Ari10</span> <span style="color:#c0c0c0"> + 0°06'</span></div><div><span style="color:#ff0000">Jupi: </span><span style="color:#ffff00">18Vir54</span> <span style="color:#c0c0c0"> + 1°13'</span></div><div><span style="color:#ffff00">Satu: </span><span style="color:#0000ff"> 9Can36</span><span style="color:#ffffff">R</span><span style="color:#c0c0c0"> - 0°40'</span></div><div><span style="color:#00ff00">Uran: </span><span style="color:#0000ff"> 0Pis08</span> <span style="color:#c0c0c0"> - 0°44'</span></div><div><span style="color:#0000ff">Nept: </span><span style="color:#00ff00">11Aqu45</span> <span style="color:#c0c0c0"> - 0°02'</span></div><div><span style="color:#0000ff">Plut: </span><span style="color:#ff0000">20Sag34</span> <span style="color:#c0c0c0"> + 8°37'</span></div><div><span style="color:#008080">Node: </span><span style="color:#ffff00">17Tau37</span><span style="color:#ffffff">R</span><span style="color:#c0c0c0"> + 0°00'</span></div><div></div><div><span style="color:#c0c0c0">Fire: 3, Earth: 4,</span></div><div><span style="color:#c0c0c0">Air : 3, Water: 3</span></div><div><span style="color:#c0c0c0">Car: 5, Fix: 4, Mut: 4</span></div><div><span style="color:#c0c0c0">Yang: 6, Yin: 7</span></div><div><span style="color:#c0c0c0">M: 4, N: 7, A: 4, D: 7</span></div><div><span style="color:#c0c0c0">Ang: 2, Suc: 3, Cad: 6</span></div><div><span style="color:#c0c0c0">Learn: 6, Share: 7</span></div></div>
</body></html>
